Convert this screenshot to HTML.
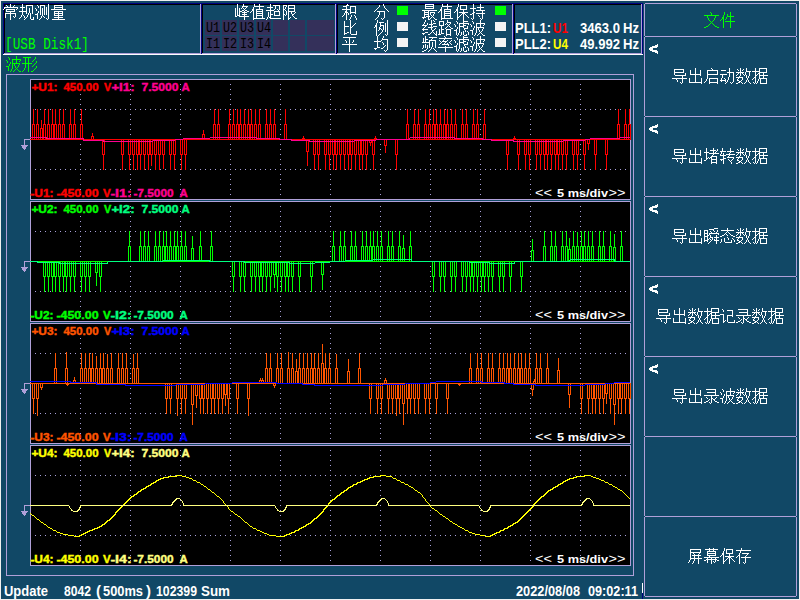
<!DOCTYPE html>
<html><head><meta charset="utf-8"><style>
html,body{margin:0;padding:0;width:800px;height:600px;overflow:hidden;background:#114866}
svg{display:block}
</style></head><body><div style="position:relative;width:800px;height:600px">
<svg width="800" height="600" style="position:absolute;left:0;top:0" shape-rendering="crispEdges">
<rect x="0" y="0" width="800" height="600" fill="#114866"/>
<rect x="0" y="0" width="800" height="1" fill="#f0f0f0"/>
<rect x="0" y="0" width="1" height="600" fill="#f0f0f0"/>
<rect x="0" y="599" width="800" height="1" fill="#f0f0f0"/>
<rect x="799" y="0" width="1" height="600" fill="#f0f0f0"/>
<rect x="3" y="3" width="199" height="1" fill="#000080"/>
<rect x="3" y="3" width="1" height="52" fill="#000080"/>
<rect x="4" y="4" width="197" height="1" fill="#000000"/>
<rect x="4" y="4" width="1" height="50" fill="#000000"/>
<rect x="4" y="53" width="197" height="1" fill="#b0a0d8"/>
<rect x="200" y="4" width="1" height="50" fill="#b0a0d8"/>
<rect x="3" y="54" width="199" height="1" fill="#ffffff"/>
<rect x="201" y="3" width="1" height="52" fill="#ffffff"/>
<rect x="201" y="3" width="136" height="1" fill="#000080"/>
<rect x="201" y="3" width="1" height="52" fill="#000080"/>
<rect x="202" y="4" width="134" height="1" fill="#000000"/>
<rect x="202" y="4" width="1" height="50" fill="#000000"/>
<rect x="202" y="53" width="134" height="1" fill="#b0a0d8"/>
<rect x="335" y="4" width="1" height="50" fill="#b0a0d8"/>
<rect x="201" y="54" width="136" height="1" fill="#ffffff"/>
<rect x="336" y="3" width="1" height="52" fill="#ffffff"/>
<rect x="336" y="3" width="178" height="1" fill="#000080"/>
<rect x="336" y="3" width="1" height="52" fill="#000080"/>
<rect x="337" y="4" width="176" height="1" fill="#000000"/>
<rect x="337" y="4" width="1" height="50" fill="#000000"/>
<rect x="337" y="53" width="176" height="1" fill="#b0a0d8"/>
<rect x="512" y="4" width="1" height="50" fill="#b0a0d8"/>
<rect x="336" y="54" width="178" height="1" fill="#ffffff"/>
<rect x="513" y="3" width="1" height="52" fill="#ffffff"/>
<rect x="513" y="3" width="130" height="1" fill="#000080"/>
<rect x="513" y="3" width="1" height="52" fill="#000080"/>
<rect x="514" y="4" width="128" height="1" fill="#000000"/>
<rect x="514" y="4" width="1" height="50" fill="#000000"/>
<rect x="514" y="53" width="128" height="1" fill="#b0a0d8"/>
<rect x="641" y="4" width="1" height="50" fill="#b0a0d8"/>
<rect x="513" y="54" width="130" height="1" fill="#ffffff"/>
<rect x="642" y="3" width="1" height="52" fill="#ffffff"/>
<rect x="642" y="3" width="1" height="51" fill="#000080"/>
<path fill="#ffffff" d="M10 4h1v1h-1zM22 4h1v1h-1zM48 4h1v1h-1zM6 5h1v1h-1zM10 5h1v1h-1zM14 5h1v1h-1zM22 5h1v1h-1zM26 5h7v1h-7zM37 5h1v1h-1zM40 5h5v1h-5zM48 5h1v1h-1zM54 5h9v1h-9zM7 6h1v1h-1zM10 6h1v1h-1zM13 6h1v1h-1zM22 6h1v1h-1zM26 6h1v1h-1zM32 6h1v1h-1zM38 6h1v1h-1zM40 6h1v1h-1zM44 6h1v1h-1zM48 6h1v1h-1zM54 6h1v1h-1zM62 6h1v1h-1zM4 7h14v1h-14zM20 7h5v1h-5zM26 7h1v1h-1zM32 7h1v1h-1zM38 7h1v1h-1zM40 7h1v1h-1zM44 7h1v1h-1zM46 7h1v1h-1zM48 7h1v1h-1zM54 7h9v1h-9zM4 8h1v1h-1zM17 8h1v1h-1zM22 8h1v1h-1zM26 8h1v1h-1zM29 8h1v1h-1zM32 8h1v1h-1zM35 8h1v1h-1zM40 8h1v1h-1zM42 8h1v1h-1zM44 8h1v1h-1zM46 8h1v1h-1zM48 8h1v1h-1zM54 8h1v1h-1zM62 8h1v1h-1zM3 9h1v1h-1zM6 9h9v1h-9zM16 9h1v1h-1zM22 9h1v1h-1zM26 9h1v1h-1zM29 9h1v1h-1zM32 9h1v1h-1zM36 9h1v1h-1zM40 9h1v1h-1zM42 9h1v1h-1zM44 9h1v1h-1zM46 9h1v1h-1zM48 9h1v1h-1zM51 9h15v1h-15zM6 10h1v1h-1zM14 10h1v1h-1zM22 10h1v1h-1zM26 10h1v1h-1zM29 10h1v1h-1zM32 10h1v1h-1zM36 10h1v1h-1zM40 10h1v1h-1zM42 10h1v1h-1zM44 10h1v1h-1zM46 10h1v1h-1zM48 10h1v1h-1zM6 11h9v1h-9zM19 11h8v1h-8zM29 11h1v1h-1zM32 11h1v1h-1zM38 11h1v1h-1zM40 11h1v1h-1zM42 11h1v1h-1zM44 11h1v1h-1zM46 11h1v1h-1zM48 11h1v1h-1zM54 11h9v1h-9zM10 12h1v1h-1zM22 12h1v1h-1zM26 12h1v1h-1zM29 12h1v1h-1zM32 12h1v1h-1zM38 12h1v1h-1zM40 12h1v1h-1zM42 12h1v1h-1zM44 12h1v1h-1zM46 12h1v1h-1zM48 12h1v1h-1zM54 12h1v1h-1zM58 12h1v1h-1zM62 12h1v1h-1zM5 13h11v1h-11zM22 13h1v1h-1zM26 13h1v1h-1zM28 13h1v1h-1zM30 13h1v1h-1zM32 13h1v1h-1zM37 13h1v1h-1zM40 13h1v1h-1zM42 13h1v1h-1zM44 13h1v1h-1zM46 13h1v1h-1zM48 13h1v1h-1zM54 13h9v1h-9zM5 14h1v1h-1zM10 14h1v1h-1zM15 14h1v1h-1zM22 14h1v1h-1zM28 14h1v1h-1zM30 14h1v1h-1zM35 14h3v1h-3zM40 14h1v1h-1zM42 14h1v1h-1zM44 14h1v1h-1zM46 14h1v1h-1zM48 14h1v1h-1zM54 14h1v1h-1zM58 14h1v1h-1zM62 14h1v1h-1zM5 15h1v1h-1zM10 15h1v1h-1zM15 15h1v1h-1zM21 15h1v1h-1zM23 15h1v1h-1zM27 15h1v1h-1zM30 15h1v1h-1zM37 15h1v1h-1zM42 15h1v1h-1zM48 15h1v1h-1zM54 15h9v1h-9zM5 16h1v1h-1zM10 16h1v1h-1zM13 16h1v1h-1zM15 16h1v1h-1zM21 16h1v1h-1zM24 16h1v1h-1zM27 16h1v1h-1zM30 16h1v1h-1zM37 16h1v1h-1zM41 16h1v1h-1zM43 16h1v1h-1zM48 16h1v1h-1zM58 16h1v1h-1zM5 17h1v1h-1zM10 17h1v1h-1zM14 17h1v1h-1zM20 17h1v1h-1zM24 17h1v1h-1zM26 17h1v1h-1zM30 17h1v1h-1zM33 17h1v1h-1zM37 17h1v1h-1zM41 17h1v1h-1zM44 17h1v1h-1zM48 17h1v1h-1zM54 17h9v1h-9zM10 18h1v1h-1zM19 18h1v1h-1zM25 18h1v1h-1zM30 18h1v1h-1zM33 18h1v1h-1zM37 18h1v1h-1zM40 18h1v1h-1zM46 18h1v1h-1zM48 18h1v1h-1zM58 18h1v1h-1zM10 19h1v1h-1zM24 19h1v1h-1zM31 19h3v1h-3zM39 19h1v1h-1zM47 19h1v1h-1zM52 19h13v1h-13z"/>
<text x="5" y="49" fill="#00ff00" font-size="17" font-weight="normal" font-family="Liberation Mono" textLength="84" lengthAdjust="spacingAndGlyphs">[USB Disk1]</text>
<path fill="#ffffff" d="M237 4h1v1h-1zM243 4h1v1h-1zM254 4h1v1h-1zM259 4h1v1h-1zM270 4h1v1h-1zM237 5h1v1h-1zM243 5h1v1h-1zM254 5h1v1h-1zM259 5h1v1h-1zM270 5h1v1h-1zM273 5h7v1h-7zM283 5h4v1h-4zM288 5h7v1h-7zM237 6h1v1h-1zM242 6h6v1h-6zM254 6h10v1h-10zM270 6h1v1h-1zM275 6h1v1h-1zM279 6h1v1h-1zM283 6h1v1h-1zM286 6h1v1h-1zM288 6h1v1h-1zM294 6h1v1h-1zM237 7h1v1h-1zM242 7h1v1h-1zM246 7h1v1h-1zM253 7h1v1h-1zM259 7h1v1h-1zM267 7h6v1h-6zM275 7h1v1h-1zM279 7h1v1h-1zM283 7h1v1h-1zM285 7h1v1h-1zM288 7h1v1h-1zM294 7h1v1h-1zM235 8h1v1h-1zM237 8h1v1h-1zM239 8h1v1h-1zM241 8h1v1h-1zM243 8h1v1h-1zM245 8h1v1h-1zM253 8h1v1h-1zM259 8h1v1h-1zM270 8h1v1h-1zM275 8h1v1h-1zM279 8h1v1h-1zM283 8h1v1h-1zM285 8h1v1h-1zM288 8h7v1h-7zM235 9h1v1h-1zM237 9h1v1h-1zM239 9h1v1h-1zM244 9h1v1h-1zM252 9h2v1h-2zM256 9h7v1h-7zM270 9h1v1h-1zM274 9h1v1h-1zM277 9h1v1h-1zM279 9h1v1h-1zM283 9h2v1h-2zM288 9h1v1h-1zM294 9h1v1h-1zM235 10h1v1h-1zM237 10h1v1h-1zM239 10h1v1h-1zM242 10h2v1h-2zM245 10h2v1h-2zM252 10h2v1h-2zM256 10h1v1h-1zM262 10h1v1h-1zM266 10h8v1h-8zM278 10h1v1h-1zM283 10h1v1h-1zM285 10h1v1h-1zM288 10h1v1h-1zM294 10h1v1h-1zM235 11h1v1h-1zM237 11h1v1h-1zM239 11h3v1h-3zM244 11h1v1h-1zM247 11h2v1h-2zM251 11h1v1h-1zM253 11h1v1h-1zM256 11h7v1h-7zM270 11h1v1h-1zM274 11h6v1h-6zM283 11h1v1h-1zM286 11h1v1h-1zM288 11h7v1h-7zM235 12h1v1h-1zM237 12h1v1h-1zM239 12h1v1h-1zM242 12h5v1h-5zM250 12h1v1h-1zM253 12h1v1h-1zM256 12h1v1h-1zM262 12h1v1h-1zM268 12h1v1h-1zM270 12h1v1h-1zM274 12h1v1h-1zM279 12h1v1h-1zM283 12h1v1h-1zM286 12h1v1h-1zM288 12h1v1h-1zM291 12h1v1h-1zM295 12h1v1h-1zM235 13h1v1h-1zM237 13h1v1h-1zM239 13h1v1h-1zM244 13h1v1h-1zM253 13h1v1h-1zM256 13h7v1h-7zM268 13h1v1h-1zM270 13h1v1h-1zM274 13h1v1h-1zM279 13h1v1h-1zM283 13h1v1h-1zM286 13h1v1h-1zM288 13h1v1h-1zM291 13h1v1h-1zM294 13h1v1h-1zM235 14h1v1h-1zM237 14h1v1h-1zM239 14h1v1h-1zM242 14h5v1h-5zM253 14h1v1h-1zM256 14h1v1h-1zM262 14h1v1h-1zM268 14h1v1h-1zM270 14h3v1h-3zM274 14h1v1h-1zM279 14h1v1h-1zM283 14h2v1h-2zM286 14h1v1h-1zM288 14h1v1h-1zM292 14h2v1h-2zM235 15h1v1h-1zM237 15h3v1h-3zM244 15h1v1h-1zM253 15h1v1h-1zM256 15h7v1h-7zM268 15h1v1h-1zM270 15h1v1h-1zM274 15h6v1h-6zM283 15h1v1h-1zM285 15h1v1h-1zM288 15h1v1h-1zM292 15h1v1h-1zM235 16h2v1h-2zM239 16h10v1h-10zM253 16h1v1h-1zM256 16h1v1h-1zM262 16h1v1h-1zM268 16h1v1h-1zM270 16h1v1h-1zM283 16h1v1h-1zM288 16h1v1h-1zM293 16h1v1h-1zM244 17h1v1h-1zM253 17h1v1h-1zM256 17h1v1h-1zM262 17h1v1h-1zM267 17h1v1h-1zM269 17h2v1h-2zM283 17h1v1h-1zM288 17h1v1h-1zM290 17h1v1h-1zM294 17h1v1h-1zM244 18h1v1h-1zM253 18h12v1h-12zM267 18h1v1h-1zM270 18h11v1h-11zM283 18h1v1h-1zM288 18h2v1h-2zM295 18h2v1h-2zM244 19h1v1h-1zM253 19h1v1h-1zM266 19h1v1h-1zM283 19h1v1h-1zM288 19h1v1h-1z"/>
<rect x="205" y="20" width="15" height="15" fill="#34305a"/>
<rect x="222" y="20" width="15" height="15" fill="#34305a"/>
<rect x="239" y="20" width="15" height="15" fill="#34305a"/>
<rect x="256" y="20" width="15" height="15" fill="#34305a"/>
<rect x="273" y="20" width="15" height="15" fill="#34305a"/>
<rect x="290" y="20" width="15" height="15" fill="#34305a"/>
<rect x="307" y="20" width="27" height="15" fill="#34305a"/>
<rect x="205" y="36" width="15" height="15" fill="#34305a"/>
<rect x="222" y="36" width="15" height="15" fill="#34305a"/>
<rect x="239" y="36" width="15" height="15" fill="#34305a"/>
<rect x="256" y="36" width="15" height="15" fill="#34305a"/>
<rect x="273" y="36" width="15" height="15" fill="#34305a"/>
<rect x="290" y="36" width="15" height="15" fill="#34305a"/>
<rect x="307" y="36" width="27" height="15" fill="#34305a"/>
<text x="206" y="32" fill="#000000" font-size="14" font-weight="normal" font-family="Liberation Mono" textLength="14" lengthAdjust="spacingAndGlyphs">U1</text>
<text x="206" y="48" fill="#000000" font-size="14" font-weight="normal" font-family="Liberation Mono" textLength="14" lengthAdjust="spacingAndGlyphs">I1</text>
<text x="223" y="32" fill="#000000" font-size="14" font-weight="normal" font-family="Liberation Mono" textLength="14" lengthAdjust="spacingAndGlyphs">U2</text>
<text x="223" y="48" fill="#000000" font-size="14" font-weight="normal" font-family="Liberation Mono" textLength="14" lengthAdjust="spacingAndGlyphs">I2</text>
<text x="240" y="32" fill="#000000" font-size="14" font-weight="normal" font-family="Liberation Mono" textLength="14" lengthAdjust="spacingAndGlyphs">U3</text>
<text x="240" y="48" fill="#000000" font-size="14" font-weight="normal" font-family="Liberation Mono" textLength="14" lengthAdjust="spacingAndGlyphs">I3</text>
<text x="257" y="32" fill="#000000" font-size="14" font-weight="normal" font-family="Liberation Mono" textLength="14" lengthAdjust="spacingAndGlyphs">U4</text>
<text x="257" y="48" fill="#000000" font-size="14" font-weight="normal" font-family="Liberation Mono" textLength="14" lengthAdjust="spacingAndGlyphs">I4</text>
<path fill="#ffffff" d="M347 4h1v1h-1zM346 5h3v1h-3zM343 6h4v1h-4zM350 6h6v1h-6zM346 7h1v1h-1zM350 7h1v1h-1zM355 7h1v1h-1zM346 8h1v1h-1zM350 8h1v1h-1zM355 8h1v1h-1zM342 9h9v1h-9zM355 9h1v1h-1zM346 10h1v1h-1zM350 10h1v1h-1zM355 10h1v1h-1zM345 11h2v1h-2zM350 11h1v1h-1zM355 11h1v1h-1zM345 12h3v1h-3zM350 12h6v1h-6zM344 13h1v1h-1zM346 13h1v1h-1zM348 13h1v1h-1zM350 13h1v1h-1zM355 13h1v1h-1zM344 14h1v1h-1zM346 14h1v1h-1zM348 14h1v1h-1zM343 15h1v1h-1zM346 15h1v1h-1zM351 15h1v1h-1zM354 15h1v1h-1zM342 16h1v1h-1zM346 16h1v1h-1zM351 16h1v1h-1zM355 16h1v1h-1zM346 17h1v1h-1zM350 17h1v1h-1zM355 17h1v1h-1zM346 18h1v1h-1zM350 18h1v1h-1zM356 18h1v1h-1zM346 19h1v1h-1zM349 19h1v1h-1zM356 19h1v1h-1z"/>
<path fill="#ffffff" d="M383 4h1v1h-1zM379 5h1v1h-1zM383 5h1v1h-1zM379 6h1v1h-1zM384 6h1v1h-1zM378 7h1v1h-1zM384 7h1v1h-1zM377 8h1v1h-1zM385 8h1v1h-1zM376 9h1v1h-1zM386 9h1v1h-1zM375 10h1v1h-1zM387 10h1v1h-1zM374 11h1v1h-1zM377 11h8v1h-8zM388 11h1v1h-1zM379 12h1v1h-1zM384 12h1v1h-1zM379 13h1v1h-1zM384 13h1v1h-1zM379 14h1v1h-1zM384 14h1v1h-1zM378 15h1v1h-1zM384 15h1v1h-1zM378 16h1v1h-1zM384 16h1v1h-1zM377 17h1v1h-1zM384 17h1v1h-1zM376 18h1v1h-1zM381 18h1v1h-1zM383 18h1v1h-1zM375 19h1v1h-1zM382 19h1v1h-1z"/>
<path fill="#ffffff" d="M350 20h1v1h-1zM344 21h1v1h-1zM350 21h1v1h-1zM344 22h1v1h-1zM350 22h1v1h-1zM344 23h1v1h-1zM350 23h1v1h-1zM355 23h1v1h-1zM344 24h1v1h-1zM350 24h1v1h-1zM354 24h1v1h-1zM344 25h1v1h-1zM350 25h1v1h-1zM353 25h1v1h-1zM344 26h5v1h-5zM350 26h1v1h-1zM352 26h1v1h-1zM344 27h1v1h-1zM350 27h2v1h-2zM344 28h1v1h-1zM350 28h1v1h-1zM344 29h1v1h-1zM350 29h1v1h-1zM344 30h1v1h-1zM350 30h1v1h-1zM344 31h1v1h-1zM350 31h1v1h-1zM356 31h1v1h-1zM344 32h1v1h-1zM347 32h2v1h-2zM350 32h1v1h-1zM356 32h1v1h-1zM344 33h3v1h-3zM350 33h1v1h-1zM356 33h1v1h-1zM344 34h1v1h-1zM351 34h6v1h-6z"/>
<path fill="#ffffff" d="M377 20h1v1h-1zM387 20h1v1h-1zM377 21h1v1h-1zM387 21h1v1h-1zM377 22h1v1h-1zM379 22h5v1h-5zM387 22h1v1h-1zM376 23h1v1h-1zM380 23h1v1h-1zM385 23h1v1h-1zM387 23h1v1h-1zM376 24h1v1h-1zM380 24h1v1h-1zM385 24h1v1h-1zM387 24h1v1h-1zM375 25h2v1h-2zM380 25h4v1h-4zM385 25h1v1h-1zM387 25h1v1h-1zM375 26h2v1h-2zM380 26h1v1h-1zM383 26h1v1h-1zM385 26h1v1h-1zM387 26h1v1h-1zM374 27h1v1h-1zM376 27h1v1h-1zM379 27h1v1h-1zM383 27h1v1h-1zM385 27h1v1h-1zM387 27h1v1h-1zM376 28h1v1h-1zM379 28h2v1h-2zM383 28h1v1h-1zM385 28h1v1h-1zM387 28h1v1h-1zM376 29h1v1h-1zM379 29h1v1h-1zM381 29h1v1h-1zM383 29h1v1h-1zM385 29h1v1h-1zM387 29h1v1h-1zM376 30h1v1h-1zM378 30h1v1h-1zM382 30h1v1h-1zM385 30h1v1h-1zM387 30h1v1h-1zM376 31h1v1h-1zM382 31h1v1h-1zM385 31h1v1h-1zM387 31h1v1h-1zM376 32h1v1h-1zM381 32h1v1h-1zM387 32h1v1h-1zM376 33h1v1h-1zM380 33h1v1h-1zM387 33h1v1h-1zM376 34h1v1h-1zM379 34h1v1h-1zM385 34h1v1h-1zM387 34h1v1h-1zM376 35h1v1h-1zM378 35h1v1h-1zM386 35h1v1h-1z"/>
<path fill="#ffffff" d="M343 37h13v1h-13zM349 38h1v1h-1zM349 39h1v1h-1zM345 40h1v1h-1zM349 40h1v1h-1zM353 40h1v1h-1zM346 41h1v1h-1zM349 41h1v1h-1zM353 41h1v1h-1zM346 42h1v1h-1zM349 42h1v1h-1zM352 42h1v1h-1zM349 43h1v1h-1zM342 44h15v1h-15zM349 45h1v1h-1zM349 46h1v1h-1zM349 47h1v1h-1zM349 48h1v1h-1zM349 49h1v1h-1zM349 50h1v1h-1zM349 51h1v1h-1z"/>
<path fill="#ffffff" d="M377 36h1v1h-1zM383 36h1v1h-1zM377 37h1v1h-1zM383 37h1v1h-1zM377 38h1v1h-1zM382 38h1v1h-1zM377 39h1v1h-1zM382 39h6v1h-6zM377 40h1v1h-1zM381 40h1v1h-1zM387 40h1v1h-1zM374 41h7v1h-7zM387 41h1v1h-1zM377 42h1v1h-1zM382 42h1v1h-1zM387 42h1v1h-1zM377 43h1v1h-1zM383 43h1v1h-1zM387 43h1v1h-1zM377 44h1v1h-1zM383 44h1v1h-1zM387 44h1v1h-1zM377 45h1v1h-1zM385 45h1v1h-1zM387 45h1v1h-1zM377 46h1v1h-1zM384 46h1v1h-1zM387 46h1v1h-1zM377 47h3v1h-3zM383 47h1v1h-1zM387 47h1v1h-1zM374 48h3v1h-3zM381 48h2v1h-2zM387 48h1v1h-1zM375 49h1v1h-1zM387 49h1v1h-1zM384 50h1v1h-1zM386 50h1v1h-1zM385 51h1v1h-1z"/>
<rect x="397" y="6" width="11" height="9" fill="#00ff00"/>
<rect x="397" y="22" width="11" height="9" fill="#f4f4f4"/>
<rect x="397" y="38" width="11" height="9" fill="#f4f4f4"/>
<path fill="#ffffff" d="M425 4h9v1h-9zM442 4h1v1h-1zM447 4h1v1h-1zM458 4h1v1h-1zM473 4h1v1h-1zM480 4h1v1h-1zM425 5h1v1h-1zM433 5h1v1h-1zM442 5h1v1h-1zM447 5h1v1h-1zM458 5h1v1h-1zM460 5h7v1h-7zM473 5h1v1h-1zM480 5h1v1h-1zM425 6h9v1h-9zM442 6h10v1h-10zM458 6h1v1h-1zM460 6h1v1h-1zM466 6h1v1h-1zM473 6h1v1h-1zM480 6h1v1h-1zM425 7h1v1h-1zM433 7h1v1h-1zM441 7h1v1h-1zM447 7h1v1h-1zM457 7h1v1h-1zM460 7h1v1h-1zM466 7h1v1h-1zM473 7h1v1h-1zM477 7h7v1h-7zM425 8h9v1h-9zM441 8h1v1h-1zM447 8h1v1h-1zM457 8h1v1h-1zM460 8h1v1h-1zM466 8h1v1h-1zM470 8h6v1h-6zM480 8h1v1h-1zM440 9h2v1h-2zM444 9h7v1h-7zM456 9h2v1h-2zM460 9h7v1h-7zM473 9h1v1h-1zM480 9h1v1h-1zM422 10h15v1h-15zM440 10h2v1h-2zM444 10h1v1h-1zM450 10h1v1h-1zM456 10h2v1h-2zM463 10h1v1h-1zM473 10h1v1h-1zM476 10h9v1h-9zM424 11h1v1h-1zM428 11h1v1h-1zM439 11h1v1h-1zM441 11h1v1h-1zM444 11h7v1h-7zM455 11h1v1h-1zM457 11h1v1h-1zM463 11h1v1h-1zM473 11h1v1h-1zM482 11h1v1h-1zM424 12h5v1h-5zM430 12h5v1h-5zM438 12h1v1h-1zM441 12h1v1h-1zM444 12h1v1h-1zM450 12h1v1h-1zM454 12h1v1h-1zM457 12h1v1h-1zM459 12h9v1h-9zM473 12h2v1h-2zM482 12h1v1h-1zM424 13h1v1h-1zM428 13h1v1h-1zM430 13h1v1h-1zM434 13h1v1h-1zM441 13h1v1h-1zM444 13h7v1h-7zM457 13h1v1h-1zM462 13h3v1h-3zM472 13h2v1h-2zM476 13h9v1h-9zM424 14h5v1h-5zM430 14h1v1h-1zM433 14h1v1h-1zM441 14h1v1h-1zM444 14h1v1h-1zM450 14h1v1h-1zM457 14h1v1h-1zM461 14h1v1h-1zM463 14h1v1h-1zM465 14h1v1h-1zM470 14h2v1h-2zM473 14h1v1h-1zM482 14h1v1h-1zM424 15h1v1h-1zM428 15h1v1h-1zM431 15h1v1h-1zM433 15h1v1h-1zM441 15h1v1h-1zM444 15h7v1h-7zM457 15h1v1h-1zM460 15h1v1h-1zM463 15h1v1h-1zM466 15h1v1h-1zM473 15h1v1h-1zM478 15h1v1h-1zM482 15h1v1h-1zM424 16h1v1h-1zM426 16h4v1h-4zM432 16h1v1h-1zM441 16h1v1h-1zM444 16h1v1h-1zM450 16h1v1h-1zM457 16h1v1h-1zM459 16h1v1h-1zM463 16h1v1h-1zM467 16h1v1h-1zM473 16h1v1h-1zM479 16h1v1h-1zM482 16h1v1h-1zM422 17h4v1h-4zM428 17h1v1h-1zM431 17h1v1h-1zM433 17h1v1h-1zM441 17h1v1h-1zM444 17h1v1h-1zM450 17h1v1h-1zM457 17h2v1h-2zM463 17h1v1h-1zM468 17h1v1h-1zM473 17h1v1h-1zM482 17h1v1h-1zM423 18h1v1h-1zM428 18h1v1h-1zM430 18h1v1h-1zM434 18h1v1h-1zM441 18h12v1h-12zM457 18h1v1h-1zM463 18h1v1h-1zM471 18h1v1h-1zM473 18h1v1h-1zM480 18h1v1h-1zM482 18h1v1h-1zM428 19h2v1h-2zM435 19h2v1h-2zM441 19h1v1h-1zM457 19h1v1h-1zM463 19h1v1h-1zM472 19h1v1h-1zM481 19h1v1h-1z"/>
<path fill="#ffffff" d="M425 20h1v1h-1zM431 20h1v1h-1zM433 20h1v1h-1zM447 20h1v1h-1zM463 20h1v1h-1zM480 20h1v1h-1zM425 21h1v1h-1zM431 21h1v1h-1zM434 21h1v1h-1zM439 21h5v1h-5zM447 21h1v1h-1zM456 21h1v1h-1zM463 21h5v1h-5zM472 21h1v1h-1zM480 21h1v1h-1zM424 22h1v1h-1zM431 22h1v1h-1zM439 22h1v1h-1zM443 22h1v1h-1zM447 22h4v1h-4zM457 22h1v1h-1zM463 22h1v1h-1zM473 22h1v1h-1zM480 22h1v1h-1zM424 23h1v1h-1zM427 23h1v1h-1zM431 23h1v1h-1zM433 23h3v1h-3zM439 23h1v1h-1zM443 23h1v1h-1zM446 23h1v1h-1zM450 23h1v1h-1zM457 23h1v1h-1zM459 23h10v1h-10zM473 23h1v1h-1zM476 23h9v1h-9zM423 24h1v1h-1zM427 24h1v1h-1zM429 24h4v1h-4zM439 24h1v1h-1zM443 24h1v1h-1zM445 24h1v1h-1zM447 24h1v1h-1zM449 24h1v1h-1zM454 24h1v1h-1zM459 24h1v1h-1zM463 24h1v1h-1zM468 24h1v1h-1zM470 24h1v1h-1zM476 24h1v1h-1zM480 24h1v1h-1zM484 24h1v1h-1zM422 25h5v1h-5zM431 25h1v1h-1zM439 25h5v1h-5zM448 25h1v1h-1zM455 25h1v1h-1zM459 25h1v1h-1zM463 25h3v1h-3zM471 25h1v1h-1zM476 25h1v1h-1zM480 25h1v1h-1zM483 25h1v1h-1zM425 26h1v1h-1zM431 26h1v1h-1zM433 26h4v1h-4zM441 26h1v1h-1zM447 26h1v1h-1zM449 26h1v1h-1zM455 26h1v1h-1zM459 26h5v1h-5zM467 26h1v1h-1zM471 26h1v1h-1zM474 26h1v1h-1zM476 26h1v1h-1zM480 26h1v1h-1zM424 27h1v1h-1zM428 27h5v1h-5zM441 27h1v1h-1zM446 27h1v1h-1zM450 27h1v1h-1zM457 27h1v1h-1zM459 27h1v1h-1zM463 27h1v1h-1zM467 27h1v1h-1zM474 27h1v1h-1zM476 27h8v1h-8zM423 28h1v1h-1zM431 28h1v1h-1zM435 28h1v1h-1zM441 28h1v1h-1zM445 28h1v1h-1zM451 28h2v1h-2zM457 28h1v1h-1zM459 28h1v1h-1zM464 28h4v1h-4zM473 28h1v1h-1zM476 28h1v1h-1zM478 28h1v1h-1zM483 28h1v1h-1zM422 29h6v1h-6zM431 29h1v1h-1zM434 29h1v1h-1zM439 29h1v1h-1zM441 29h3v1h-3zM446 29h5v1h-5zM456 29h1v1h-1zM459 29h1v1h-1zM464 29h1v1h-1zM473 29h1v1h-1zM476 29h1v1h-1zM478 29h1v1h-1zM482 29h1v1h-1zM423 30h1v1h-1zM432 30h2v1h-2zM439 30h1v1h-1zM441 30h1v1h-1zM446 30h1v1h-1zM450 30h1v1h-1zM454 30h3v1h-3zM459 30h1v1h-1zM465 30h1v1h-1zM470 30h3v1h-3zM476 30h1v1h-1zM479 30h1v1h-1zM482 30h1v1h-1zM432 31h1v1h-1zM436 31h1v1h-1zM439 31h1v1h-1zM441 31h1v1h-1zM446 31h1v1h-1zM450 31h1v1h-1zM456 31h1v1h-1zM459 31h1v1h-1zM463 31h1v1h-1zM465 31h1v1h-1zM467 31h1v1h-1zM472 31h1v1h-1zM476 31h1v1h-1zM479 31h1v1h-1zM481 31h1v1h-1zM425 32h3v1h-3zM431 32h1v1h-1zM433 32h1v1h-1zM436 32h1v1h-1zM439 32h1v1h-1zM441 32h1v1h-1zM446 32h1v1h-1zM450 32h1v1h-1zM456 32h1v1h-1zM459 32h1v1h-1zM461 32h1v1h-1zM463 32h1v1h-1zM468 32h1v1h-1zM472 32h1v1h-1zM476 32h1v1h-1zM480 32h1v1h-1zM422 33h3v1h-3zM430 33h1v1h-1zM434 33h1v1h-1zM436 33h1v1h-1zM439 33h1v1h-1zM441 33h3v1h-3zM446 33h1v1h-1zM450 33h1v1h-1zM456 33h1v1h-1zM458 33h1v1h-1zM461 33h1v1h-1zM463 33h1v1h-1zM468 33h1v1h-1zM472 33h1v1h-1zM475 33h1v1h-1zM479 33h1v1h-1zM481 33h1v1h-1zM423 34h1v1h-1zM428 34h2v1h-2zM435 34h2v1h-2zM438 34h3v1h-3zM446 34h5v1h-5zM456 34h1v1h-1zM458 34h1v1h-1zM461 34h1v1h-1zM463 34h1v1h-1zM466 34h1v1h-1zM468 34h1v1h-1zM472 34h1v1h-1zM475 34h1v1h-1zM478 34h1v1h-1zM482 34h1v1h-1zM436 35h1v1h-1zM446 35h1v1h-1zM450 35h1v1h-1zM457 35h1v1h-1zM460 35h1v1h-1zM464 35h3v1h-3zM474 35h1v1h-1zM477 35h1v1h-1zM483 35h2v1h-2z"/>
<path fill="#ffffff" d="M425 36h1v1h-1zM444 36h1v1h-1zM463 36h1v1h-1zM480 36h1v1h-1zM425 37h1v1h-1zM429 37h8v1h-8zM445 37h1v1h-1zM456 37h1v1h-1zM463 37h5v1h-5zM472 37h1v1h-1zM480 37h1v1h-1zM423 38h1v1h-1zM425 38h1v1h-1zM432 38h1v1h-1zM439 38h13v1h-13zM457 38h1v1h-1zM463 38h1v1h-1zM473 38h1v1h-1zM480 38h1v1h-1zM423 39h1v1h-1zM425 39h3v1h-3zM431 39h1v1h-1zM444 39h1v1h-1zM457 39h1v1h-1zM459 39h10v1h-10zM473 39h1v1h-1zM476 39h9v1h-9zM423 40h1v1h-1zM425 40h1v1h-1zM429 40h7v1h-7zM439 40h1v1h-1zM443 40h1v1h-1zM447 40h1v1h-1zM451 40h1v1h-1zM454 40h1v1h-1zM459 40h1v1h-1zM463 40h1v1h-1zM468 40h1v1h-1zM470 40h1v1h-1zM476 40h1v1h-1zM480 40h1v1h-1zM484 40h1v1h-1zM423 41h1v1h-1zM425 41h1v1h-1zM429 41h1v1h-1zM435 41h1v1h-1zM440 41h1v1h-1zM442 41h5v1h-5zM450 41h1v1h-1zM455 41h1v1h-1zM459 41h1v1h-1zM463 41h3v1h-3zM471 41h1v1h-1zM476 41h1v1h-1zM480 41h1v1h-1zM483 41h1v1h-1zM422 42h8v1h-8zM432 42h1v1h-1zM435 42h1v1h-1zM441 42h1v1h-1zM445 42h1v1h-1zM449 42h1v1h-1zM455 42h1v1h-1zM459 42h5v1h-5zM467 42h1v1h-1zM471 42h1v1h-1zM474 42h1v1h-1zM476 42h1v1h-1zM480 42h1v1h-1zM429 43h1v1h-1zM432 43h1v1h-1zM435 43h1v1h-1zM440 43h1v1h-1zM444 43h1v1h-1zM447 43h1v1h-1zM450 43h1v1h-1zM457 43h1v1h-1zM459 43h1v1h-1zM463 43h1v1h-1zM467 43h1v1h-1zM474 43h1v1h-1zM476 43h8v1h-8zM425 44h1v1h-1zM429 44h1v1h-1zM432 44h1v1h-1zM435 44h1v1h-1zM439 44h1v1h-1zM442 44h7v1h-7zM451 44h1v1h-1zM457 44h1v1h-1zM459 44h1v1h-1zM464 44h4v1h-4zM473 44h1v1h-1zM476 44h1v1h-1zM478 44h1v1h-1zM483 44h1v1h-1zM423 45h1v1h-1zM425 45h1v1h-1zM427 45h1v1h-1zM429 45h1v1h-1zM432 45h1v1h-1zM435 45h1v1h-1zM448 45h1v1h-1zM456 45h1v1h-1zM459 45h1v1h-1zM464 45h1v1h-1zM473 45h1v1h-1zM476 45h1v1h-1zM478 45h1v1h-1zM482 45h1v1h-1zM423 46h1v1h-1zM425 46h1v1h-1zM427 46h1v1h-1zM429 46h1v1h-1zM432 46h1v1h-1zM435 46h1v1h-1zM445 46h1v1h-1zM454 46h3v1h-3zM459 46h1v1h-1zM465 46h1v1h-1zM470 46h3v1h-3zM476 46h1v1h-1zM479 46h1v1h-1zM482 46h1v1h-1zM423 47h1v1h-1zM425 47h1v1h-1zM427 47h1v1h-1zM429 47h1v1h-1zM431 47h1v1h-1zM435 47h1v1h-1zM438 47h15v1h-15zM456 47h1v1h-1zM459 47h1v1h-1zM463 47h1v1h-1zM465 47h1v1h-1zM467 47h1v1h-1zM472 47h1v1h-1zM476 47h1v1h-1zM479 47h1v1h-1zM481 47h1v1h-1zM422 48h1v1h-1zM427 48h1v1h-1zM431 48h1v1h-1zM433 48h1v1h-1zM445 48h1v1h-1zM456 48h1v1h-1zM459 48h1v1h-1zM461 48h1v1h-1zM463 48h1v1h-1zM468 48h1v1h-1zM472 48h1v1h-1zM476 48h1v1h-1zM480 48h1v1h-1zM426 49h1v1h-1zM430 49h1v1h-1zM434 49h1v1h-1zM445 49h1v1h-1zM456 49h1v1h-1zM458 49h1v1h-1zM461 49h1v1h-1zM463 49h1v1h-1zM468 49h1v1h-1zM472 49h1v1h-1zM475 49h1v1h-1zM479 49h1v1h-1zM481 49h1v1h-1zM424 50h2v1h-2zM429 50h1v1h-1zM435 50h1v1h-1zM445 50h1v1h-1zM456 50h1v1h-1zM458 50h1v1h-1zM461 50h1v1h-1zM463 50h1v1h-1zM466 50h1v1h-1zM468 50h1v1h-1zM472 50h1v1h-1zM475 50h1v1h-1zM478 50h1v1h-1zM482 50h1v1h-1zM422 51h2v1h-2zM428 51h1v1h-1zM436 51h1v1h-1zM445 51h1v1h-1zM457 51h1v1h-1zM460 51h1v1h-1zM464 51h3v1h-3zM474 51h1v1h-1zM477 51h1v1h-1zM483 51h2v1h-2z"/>
<rect x="495" y="6" width="11" height="9" fill="#00ff00"/>
<rect x="495" y="22" width="11" height="9" fill="#f4f4f4"/>
<rect x="495" y="38" width="11" height="9" fill="#f4f4f4"/>
<text x="515" y="33" fill="#ffffff" font-size="14" font-weight="bold" font-family="Liberation Sans" textLength="36" lengthAdjust="spacingAndGlyphs">PLL1:</text>
<text x="553" y="33" fill="#ff0000" font-size="14" font-weight="bold" font-family="Liberation Sans" textLength="15" lengthAdjust="spacingAndGlyphs">U1</text>
<text x="580" y="33" fill="#ffffff" font-size="14" font-weight="bold" font-family="Liberation Sans" textLength="40" lengthAdjust="spacingAndGlyphs">3463.0</text>
<text x="623" y="33" fill="#ffffff" font-size="14" font-weight="bold" font-family="Liberation Sans" textLength="16" lengthAdjust="spacingAndGlyphs">Hz</text>
<text x="515" y="49" fill="#ffffff" font-size="14" font-weight="bold" font-family="Liberation Sans" textLength="36" lengthAdjust="spacingAndGlyphs">PLL2:</text>
<text x="553" y="49" fill="#ffff00" font-size="14" font-weight="bold" font-family="Liberation Sans" textLength="15" lengthAdjust="spacingAndGlyphs">U4</text>
<text x="580" y="49" fill="#ffffff" font-size="14" font-weight="bold" font-family="Liberation Sans" textLength="40" lengthAdjust="spacingAndGlyphs">49.992</text>
<text x="623" y="49" fill="#ffffff" font-size="14" font-weight="bold" font-family="Liberation Sans" textLength="16" lengthAdjust="spacingAndGlyphs">Hz</text>
<rect x="644.5" y="3.5" width="152" height="33" rx="2" ry="2" fill="none" stroke="#b0a0d8" stroke-width="1"/>
<path fill="#00ff00" d="M710 12h1v1h-1zM724 12h1v1h-1zM730 12h1v1h-1zM711 13h1v1h-1zM724 13h1v1h-1zM730 13h1v1h-1zM711 14h1v1h-1zM724 14h1v1h-1zM727 14h1v1h-1zM730 14h1v1h-1zM704 15h15v1h-15zM723 15h1v1h-1zM727 15h1v1h-1zM730 15h1v1h-1zM707 16h1v1h-1zM715 16h1v1h-1zM723 16h1v1h-1zM727 16h7v1h-7zM707 17h1v1h-1zM715 17h1v1h-1zM722 17h2v1h-2zM726 17h1v1h-1zM730 17h1v1h-1zM708 18h1v1h-1zM714 18h1v1h-1zM722 18h2v1h-2zM726 18h1v1h-1zM730 18h1v1h-1zM708 19h1v1h-1zM714 19h1v1h-1zM721 19h1v1h-1zM723 19h1v1h-1zM725 19h1v1h-1zM730 19h1v1h-1zM709 20h1v1h-1zM713 20h1v1h-1zM720 20h1v1h-1zM723 20h1v1h-1zM730 20h1v1h-1zM710 21h1v1h-1zM712 21h1v1h-1zM723 21h1v1h-1zM725 21h10v1h-10zM711 22h1v1h-1zM723 22h1v1h-1zM730 22h1v1h-1zM710 23h1v1h-1zM712 23h1v1h-1zM723 23h1v1h-1zM730 23h1v1h-1zM709 24h1v1h-1zM713 24h1v1h-1zM723 24h1v1h-1zM730 24h1v1h-1zM708 25h1v1h-1zM714 25h1v1h-1zM723 25h1v1h-1zM730 25h1v1h-1zM706 26h2v1h-2zM715 26h2v1h-2zM723 26h1v1h-1zM730 26h1v1h-1zM704 27h2v1h-2zM717 27h2v1h-2zM723 27h1v1h-1zM730 27h1v1h-1z"/>
<rect x="644.5" y="36.5" width="152" height="80" rx="2" ry="2" fill="none" stroke="#b0a0d8" stroke-width="1"/>
<path d="M657 44h1v1h-1zM655 45h3v1h-3zM652 46h6v1h-6zM650 47h7v1h-7zM649 48h4v1h-4zM649 49h4v1h-4zM650 50h7v1h-7zM652 51h6v1h-6zM655 52h3v1h-3zM657 53h1v1h-1z" fill="#ffffff"/>
<path fill="#ffffff" d="M695 68h1v1h-1zM711 68h1v1h-1zM729 68h1v1h-1zM740 68h1v1h-1zM746 68h1v1h-1zM755 68h1v1h-1zM759 68h8v1h-8zM674 69h10v1h-10zM695 69h1v1h-1zM712 69h1v1h-1zM729 69h1v1h-1zM737 69h1v1h-1zM740 69h1v1h-1zM743 69h1v1h-1zM746 69h1v1h-1zM755 69h1v1h-1zM759 69h1v1h-1zM766 69h1v1h-1zM674 70h1v1h-1zM683 70h1v1h-1zM690 70h1v1h-1zM695 70h1v1h-1zM700 70h1v1h-1zM707 70h11v1h-11zM721 70h5v1h-5zM729 70h1v1h-1zM738 70h1v1h-1zM740 70h1v1h-1zM742 70h1v1h-1zM746 70h1v1h-1zM755 70h1v1h-1zM759 70h1v1h-1zM766 70h1v1h-1zM674 71h1v1h-1zM683 71h1v1h-1zM690 71h1v1h-1zM695 71h1v1h-1zM700 71h1v1h-1zM707 71h1v1h-1zM717 71h1v1h-1zM729 71h1v1h-1zM740 71h1v1h-1zM746 71h5v1h-5zM752 71h8v1h-8zM766 71h1v1h-1zM674 72h10v1h-10zM690 72h1v1h-1zM695 72h1v1h-1zM700 72h1v1h-1zM707 72h1v1h-1zM717 72h1v1h-1zM727 72h7v1h-7zM736 72h8v1h-8zM745 72h1v1h-1zM749 72h1v1h-1zM755 72h1v1h-1zM759 72h8v1h-8zM674 73h1v1h-1zM685 73h1v1h-1zM690 73h1v1h-1zM695 73h1v1h-1zM700 73h1v1h-1zM707 73h1v1h-1zM717 73h1v1h-1zM729 73h1v1h-1zM733 73h1v1h-1zM738 73h1v1h-1zM740 73h1v1h-1zM742 73h1v1h-1zM745 73h1v1h-1zM749 73h1v1h-1zM755 73h1v1h-1zM758 73h2v1h-2zM763 73h1v1h-1zM674 74h1v1h-1zM685 74h1v1h-1zM690 74h11v1h-11zM707 74h11v1h-11zM720 74h7v1h-7zM729 74h1v1h-1zM733 74h1v1h-1zM737 74h1v1h-1zM740 74h1v1h-1zM743 74h1v1h-1zM745 74h1v1h-1zM749 74h1v1h-1zM755 74h1v1h-1zM757 74h1v1h-1zM759 74h1v1h-1zM763 74h1v1h-1zM675 75h11v1h-11zM695 75h1v1h-1zM700 75h1v1h-1zM707 75h1v1h-1zM722 75h1v1h-1zM729 75h1v1h-1zM733 75h1v1h-1zM736 75h1v1h-1zM740 75h1v1h-1zM744 75h1v1h-1zM746 75h1v1h-1zM749 75h1v1h-1zM755 75h2v1h-2zM759 75h9v1h-9zM682 76h1v1h-1zM695 76h1v1h-1zM707 76h1v1h-1zM722 76h1v1h-1zM729 76h1v1h-1zM733 76h1v1h-1zM739 76h1v1h-1zM746 76h1v1h-1zM748 76h1v1h-1zM755 76h1v1h-1zM759 76h1v1h-1zM763 76h1v1h-1zM682 77h1v1h-1zM695 77h1v1h-1zM707 77h1v1h-1zM722 77h1v1h-1zM728 77h1v1h-1zM733 77h1v1h-1zM736 77h7v1h-7zM746 77h1v1h-1zM748 77h1v1h-1zM754 77h2v1h-2zM759 77h1v1h-1zM763 77h1v1h-1zM672 78h15v1h-15zM689 78h1v1h-1zM695 78h1v1h-1zM701 78h1v1h-1zM707 78h1v1h-1zM709 78h9v1h-9zM721 78h1v1h-1zM724 78h1v1h-1zM728 78h1v1h-1zM733 78h1v1h-1zM738 78h1v1h-1zM742 78h1v1h-1zM747 78h1v1h-1zM753 78h1v1h-1zM755 78h1v1h-1zM759 78h8v1h-8zM676 79h1v1h-1zM682 79h1v1h-1zM689 79h1v1h-1zM695 79h1v1h-1zM701 79h1v1h-1zM706 79h1v1h-1zM709 79h1v1h-1zM717 79h1v1h-1zM721 79h1v1h-1zM725 79h1v1h-1zM728 79h1v1h-1zM733 79h1v1h-1zM737 79h1v1h-1zM742 79h1v1h-1zM747 79h1v1h-1zM752 79h1v1h-1zM755 79h1v1h-1zM758 79h1v1h-1zM760 79h1v1h-1zM766 79h1v1h-1zM677 80h1v1h-1zM682 80h1v1h-1zM689 80h1v1h-1zM695 80h1v1h-1zM701 80h1v1h-1zM706 80h1v1h-1zM709 80h1v1h-1zM717 80h1v1h-1zM720 80h6v1h-6zM727 80h1v1h-1zM733 80h1v1h-1zM737 80h2v1h-2zM741 80h1v1h-1zM746 80h1v1h-1zM748 80h1v1h-1zM755 80h1v1h-1zM758 80h1v1h-1zM760 80h1v1h-1zM766 80h1v1h-1zM677 81h1v1h-1zM682 81h1v1h-1zM689 81h1v1h-1zM695 81h1v1h-1zM701 81h1v1h-1zM705 81h1v1h-1zM709 81h1v1h-1zM717 81h1v1h-1zM721 81h1v1h-1zM725 81h1v1h-1zM727 81h1v1h-1zM733 81h1v1h-1zM739 81h2v1h-2zM746 81h1v1h-1zM748 81h1v1h-1zM755 81h1v1h-1zM757 81h1v1h-1zM760 81h1v1h-1zM766 81h1v1h-1zM680 82h1v1h-1zM682 82h1v1h-1zM689 82h13v1h-13zM704 82h1v1h-1zM709 82h9v1h-9zM726 82h1v1h-1zM730 82h1v1h-1zM732 82h1v1h-1zM738 82h2v1h-2zM741 82h1v1h-1zM745 82h1v1h-1zM749 82h1v1h-1zM753 82h1v1h-1zM755 82h1v1h-1zM757 82h1v1h-1zM760 82h1v1h-1zM766 82h1v1h-1zM681 83h1v1h-1zM701 83h1v1h-1zM709 83h1v1h-1zM717 83h1v1h-1zM725 83h1v1h-1zM731 83h1v1h-1zM736 83h2v1h-2zM742 83h1v1h-1zM744 83h1v1h-1zM750 83h1v1h-1zM754 83h1v1h-1zM756 83h1v1h-1zM760 83h7v1h-7z"/>
<rect x="644.5" y="116.5" width="152" height="80" rx="2" ry="2" fill="none" stroke="#b0a0d8" stroke-width="1"/>
<path d="M657 124h1v1h-1zM655 125h3v1h-3zM652 126h6v1h-6zM650 127h7v1h-7zM649 128h4v1h-4zM649 129h4v1h-4zM650 130h7v1h-7zM652 131h6v1h-6zM655 132h3v1h-3zM657 133h1v1h-1z" fill="#ffffff"/>
<path fill="#ffffff" d="M695 148h1v1h-1zM706 148h1v1h-1zM713 148h1v1h-1zM722 148h1v1h-1zM730 148h1v1h-1zM740 148h1v1h-1zM746 148h1v1h-1zM755 148h1v1h-1zM759 148h8v1h-8zM674 149h10v1h-10zM695 149h1v1h-1zM706 149h1v1h-1zM713 149h1v1h-1zM717 149h1v1h-1zM722 149h1v1h-1zM730 149h1v1h-1zM737 149h1v1h-1zM740 149h1v1h-1zM743 149h1v1h-1zM746 149h1v1h-1zM755 149h1v1h-1zM759 149h1v1h-1zM766 149h1v1h-1zM674 150h1v1h-1zM683 150h1v1h-1zM690 150h1v1h-1zM695 150h1v1h-1zM700 150h1v1h-1zM706 150h1v1h-1zM710 150h6v1h-6zM717 150h1v1h-1zM722 150h1v1h-1zM730 150h1v1h-1zM738 150h1v1h-1zM740 150h1v1h-1zM742 150h1v1h-1zM746 150h1v1h-1zM755 150h1v1h-1zM759 150h1v1h-1zM766 150h1v1h-1zM674 151h1v1h-1zM683 151h1v1h-1zM690 151h1v1h-1zM695 151h1v1h-1zM700 151h1v1h-1zM706 151h1v1h-1zM713 151h1v1h-1zM716 151h1v1h-1zM720 151h6v1h-6zM727 151h7v1h-7zM740 151h1v1h-1zM746 151h5v1h-5zM752 151h8v1h-8zM766 151h1v1h-1zM674 152h10v1h-10zM690 152h1v1h-1zM695 152h1v1h-1zM700 152h1v1h-1zM704 152h5v1h-5zM713 152h1v1h-1zM715 152h1v1h-1zM721 152h1v1h-1zM730 152h1v1h-1zM736 152h8v1h-8zM745 152h1v1h-1zM749 152h1v1h-1zM755 152h1v1h-1zM759 152h8v1h-8zM674 153h1v1h-1zM685 153h1v1h-1zM690 153h1v1h-1zM695 153h1v1h-1zM700 153h1v1h-1zM706 153h1v1h-1zM709 153h10v1h-10zM721 153h1v1h-1zM723 153h1v1h-1zM729 153h1v1h-1zM738 153h1v1h-1zM740 153h1v1h-1zM742 153h1v1h-1zM745 153h1v1h-1zM749 153h1v1h-1zM755 153h1v1h-1zM758 153h2v1h-2zM763 153h1v1h-1zM674 154h1v1h-1zM685 154h1v1h-1zM690 154h11v1h-11zM706 154h1v1h-1zM713 154h1v1h-1zM720 154h1v1h-1zM723 154h1v1h-1zM726 154h9v1h-9zM737 154h1v1h-1zM740 154h1v1h-1zM743 154h1v1h-1zM745 154h1v1h-1zM749 154h1v1h-1zM755 154h1v1h-1zM757 154h1v1h-1zM759 154h1v1h-1zM763 154h1v1h-1zM675 155h11v1h-11zM695 155h1v1h-1zM700 155h1v1h-1zM706 155h1v1h-1zM712 155h1v1h-1zM720 155h6v1h-6zM729 155h1v1h-1zM736 155h1v1h-1zM740 155h1v1h-1zM744 155h1v1h-1zM746 155h1v1h-1zM749 155h1v1h-1zM755 155h2v1h-2zM759 155h9v1h-9zM682 156h1v1h-1zM695 156h1v1h-1zM706 156h1v1h-1zM711 156h6v1h-6zM723 156h1v1h-1zM728 156h1v1h-1zM739 156h1v1h-1zM746 156h1v1h-1zM748 156h1v1h-1zM755 156h1v1h-1zM759 156h1v1h-1zM763 156h1v1h-1zM682 157h1v1h-1zM695 157h1v1h-1zM706 157h1v1h-1zM708 157h1v1h-1zM710 157h2v1h-2zM716 157h1v1h-1zM723 157h1v1h-1zM727 157h7v1h-7zM736 157h7v1h-7zM746 157h1v1h-1zM748 157h1v1h-1zM754 157h2v1h-2zM759 157h1v1h-1zM763 157h1v1h-1zM672 158h15v1h-15zM689 158h1v1h-1zM695 158h1v1h-1zM701 158h1v1h-1zM706 158h2v1h-2zM709 158h1v1h-1zM711 158h1v1h-1zM716 158h1v1h-1zM723 158h3v1h-3zM733 158h1v1h-1zM738 158h1v1h-1zM742 158h1v1h-1zM747 158h1v1h-1zM753 158h1v1h-1zM755 158h1v1h-1zM759 158h8v1h-8zM676 159h1v1h-1zM682 159h1v1h-1zM689 159h1v1h-1zM695 159h1v1h-1zM701 159h1v1h-1zM706 159h1v1h-1zM711 159h6v1h-6zM720 159h4v1h-4zM728 159h1v1h-1zM732 159h1v1h-1zM737 159h1v1h-1zM742 159h1v1h-1zM747 159h1v1h-1zM752 159h1v1h-1zM755 159h1v1h-1zM758 159h1v1h-1zM760 159h1v1h-1zM766 159h1v1h-1zM677 160h1v1h-1zM682 160h1v1h-1zM689 160h1v1h-1zM695 160h1v1h-1zM701 160h1v1h-1zM704 160h2v1h-2zM711 160h1v1h-1zM716 160h1v1h-1zM721 160h1v1h-1zM723 160h1v1h-1zM729 160h1v1h-1zM731 160h1v1h-1zM737 160h2v1h-2zM741 160h1v1h-1zM746 160h1v1h-1zM748 160h1v1h-1zM755 160h1v1h-1zM758 160h1v1h-1zM760 160h1v1h-1zM766 160h1v1h-1zM677 161h1v1h-1zM682 161h1v1h-1zM689 161h1v1h-1zM695 161h1v1h-1zM701 161h1v1h-1zM711 161h1v1h-1zM716 161h1v1h-1zM723 161h1v1h-1zM730 161h1v1h-1zM739 161h2v1h-2zM746 161h1v1h-1zM748 161h1v1h-1zM755 161h1v1h-1zM757 161h1v1h-1zM760 161h1v1h-1zM766 161h1v1h-1zM680 162h1v1h-1zM682 162h1v1h-1zM689 162h13v1h-13zM711 162h6v1h-6zM723 162h1v1h-1zM731 162h1v1h-1zM738 162h2v1h-2zM741 162h1v1h-1zM745 162h1v1h-1zM749 162h1v1h-1zM753 162h1v1h-1zM755 162h1v1h-1zM757 162h1v1h-1zM760 162h1v1h-1zM766 162h1v1h-1zM681 163h1v1h-1zM701 163h1v1h-1zM711 163h1v1h-1zM716 163h1v1h-1zM723 163h1v1h-1zM731 163h1v1h-1zM736 163h2v1h-2zM742 163h1v1h-1zM744 163h1v1h-1zM750 163h1v1h-1zM754 163h1v1h-1zM756 163h1v1h-1zM760 163h7v1h-7z"/>
<rect x="644.5" y="196.5" width="152" height="80" rx="2" ry="2" fill="none" stroke="#b0a0d8" stroke-width="1"/>
<path d="M657 204h1v1h-1zM655 205h3v1h-3zM652 206h6v1h-6zM650 207h7v1h-7zM649 208h4v1h-4zM649 209h4v1h-4zM650 210h7v1h-7zM652 211h6v1h-6zM655 212h3v1h-3zM657 213h1v1h-1z" fill="#ffffff"/>
<path fill="#ffffff" d="M695 228h1v1h-1zM714 228h4v1h-4zM727 228h1v1h-1zM740 228h1v1h-1zM746 228h1v1h-1zM755 228h1v1h-1zM759 228h8v1h-8zM674 229h10v1h-10zM695 229h1v1h-1zM709 229h5v1h-5zM727 229h1v1h-1zM737 229h1v1h-1zM740 229h1v1h-1zM743 229h1v1h-1zM746 229h1v1h-1zM755 229h1v1h-1zM759 229h1v1h-1zM766 229h1v1h-1zM674 230h1v1h-1zM683 230h1v1h-1zM690 230h1v1h-1zM695 230h1v1h-1zM700 230h1v1h-1zM704 230h4v1h-4zM713 230h1v1h-1zM717 230h1v1h-1zM721 230h13v1h-13zM738 230h1v1h-1zM740 230h1v1h-1zM742 230h1v1h-1zM746 230h1v1h-1zM755 230h1v1h-1zM759 230h1v1h-1zM766 230h1v1h-1zM674 231h1v1h-1zM683 231h1v1h-1zM690 231h1v1h-1zM695 231h1v1h-1zM700 231h1v1h-1zM704 231h1v1h-1zM707 231h1v1h-1zM710 231h1v1h-1zM714 231h1v1h-1zM717 231h1v1h-1zM727 231h1v1h-1zM740 231h1v1h-1zM746 231h5v1h-5zM752 231h8v1h-8zM766 231h1v1h-1zM674 232h10v1h-10zM690 232h1v1h-1zM695 232h1v1h-1zM700 232h1v1h-1zM704 232h1v1h-1zM707 232h1v1h-1zM711 232h1v1h-1zM716 232h1v1h-1zM726 232h1v1h-1zM728 232h1v1h-1zM736 232h8v1h-8zM745 232h1v1h-1zM749 232h1v1h-1zM755 232h1v1h-1zM759 232h8v1h-8zM674 233h1v1h-1zM685 233h1v1h-1zM690 233h1v1h-1zM695 233h1v1h-1zM700 233h1v1h-1zM704 233h4v1h-4zM709 233h10v1h-10zM725 233h1v1h-1zM729 233h1v1h-1zM738 233h1v1h-1zM740 233h1v1h-1zM742 233h1v1h-1zM745 233h1v1h-1zM749 233h1v1h-1zM755 233h1v1h-1zM758 233h2v1h-2zM763 233h1v1h-1zM674 234h1v1h-1zM685 234h1v1h-1zM690 234h11v1h-11zM704 234h1v1h-1zM707 234h1v1h-1zM709 234h1v1h-1zM718 234h1v1h-1zM724 234h1v1h-1zM726 234h1v1h-1zM730 234h1v1h-1zM737 234h1v1h-1zM740 234h1v1h-1zM743 234h1v1h-1zM745 234h1v1h-1zM749 234h1v1h-1zM755 234h1v1h-1zM757 234h1v1h-1zM759 234h1v1h-1zM763 234h1v1h-1zM675 235h11v1h-11zM695 235h1v1h-1zM700 235h1v1h-1zM704 235h1v1h-1zM707 235h2v1h-2zM710 235h1v1h-1zM716 235h1v1h-1zM722 235h2v1h-2zM727 235h1v1h-1zM731 235h2v1h-2zM736 235h1v1h-1zM740 235h1v1h-1zM744 235h1v1h-1zM746 235h1v1h-1zM749 235h1v1h-1zM755 235h2v1h-2zM759 235h9v1h-9zM682 236h1v1h-1zM695 236h1v1h-1zM704 236h4v1h-4zM710 236h1v1h-1zM716 236h1v1h-1zM720 236h2v1h-2zM733 236h2v1h-2zM739 236h1v1h-1zM746 236h1v1h-1zM748 236h1v1h-1zM755 236h1v1h-1zM759 236h1v1h-1zM763 236h1v1h-1zM682 237h1v1h-1zM695 237h1v1h-1zM704 237h1v1h-1zM707 237h1v1h-1zM710 237h3v1h-3zM714 237h5v1h-5zM727 237h1v1h-1zM736 237h7v1h-7zM746 237h1v1h-1zM748 237h1v1h-1zM754 237h2v1h-2zM759 237h1v1h-1zM763 237h1v1h-1zM672 238h15v1h-15zM689 238h1v1h-1zM695 238h1v1h-1zM701 238h1v1h-1zM704 238h1v1h-1zM707 238h1v1h-1zM709 238h1v1h-1zM712 238h1v1h-1zM716 238h1v1h-1zM724 238h1v1h-1zM728 238h1v1h-1zM732 238h1v1h-1zM738 238h1v1h-1zM742 238h1v1h-1zM747 238h1v1h-1zM753 238h1v1h-1zM755 238h1v1h-1zM759 238h8v1h-8zM676 239h1v1h-1zM682 239h1v1h-1zM689 239h1v1h-1zM695 239h1v1h-1zM701 239h1v1h-1zM704 239h1v1h-1zM707 239h2v1h-2zM710 239h1v1h-1zM712 239h1v1h-1zM714 239h1v1h-1zM716 239h1v1h-1zM721 239h1v1h-1zM724 239h1v1h-1zM728 239h1v1h-1zM733 239h1v1h-1zM737 239h1v1h-1zM742 239h1v1h-1zM747 239h1v1h-1zM752 239h1v1h-1zM755 239h1v1h-1zM758 239h1v1h-1zM760 239h1v1h-1zM766 239h1v1h-1zM677 240h1v1h-1zM682 240h1v1h-1zM689 240h1v1h-1zM695 240h1v1h-1zM701 240h1v1h-1zM704 240h4v1h-4zM711 240h1v1h-1zM714 240h5v1h-5zM721 240h1v1h-1zM724 240h1v1h-1zM731 240h1v1h-1zM734 240h1v1h-1zM737 240h2v1h-2zM741 240h1v1h-1zM746 240h1v1h-1zM748 240h1v1h-1zM755 240h1v1h-1zM758 240h1v1h-1zM760 240h1v1h-1zM766 240h1v1h-1zM677 241h1v1h-1zM682 241h1v1h-1zM689 241h1v1h-1zM695 241h1v1h-1zM701 241h1v1h-1zM704 241h1v1h-1zM707 241h1v1h-1zM710 241h1v1h-1zM716 241h1v1h-1zM721 241h1v1h-1zM724 241h1v1h-1zM731 241h1v1h-1zM734 241h1v1h-1zM739 241h2v1h-2zM746 241h1v1h-1zM748 241h1v1h-1zM755 241h1v1h-1zM757 241h1v1h-1zM760 241h1v1h-1zM766 241h1v1h-1zM680 242h1v1h-1zM682 242h1v1h-1zM689 242h13v1h-13zM709 242h1v1h-1zM716 242h1v1h-1zM720 242h1v1h-1zM725 242h7v1h-7zM738 242h2v1h-2zM741 242h1v1h-1zM745 242h1v1h-1zM749 242h1v1h-1zM753 242h1v1h-1zM755 242h1v1h-1zM757 242h1v1h-1zM760 242h1v1h-1zM766 242h1v1h-1zM681 243h1v1h-1zM701 243h1v1h-1zM708 243h1v1h-1zM716 243h1v1h-1zM736 243h2v1h-2zM742 243h1v1h-1zM744 243h1v1h-1zM750 243h1v1h-1zM754 243h1v1h-1zM756 243h1v1h-1zM760 243h7v1h-7z"/>
<rect x="644.5" y="276.5" width="152" height="80" rx="2" ry="2" fill="none" stroke="#b0a0d8" stroke-width="1"/>
<path d="M657 284h1v1h-1zM655 285h3v1h-3zM652 286h6v1h-6zM650 287h7v1h-7zM649 288h4v1h-4zM649 289h4v1h-4zM650 290h7v1h-7zM652 291h6v1h-6zM655 292h3v1h-3zM657 293h1v1h-1z" fill="#ffffff"/>
<path fill="#ffffff" d="M679 308h1v1h-1zM692 308h1v1h-1zM698 308h1v1h-1zM707 308h1v1h-1zM711 308h8v1h-8zM756 308h1v1h-1zM762 308h1v1h-1zM771 308h1v1h-1zM775 308h8v1h-8zM658 309h10v1h-10zM679 309h1v1h-1zM689 309h1v1h-1zM692 309h1v1h-1zM695 309h1v1h-1zM698 309h1v1h-1zM707 309h1v1h-1zM711 309h1v1h-1zM718 309h1v1h-1zM722 309h1v1h-1zM738 309h10v1h-10zM753 309h1v1h-1zM756 309h1v1h-1zM759 309h1v1h-1zM762 309h1v1h-1zM771 309h1v1h-1zM775 309h1v1h-1zM782 309h1v1h-1zM658 310h1v1h-1zM667 310h1v1h-1zM674 310h1v1h-1zM679 310h1v1h-1zM684 310h1v1h-1zM690 310h1v1h-1zM692 310h1v1h-1zM694 310h1v1h-1zM698 310h1v1h-1zM707 310h1v1h-1zM711 310h1v1h-1zM718 310h1v1h-1zM723 310h1v1h-1zM727 310h6v1h-6zM747 310h1v1h-1zM754 310h1v1h-1zM756 310h1v1h-1zM758 310h1v1h-1zM762 310h1v1h-1zM771 310h1v1h-1zM775 310h1v1h-1zM782 310h1v1h-1zM658 311h1v1h-1zM667 311h1v1h-1zM674 311h1v1h-1zM679 311h1v1h-1zM684 311h1v1h-1zM692 311h1v1h-1zM698 311h5v1h-5zM704 311h8v1h-8zM718 311h1v1h-1zM723 311h1v1h-1zM732 311h1v1h-1zM747 311h1v1h-1zM756 311h1v1h-1zM762 311h5v1h-5zM768 311h8v1h-8zM782 311h1v1h-1zM658 312h10v1h-10zM674 312h1v1h-1zM679 312h1v1h-1zM684 312h1v1h-1zM688 312h8v1h-8zM697 312h1v1h-1zM701 312h1v1h-1zM707 312h1v1h-1zM711 312h8v1h-8zM732 312h1v1h-1zM739 312h9v1h-9zM752 312h8v1h-8zM761 312h1v1h-1zM765 312h1v1h-1zM771 312h1v1h-1zM775 312h8v1h-8zM658 313h1v1h-1zM669 313h1v1h-1zM674 313h1v1h-1zM679 313h1v1h-1zM684 313h1v1h-1zM690 313h1v1h-1zM692 313h1v1h-1zM694 313h1v1h-1zM697 313h1v1h-1zM701 313h1v1h-1zM707 313h1v1h-1zM710 313h2v1h-2zM715 313h1v1h-1zM732 313h1v1h-1zM747 313h1v1h-1zM754 313h1v1h-1zM756 313h1v1h-1zM758 313h1v1h-1zM761 313h1v1h-1zM765 313h1v1h-1zM771 313h1v1h-1zM774 313h2v1h-2zM779 313h1v1h-1zM658 314h1v1h-1zM669 314h1v1h-1zM674 314h11v1h-11zM689 314h1v1h-1zM692 314h1v1h-1zM695 314h1v1h-1zM697 314h1v1h-1zM701 314h1v1h-1zM707 314h1v1h-1zM709 314h1v1h-1zM711 314h1v1h-1zM715 314h1v1h-1zM720 314h4v1h-4zM732 314h1v1h-1zM747 314h1v1h-1zM753 314h1v1h-1zM756 314h1v1h-1zM759 314h1v1h-1zM761 314h1v1h-1zM765 314h1v1h-1zM771 314h1v1h-1zM773 314h1v1h-1zM775 314h1v1h-1zM779 314h1v1h-1zM659 315h11v1h-11zM679 315h1v1h-1zM684 315h1v1h-1zM688 315h1v1h-1zM692 315h1v1h-1zM696 315h1v1h-1zM698 315h1v1h-1zM701 315h1v1h-1zM707 315h2v1h-2zM711 315h9v1h-9zM723 315h1v1h-1zM727 315h6v1h-6zM736 315h15v1h-15zM752 315h1v1h-1zM756 315h1v1h-1zM760 315h1v1h-1zM762 315h1v1h-1zM765 315h1v1h-1zM771 315h2v1h-2zM775 315h9v1h-9zM666 316h1v1h-1zM679 316h1v1h-1zM691 316h1v1h-1zM698 316h1v1h-1zM700 316h1v1h-1zM707 316h1v1h-1zM711 316h1v1h-1zM715 316h1v1h-1zM723 316h1v1h-1zM727 316h1v1h-1zM732 316h1v1h-1zM743 316h1v1h-1zM755 316h1v1h-1zM762 316h1v1h-1zM764 316h1v1h-1zM771 316h1v1h-1zM775 316h1v1h-1zM779 316h1v1h-1zM666 317h1v1h-1zM679 317h1v1h-1zM688 317h7v1h-7zM698 317h1v1h-1zM700 317h1v1h-1zM706 317h2v1h-2zM711 317h1v1h-1zM715 317h1v1h-1zM723 317h1v1h-1zM727 317h1v1h-1zM738 317h1v1h-1zM743 317h1v1h-1zM748 317h1v1h-1zM752 317h7v1h-7zM762 317h1v1h-1zM764 317h1v1h-1zM770 317h2v1h-2zM775 317h1v1h-1zM779 317h1v1h-1zM656 318h15v1h-15zM673 318h1v1h-1zM679 318h1v1h-1zM685 318h1v1h-1zM690 318h1v1h-1zM694 318h1v1h-1zM699 318h1v1h-1zM705 318h1v1h-1zM707 318h1v1h-1zM711 318h8v1h-8zM723 318h1v1h-1zM727 318h1v1h-1zM739 318h1v1h-1zM743 318h2v1h-2zM747 318h1v1h-1zM754 318h1v1h-1zM758 318h1v1h-1zM763 318h1v1h-1zM769 318h1v1h-1zM771 318h1v1h-1zM775 318h8v1h-8zM660 319h1v1h-1zM666 319h1v1h-1zM673 319h1v1h-1zM679 319h1v1h-1zM685 319h1v1h-1zM689 319h1v1h-1zM694 319h1v1h-1zM699 319h1v1h-1zM704 319h1v1h-1zM707 319h1v1h-1zM710 319h1v1h-1zM712 319h1v1h-1zM718 319h1v1h-1zM723 319h1v1h-1zM727 319h1v1h-1zM741 319h1v1h-1zM743 319h1v1h-1zM745 319h2v1h-2zM753 319h1v1h-1zM758 319h1v1h-1zM763 319h1v1h-1zM768 319h1v1h-1zM771 319h1v1h-1zM774 319h1v1h-1zM776 319h1v1h-1zM782 319h1v1h-1zM661 320h1v1h-1zM666 320h1v1h-1zM673 320h1v1h-1zM679 320h1v1h-1zM685 320h1v1h-1zM689 320h2v1h-2zM693 320h1v1h-1zM698 320h1v1h-1zM700 320h1v1h-1zM707 320h1v1h-1zM710 320h1v1h-1zM712 320h1v1h-1zM718 320h1v1h-1zM723 320h1v1h-1zM725 320h1v1h-1zM727 320h1v1h-1zM734 320h1v1h-1zM740 320h1v1h-1zM743 320h1v1h-1zM746 320h1v1h-1zM753 320h2v1h-2zM757 320h1v1h-1zM762 320h1v1h-1zM764 320h1v1h-1zM771 320h1v1h-1zM774 320h1v1h-1zM776 320h1v1h-1zM782 320h1v1h-1zM661 321h1v1h-1zM666 321h1v1h-1zM673 321h1v1h-1zM679 321h1v1h-1zM685 321h1v1h-1zM691 321h2v1h-2zM698 321h1v1h-1zM700 321h1v1h-1zM707 321h1v1h-1zM709 321h1v1h-1zM712 321h1v1h-1zM718 321h1v1h-1zM723 321h2v1h-2zM727 321h1v1h-1zM734 321h1v1h-1zM738 321h2v1h-2zM743 321h1v1h-1zM747 321h2v1h-2zM755 321h2v1h-2zM762 321h1v1h-1zM764 321h1v1h-1zM771 321h1v1h-1zM773 321h1v1h-1zM776 321h1v1h-1zM782 321h1v1h-1zM664 322h1v1h-1zM666 322h1v1h-1zM673 322h13v1h-13zM690 322h2v1h-2zM693 322h1v1h-1zM697 322h1v1h-1zM701 322h1v1h-1zM705 322h1v1h-1zM707 322h1v1h-1zM709 322h1v1h-1zM712 322h1v1h-1zM718 322h1v1h-1zM723 322h1v1h-1zM728 322h7v1h-7zM736 322h2v1h-2zM741 322h1v1h-1zM743 322h1v1h-1zM749 322h2v1h-2zM754 322h2v1h-2zM757 322h1v1h-1zM761 322h1v1h-1zM765 322h1v1h-1zM769 322h1v1h-1zM771 322h1v1h-1zM773 322h1v1h-1zM776 322h1v1h-1zM782 322h1v1h-1zM665 323h1v1h-1zM685 323h1v1h-1zM688 323h2v1h-2zM694 323h1v1h-1zM696 323h1v1h-1zM702 323h1v1h-1zM706 323h1v1h-1zM708 323h1v1h-1zM712 323h7v1h-7zM742 323h1v1h-1zM752 323h2v1h-2zM758 323h1v1h-1zM760 323h1v1h-1zM766 323h1v1h-1zM770 323h1v1h-1zM772 323h1v1h-1zM776 323h7v1h-7z"/>
<rect x="644.5" y="356.5" width="152" height="80" rx="2" ry="2" fill="none" stroke="#b0a0d8" stroke-width="1"/>
<path d="M657 364h1v1h-1zM655 365h3v1h-3zM652 366h6v1h-6zM650 367h7v1h-7zM649 368h4v1h-4zM649 369h4v1h-4zM650 370h7v1h-7zM652 371h6v1h-6zM655 372h3v1h-3zM657 373h1v1h-1z" fill="#ffffff"/>
<path fill="#ffffff" d="M695 388h1v1h-1zM730 388h1v1h-1zM740 388h1v1h-1zM746 388h1v1h-1zM755 388h1v1h-1zM759 388h8v1h-8zM674 389h10v1h-10zM695 389h1v1h-1zM706 389h10v1h-10zM722 389h1v1h-1zM730 389h1v1h-1zM737 389h1v1h-1zM740 389h1v1h-1zM743 389h1v1h-1zM746 389h1v1h-1zM755 389h1v1h-1zM759 389h1v1h-1zM766 389h1v1h-1zM674 390h1v1h-1zM683 390h1v1h-1zM690 390h1v1h-1zM695 390h1v1h-1zM700 390h1v1h-1zM715 390h1v1h-1zM723 390h1v1h-1zM730 390h1v1h-1zM738 390h1v1h-1zM740 390h1v1h-1zM742 390h1v1h-1zM746 390h1v1h-1zM755 390h1v1h-1zM759 390h1v1h-1zM766 390h1v1h-1zM674 391h1v1h-1zM683 391h1v1h-1zM690 391h1v1h-1zM695 391h1v1h-1zM700 391h1v1h-1zM715 391h1v1h-1zM723 391h1v1h-1zM726 391h9v1h-9zM740 391h1v1h-1zM746 391h5v1h-5zM752 391h8v1h-8zM766 391h1v1h-1zM674 392h10v1h-10zM690 392h1v1h-1zM695 392h1v1h-1zM700 392h1v1h-1zM707 392h9v1h-9zM720 392h1v1h-1zM726 392h1v1h-1zM730 392h1v1h-1zM734 392h1v1h-1zM736 392h8v1h-8zM745 392h1v1h-1zM749 392h1v1h-1zM755 392h1v1h-1zM759 392h8v1h-8zM674 393h1v1h-1zM685 393h1v1h-1zM690 393h1v1h-1zM695 393h1v1h-1zM700 393h1v1h-1zM715 393h1v1h-1zM721 393h1v1h-1zM726 393h1v1h-1zM730 393h1v1h-1zM733 393h1v1h-1zM738 393h1v1h-1zM740 393h1v1h-1zM742 393h1v1h-1zM745 393h1v1h-1zM749 393h1v1h-1zM755 393h1v1h-1zM758 393h2v1h-2zM763 393h1v1h-1zM674 394h1v1h-1zM685 394h1v1h-1zM690 394h11v1h-11zM715 394h1v1h-1zM721 394h1v1h-1zM724 394h1v1h-1zM726 394h1v1h-1zM730 394h1v1h-1zM737 394h1v1h-1zM740 394h1v1h-1zM743 394h1v1h-1zM745 394h1v1h-1zM749 394h1v1h-1zM755 394h1v1h-1zM757 394h1v1h-1zM759 394h1v1h-1zM763 394h1v1h-1zM675 395h11v1h-11zM695 395h1v1h-1zM700 395h1v1h-1zM704 395h15v1h-15zM724 395h1v1h-1zM726 395h8v1h-8zM736 395h1v1h-1zM740 395h1v1h-1zM744 395h1v1h-1zM746 395h1v1h-1zM749 395h1v1h-1zM755 395h2v1h-2zM759 395h9v1h-9zM682 396h1v1h-1zM695 396h1v1h-1zM711 396h1v1h-1zM723 396h1v1h-1zM726 396h1v1h-1zM728 396h1v1h-1zM733 396h1v1h-1zM739 396h1v1h-1zM746 396h1v1h-1zM748 396h1v1h-1zM755 396h1v1h-1zM759 396h1v1h-1zM763 396h1v1h-1zM682 397h1v1h-1zM695 397h1v1h-1zM706 397h1v1h-1zM711 397h1v1h-1zM716 397h1v1h-1zM723 397h1v1h-1zM726 397h1v1h-1zM728 397h1v1h-1zM732 397h1v1h-1zM736 397h7v1h-7zM746 397h1v1h-1zM748 397h1v1h-1zM754 397h2v1h-2zM759 397h1v1h-1zM763 397h1v1h-1zM672 398h15v1h-15zM689 398h1v1h-1zM695 398h1v1h-1zM701 398h1v1h-1zM707 398h1v1h-1zM711 398h2v1h-2zM715 398h1v1h-1zM720 398h3v1h-3zM726 398h1v1h-1zM729 398h1v1h-1zM732 398h1v1h-1zM738 398h1v1h-1zM742 398h1v1h-1zM747 398h1v1h-1zM753 398h1v1h-1zM755 398h1v1h-1zM759 398h8v1h-8zM676 399h1v1h-1zM682 399h1v1h-1zM689 399h1v1h-1zM695 399h1v1h-1zM701 399h1v1h-1zM709 399h1v1h-1zM711 399h1v1h-1zM713 399h2v1h-2zM722 399h1v1h-1zM726 399h1v1h-1zM729 399h1v1h-1zM731 399h1v1h-1zM737 399h1v1h-1zM742 399h1v1h-1zM747 399h1v1h-1zM752 399h1v1h-1zM755 399h1v1h-1zM758 399h1v1h-1zM760 399h1v1h-1zM766 399h1v1h-1zM677 400h1v1h-1zM682 400h1v1h-1zM689 400h1v1h-1zM695 400h1v1h-1zM701 400h1v1h-1zM708 400h1v1h-1zM711 400h1v1h-1zM714 400h1v1h-1zM722 400h1v1h-1zM726 400h1v1h-1zM730 400h1v1h-1zM737 400h2v1h-2zM741 400h1v1h-1zM746 400h1v1h-1zM748 400h1v1h-1zM755 400h1v1h-1zM758 400h1v1h-1zM760 400h1v1h-1zM766 400h1v1h-1zM677 401h1v1h-1zM682 401h1v1h-1zM689 401h1v1h-1zM695 401h1v1h-1zM701 401h1v1h-1zM706 401h2v1h-2zM711 401h1v1h-1zM715 401h2v1h-2zM722 401h1v1h-1zM725 401h1v1h-1zM729 401h1v1h-1zM731 401h1v1h-1zM739 401h2v1h-2zM746 401h1v1h-1zM748 401h1v1h-1zM755 401h1v1h-1zM757 401h1v1h-1zM760 401h1v1h-1zM766 401h1v1h-1zM680 402h1v1h-1zM682 402h1v1h-1zM689 402h13v1h-13zM704 402h2v1h-2zM709 402h1v1h-1zM711 402h1v1h-1zM717 402h2v1h-2zM722 402h1v1h-1zM725 402h1v1h-1zM728 402h1v1h-1zM732 402h1v1h-1zM738 402h2v1h-2zM741 402h1v1h-1zM745 402h1v1h-1zM749 402h1v1h-1zM753 402h1v1h-1zM755 402h1v1h-1zM757 402h1v1h-1zM760 402h1v1h-1zM766 402h1v1h-1zM681 403h1v1h-1zM701 403h1v1h-1zM710 403h1v1h-1zM724 403h1v1h-1zM727 403h1v1h-1zM733 403h2v1h-2zM736 403h2v1h-2zM742 403h1v1h-1zM744 403h1v1h-1zM750 403h1v1h-1zM754 403h1v1h-1zM756 403h1v1h-1zM760 403h7v1h-7z"/>
<rect x="644.5" y="436.5" width="152" height="80" rx="2" ry="2" fill="none" stroke="#b0a0d8" stroke-width="1"/>
<rect x="644.5" y="516.5" width="152" height="80" rx="2" ry="2" fill="none" stroke="#b0a0d8" stroke-width="1"/>
<path fill="#ffffff" d="M709 548h1v1h-1zM713 548h1v1h-1zM724 548h1v1h-1zM741 548h1v1h-1zM690 549h11v1h-11zM705 549h13v1h-13zM724 549h1v1h-1zM726 549h7v1h-7zM741 549h1v1h-1zM690 550h1v1h-1zM700 550h1v1h-1zM709 550h1v1h-1zM713 550h1v1h-1zM724 550h1v1h-1zM726 550h1v1h-1zM732 550h1v1h-1zM736 550h15v1h-15zM690 551h1v1h-1zM700 551h1v1h-1zM707 551h9v1h-9zM723 551h1v1h-1zM726 551h1v1h-1zM732 551h1v1h-1zM740 551h1v1h-1zM690 552h11v1h-11zM707 552h1v1h-1zM715 552h1v1h-1zM723 552h1v1h-1zM726 552h1v1h-1zM732 552h1v1h-1zM740 552h1v1h-1zM690 553h1v1h-1zM693 553h1v1h-1zM699 553h1v1h-1zM707 553h9v1h-9zM722 553h2v1h-2zM726 553h7v1h-7zM739 553h1v1h-1zM742 553h7v1h-7zM690 554h1v1h-1zM694 554h1v1h-1zM698 554h1v1h-1zM707 554h1v1h-1zM715 554h1v1h-1zM722 554h2v1h-2zM729 554h1v1h-1zM739 554h1v1h-1zM747 554h1v1h-1zM690 555h1v1h-1zM692 555h9v1h-9zM707 555h9v1h-9zM721 555h1v1h-1zM723 555h1v1h-1zM729 555h1v1h-1zM738 555h2v1h-2zM746 555h1v1h-1zM690 556h1v1h-1zM694 556h1v1h-1zM698 556h1v1h-1zM709 556h1v1h-1zM720 556h1v1h-1zM723 556h1v1h-1zM725 556h9v1h-9zM737 556h1v1h-1zM739 556h1v1h-1zM745 556h1v1h-1zM690 557h1v1h-1zM694 557h1v1h-1zM698 557h1v1h-1zM704 557h15v1h-15zM723 557h1v1h-1zM728 557h3v1h-3zM736 557h1v1h-1zM739 557h1v1h-1zM741 557h10v1h-10zM690 558h12v1h-12zM707 558h1v1h-1zM711 558h1v1h-1zM715 558h1v1h-1zM723 558h1v1h-1zM727 558h1v1h-1zM729 558h1v1h-1zM731 558h1v1h-1zM739 558h1v1h-1zM745 558h1v1h-1zM690 559h1v1h-1zM694 559h1v1h-1zM698 559h1v1h-1zM706 559h11v1h-11zM723 559h1v1h-1zM726 559h1v1h-1zM729 559h1v1h-1zM732 559h1v1h-1zM739 559h1v1h-1zM745 559h1v1h-1zM689 560h1v1h-1zM694 560h1v1h-1zM698 560h1v1h-1zM704 560h2v1h-2zM707 560h1v1h-1zM711 560h1v1h-1zM715 560h1v1h-1zM717 560h2v1h-2zM723 560h1v1h-1zM725 560h1v1h-1zM729 560h1v1h-1zM733 560h1v1h-1zM739 560h1v1h-1zM745 560h1v1h-1zM689 561h1v1h-1zM693 561h1v1h-1zM698 561h1v1h-1zM707 561h1v1h-1zM711 561h1v1h-1zM713 561h1v1h-1zM715 561h1v1h-1zM723 561h2v1h-2zM729 561h1v1h-1zM734 561h1v1h-1zM739 561h1v1h-1zM745 561h1v1h-1zM688 562h1v1h-1zM693 562h1v1h-1zM698 562h1v1h-1zM707 562h1v1h-1zM711 562h1v1h-1zM714 562h1v1h-1zM723 562h1v1h-1zM729 562h1v1h-1zM739 562h1v1h-1zM743 562h1v1h-1zM745 562h1v1h-1zM692 563h1v1h-1zM698 563h1v1h-1zM711 563h1v1h-1zM723 563h1v1h-1zM729 563h1v1h-1zM739 563h1v1h-1zM744 563h1v1h-1z"/>
<path fill="#00ff00" d="M16 56h1v1h-1zM8 57h1v1h-1zM16 57h1v1h-1zM23 57h8v1h-8zM35 57h1v1h-1zM9 58h1v1h-1zM16 58h1v1h-1zM25 58h1v1h-1zM28 58h1v1h-1zM35 58h1v1h-1zM9 59h1v1h-1zM12 59h9v1h-9zM25 59h1v1h-1zM28 59h1v1h-1zM34 59h1v1h-1zM6 60h1v1h-1zM12 60h1v1h-1zM16 60h1v1h-1zM20 60h1v1h-1zM25 60h1v1h-1zM28 60h1v1h-1zM33 60h1v1h-1zM7 61h1v1h-1zM12 61h1v1h-1zM16 61h1v1h-1zM19 61h1v1h-1zM25 61h1v1h-1zM28 61h1v1h-1zM32 61h1v1h-1zM36 61h1v1h-1zM7 62h1v1h-1zM10 62h1v1h-1zM12 62h1v1h-1zM16 62h1v1h-1zM25 62h1v1h-1zM28 62h1v1h-1zM36 62h1v1h-1zM10 63h1v1h-1zM12 63h8v1h-8zM22 63h10v1h-10zM35 63h1v1h-1zM9 64h1v1h-1zM12 64h1v1h-1zM14 64h1v1h-1zM19 64h1v1h-1zM25 64h1v1h-1zM28 64h1v1h-1zM34 64h1v1h-1zM9 65h1v1h-1zM12 65h1v1h-1zM14 65h1v1h-1zM18 65h1v1h-1zM25 65h1v1h-1zM28 65h1v1h-1zM33 65h1v1h-1zM6 66h3v1h-3zM12 66h1v1h-1zM15 66h1v1h-1zM18 66h1v1h-1zM25 66h1v1h-1zM28 66h1v1h-1zM32 66h1v1h-1zM36 66h1v1h-1zM8 67h1v1h-1zM12 67h1v1h-1zM15 67h1v1h-1zM17 67h1v1h-1zM25 67h1v1h-1zM28 67h1v1h-1zM36 67h1v1h-1zM8 68h1v1h-1zM12 68h1v1h-1zM16 68h1v1h-1zM24 68h1v1h-1zM28 68h1v1h-1zM35 68h1v1h-1zM8 69h1v1h-1zM11 69h1v1h-1zM15 69h1v1h-1zM17 69h1v1h-1zM24 69h1v1h-1zM28 69h1v1h-1zM34 69h1v1h-1zM8 70h1v1h-1zM11 70h1v1h-1zM14 70h1v1h-1zM18 70h1v1h-1zM23 70h1v1h-1zM28 70h1v1h-1zM33 70h1v1h-1zM10 71h1v1h-1zM13 71h1v1h-1zM19 71h2v1h-2zM22 71h1v1h-1zM28 71h1v1h-1zM31 71h2v1h-2z"/>
<rect x="6.5" y="74.5" width="627" height="501" fill="none" stroke="#b0a0d8"/>
</svg><svg width="800" height="600" style="position:absolute;left:0;top:0" shape-rendering="crispEdges">
<rect x="30.5" y="79.5" width="600" height="120" fill="#000000" stroke="#b0a0d8"/>
<path fill="#a8a0d8" d="M35 109h1v1h-1zM40 109h1v1h-1zM45 109h1v1h-1zM50 109h1v1h-1zM55 109h1v1h-1zM60 109h1v1h-1zM65 109h1v1h-1zM70 109h1v1h-1zM75 109h1v1h-1zM80 109h1v1h-1zM85 109h1v1h-1zM90 109h1v1h-1zM95 109h1v1h-1zM100 109h1v1h-1zM105 109h1v1h-1zM110 109h1v1h-1zM115 109h1v1h-1zM120 109h1v1h-1zM125 109h1v1h-1zM130 109h1v1h-1zM135 109h1v1h-1zM140 109h1v1h-1zM145 109h1v1h-1zM150 109h1v1h-1zM155 109h1v1h-1zM160 109h1v1h-1zM165 109h1v1h-1zM170 109h1v1h-1zM175 109h1v1h-1zM180 109h1v1h-1zM185 109h1v1h-1zM190 109h1v1h-1zM195 109h1v1h-1zM200 109h1v1h-1zM205 109h1v1h-1zM210 109h1v1h-1zM215 109h1v1h-1zM220 109h1v1h-1zM225 109h1v1h-1zM230 109h1v1h-1zM235 109h1v1h-1zM240 109h1v1h-1zM245 109h1v1h-1zM250 109h1v1h-1zM255 109h1v1h-1zM260 109h1v1h-1zM265 109h1v1h-1zM270 109h1v1h-1zM275 109h1v1h-1zM280 109h1v1h-1zM285 109h1v1h-1zM290 109h1v1h-1zM295 109h1v1h-1zM300 109h1v1h-1zM305 109h1v1h-1zM310 109h1v1h-1zM315 109h1v1h-1zM320 109h1v1h-1zM325 109h1v1h-1zM330 109h1v1h-1zM335 109h1v1h-1zM340 109h1v1h-1zM345 109h1v1h-1zM350 109h1v1h-1zM355 109h1v1h-1zM360 109h1v1h-1zM365 109h1v1h-1zM370 109h1v1h-1zM375 109h1v1h-1zM380 109h1v1h-1zM385 109h1v1h-1zM390 109h1v1h-1zM395 109h1v1h-1zM400 109h1v1h-1zM405 109h1v1h-1zM410 109h1v1h-1zM415 109h1v1h-1zM420 109h1v1h-1zM425 109h1v1h-1zM430 109h1v1h-1zM435 109h1v1h-1zM440 109h1v1h-1zM445 109h1v1h-1zM450 109h1v1h-1zM455 109h1v1h-1zM460 109h1v1h-1zM465 109h1v1h-1zM470 109h1v1h-1zM475 109h1v1h-1zM480 109h1v1h-1zM485 109h1v1h-1zM490 109h1v1h-1zM495 109h1v1h-1zM500 109h1v1h-1zM505 109h1v1h-1zM510 109h1v1h-1zM515 109h1v1h-1zM520 109h1v1h-1zM525 109h1v1h-1zM530 109h1v1h-1zM535 109h1v1h-1zM540 109h1v1h-1zM545 109h1v1h-1zM550 109h1v1h-1zM555 109h1v1h-1zM560 109h1v1h-1zM565 109h1v1h-1zM570 109h1v1h-1zM575 109h1v1h-1zM580 109h1v1h-1zM585 109h1v1h-1zM590 109h1v1h-1zM595 109h1v1h-1zM600 109h1v1h-1zM605 109h1v1h-1zM610 109h1v1h-1zM615 109h1v1h-1zM620 109h1v1h-1zM625 109h1v1h-1zM35 169h1v1h-1zM40 169h1v1h-1zM45 169h1v1h-1zM50 169h1v1h-1zM55 169h1v1h-1zM60 169h1v1h-1zM65 169h1v1h-1zM70 169h1v1h-1zM75 169h1v1h-1zM80 169h1v1h-1zM85 169h1v1h-1zM90 169h1v1h-1zM95 169h1v1h-1zM100 169h1v1h-1zM105 169h1v1h-1zM110 169h1v1h-1zM115 169h1v1h-1zM120 169h1v1h-1zM125 169h1v1h-1zM130 169h1v1h-1zM135 169h1v1h-1zM140 169h1v1h-1zM145 169h1v1h-1zM150 169h1v1h-1zM155 169h1v1h-1zM160 169h1v1h-1zM165 169h1v1h-1zM170 169h1v1h-1zM175 169h1v1h-1zM180 169h1v1h-1zM185 169h1v1h-1zM190 169h1v1h-1zM195 169h1v1h-1zM200 169h1v1h-1zM205 169h1v1h-1zM210 169h1v1h-1zM215 169h1v1h-1zM220 169h1v1h-1zM225 169h1v1h-1zM230 169h1v1h-1zM235 169h1v1h-1zM240 169h1v1h-1zM245 169h1v1h-1zM250 169h1v1h-1zM255 169h1v1h-1zM260 169h1v1h-1zM265 169h1v1h-1zM270 169h1v1h-1zM275 169h1v1h-1zM280 169h1v1h-1zM285 169h1v1h-1zM290 169h1v1h-1zM295 169h1v1h-1zM300 169h1v1h-1zM305 169h1v1h-1zM310 169h1v1h-1zM315 169h1v1h-1zM320 169h1v1h-1zM325 169h1v1h-1zM330 169h1v1h-1zM335 169h1v1h-1zM340 169h1v1h-1zM345 169h1v1h-1zM350 169h1v1h-1zM355 169h1v1h-1zM360 169h1v1h-1zM365 169h1v1h-1zM370 169h1v1h-1zM375 169h1v1h-1zM380 169h1v1h-1zM385 169h1v1h-1zM390 169h1v1h-1zM395 169h1v1h-1zM400 169h1v1h-1zM405 169h1v1h-1zM410 169h1v1h-1zM415 169h1v1h-1zM420 169h1v1h-1zM425 169h1v1h-1zM430 169h1v1h-1zM435 169h1v1h-1zM440 169h1v1h-1zM445 169h1v1h-1zM450 169h1v1h-1zM455 169h1v1h-1zM460 169h1v1h-1zM465 169h1v1h-1zM470 169h1v1h-1zM475 169h1v1h-1zM480 169h1v1h-1zM485 169h1v1h-1zM490 169h1v1h-1zM495 169h1v1h-1zM500 169h1v1h-1zM505 169h1v1h-1zM510 169h1v1h-1zM515 169h1v1h-1zM520 169h1v1h-1zM525 169h1v1h-1zM530 169h1v1h-1zM535 169h1v1h-1zM540 169h1v1h-1zM545 169h1v1h-1zM550 169h1v1h-1zM555 169h1v1h-1zM560 169h1v1h-1zM565 169h1v1h-1zM570 169h1v1h-1zM575 169h1v1h-1zM580 169h1v1h-1zM585 169h1v1h-1zM590 169h1v1h-1zM595 169h1v1h-1zM600 169h1v1h-1zM605 169h1v1h-1zM610 169h1v1h-1zM615 169h1v1h-1zM620 169h1v1h-1zM625 169h1v1h-1zM80 84h1v1h-1zM80 89h1v1h-1zM80 94h1v1h-1zM80 99h1v1h-1zM80 104h1v1h-1zM80 109h1v1h-1zM80 114h1v1h-1zM80 119h1v1h-1zM80 124h1v1h-1zM80 129h1v1h-1zM80 134h1v1h-1zM80 139h1v1h-1zM80 144h1v1h-1zM80 149h1v1h-1zM80 154h1v1h-1zM80 159h1v1h-1zM80 164h1v1h-1zM80 169h1v1h-1zM80 174h1v1h-1zM80 179h1v1h-1zM80 184h1v1h-1zM80 189h1v1h-1zM80 194h1v1h-1zM130 84h1v1h-1zM130 89h1v1h-1zM130 94h1v1h-1zM130 99h1v1h-1zM130 104h1v1h-1zM130 109h1v1h-1zM130 114h1v1h-1zM130 119h1v1h-1zM130 124h1v1h-1zM130 129h1v1h-1zM130 134h1v1h-1zM130 139h1v1h-1zM130 144h1v1h-1zM130 149h1v1h-1zM130 154h1v1h-1zM130 159h1v1h-1zM130 164h1v1h-1zM130 169h1v1h-1zM130 174h1v1h-1zM130 179h1v1h-1zM130 184h1v1h-1zM130 189h1v1h-1zM130 194h1v1h-1zM180 84h1v1h-1zM180 89h1v1h-1zM180 94h1v1h-1zM180 99h1v1h-1zM180 104h1v1h-1zM180 109h1v1h-1zM180 114h1v1h-1zM180 119h1v1h-1zM180 124h1v1h-1zM180 129h1v1h-1zM180 134h1v1h-1zM180 139h1v1h-1zM180 144h1v1h-1zM180 149h1v1h-1zM180 154h1v1h-1zM180 159h1v1h-1zM180 164h1v1h-1zM180 169h1v1h-1zM180 174h1v1h-1zM180 179h1v1h-1zM180 184h1v1h-1zM180 189h1v1h-1zM180 194h1v1h-1zM230 84h1v1h-1zM230 89h1v1h-1zM230 94h1v1h-1zM230 99h1v1h-1zM230 104h1v1h-1zM230 109h1v1h-1zM230 114h1v1h-1zM230 119h1v1h-1zM230 124h1v1h-1zM230 129h1v1h-1zM230 134h1v1h-1zM230 139h1v1h-1zM230 144h1v1h-1zM230 149h1v1h-1zM230 154h1v1h-1zM230 159h1v1h-1zM230 164h1v1h-1zM230 169h1v1h-1zM230 174h1v1h-1zM230 179h1v1h-1zM230 184h1v1h-1zM230 189h1v1h-1zM230 194h1v1h-1zM280 84h1v1h-1zM280 89h1v1h-1zM280 94h1v1h-1zM280 99h1v1h-1zM280 104h1v1h-1zM280 109h1v1h-1zM280 114h1v1h-1zM280 119h1v1h-1zM280 124h1v1h-1zM280 129h1v1h-1zM280 134h1v1h-1zM280 139h1v1h-1zM280 144h1v1h-1zM280 149h1v1h-1zM280 154h1v1h-1zM280 159h1v1h-1zM280 164h1v1h-1zM280 169h1v1h-1zM280 174h1v1h-1zM280 179h1v1h-1zM280 184h1v1h-1zM280 189h1v1h-1zM280 194h1v1h-1zM330 84h1v1h-1zM330 89h1v1h-1zM330 94h1v1h-1zM330 99h1v1h-1zM330 104h1v1h-1zM330 109h1v1h-1zM330 114h1v1h-1zM330 119h1v1h-1zM330 124h1v1h-1zM330 129h1v1h-1zM330 134h1v1h-1zM330 139h1v1h-1zM330 144h1v1h-1zM330 149h1v1h-1zM330 154h1v1h-1zM330 159h1v1h-1zM330 164h1v1h-1zM330 169h1v1h-1zM330 174h1v1h-1zM330 179h1v1h-1zM330 184h1v1h-1zM330 189h1v1h-1zM330 194h1v1h-1zM380 84h1v1h-1zM380 89h1v1h-1zM380 94h1v1h-1zM380 99h1v1h-1zM380 104h1v1h-1zM380 109h1v1h-1zM380 114h1v1h-1zM380 119h1v1h-1zM380 124h1v1h-1zM380 129h1v1h-1zM380 134h1v1h-1zM380 139h1v1h-1zM380 144h1v1h-1zM380 149h1v1h-1zM380 154h1v1h-1zM380 159h1v1h-1zM380 164h1v1h-1zM380 169h1v1h-1zM380 174h1v1h-1zM380 179h1v1h-1zM380 184h1v1h-1zM380 189h1v1h-1zM380 194h1v1h-1zM430 84h1v1h-1zM430 89h1v1h-1zM430 94h1v1h-1zM430 99h1v1h-1zM430 104h1v1h-1zM430 109h1v1h-1zM430 114h1v1h-1zM430 119h1v1h-1zM430 124h1v1h-1zM430 129h1v1h-1zM430 134h1v1h-1zM430 139h1v1h-1zM430 144h1v1h-1zM430 149h1v1h-1zM430 154h1v1h-1zM430 159h1v1h-1zM430 164h1v1h-1zM430 169h1v1h-1zM430 174h1v1h-1zM430 179h1v1h-1zM430 184h1v1h-1zM430 189h1v1h-1zM430 194h1v1h-1zM480 84h1v1h-1zM480 89h1v1h-1zM480 94h1v1h-1zM480 99h1v1h-1zM480 104h1v1h-1zM480 109h1v1h-1zM480 114h1v1h-1zM480 119h1v1h-1zM480 124h1v1h-1zM480 129h1v1h-1zM480 134h1v1h-1zM480 139h1v1h-1zM480 144h1v1h-1zM480 149h1v1h-1zM480 154h1v1h-1zM480 159h1v1h-1zM480 164h1v1h-1zM480 169h1v1h-1zM480 174h1v1h-1zM480 179h1v1h-1zM480 184h1v1h-1zM480 189h1v1h-1zM480 194h1v1h-1zM530 84h1v1h-1zM530 89h1v1h-1zM530 94h1v1h-1zM530 99h1v1h-1zM530 104h1v1h-1zM530 109h1v1h-1zM530 114h1v1h-1zM530 119h1v1h-1zM530 124h1v1h-1zM530 129h1v1h-1zM530 134h1v1h-1zM530 139h1v1h-1zM530 144h1v1h-1zM530 149h1v1h-1zM530 154h1v1h-1zM530 159h1v1h-1zM530 164h1v1h-1zM530 169h1v1h-1zM530 174h1v1h-1zM530 179h1v1h-1zM530 184h1v1h-1zM530 189h1v1h-1zM530 194h1v1h-1zM580 84h1v1h-1zM580 89h1v1h-1zM580 94h1v1h-1zM580 99h1v1h-1zM580 104h1v1h-1zM580 109h1v1h-1zM580 114h1v1h-1zM580 119h1v1h-1zM580 124h1v1h-1zM580 129h1v1h-1zM580 134h1v1h-1zM580 139h1v1h-1zM580 144h1v1h-1zM580 149h1v1h-1zM580 154h1v1h-1zM580 159h1v1h-1zM580 164h1v1h-1zM580 169h1v1h-1zM580 174h1v1h-1zM580 179h1v1h-1zM580 184h1v1h-1zM580 189h1v1h-1zM580 194h1v1h-1z"/>
<path d="M24 139.5H30M24.5 139V145" stroke="#b0a0d8" fill="none"/>
<path d="M20.5 145H28.5L24.5 150z" fill="#b0a0d8"/>
<rect x="30.5" y="201.5" width="600" height="120" fill="#000000" stroke="#b0a0d8"/>
<path fill="#a8a0d8" d="M35 231h1v1h-1zM40 231h1v1h-1zM45 231h1v1h-1zM50 231h1v1h-1zM55 231h1v1h-1zM60 231h1v1h-1zM65 231h1v1h-1zM70 231h1v1h-1zM75 231h1v1h-1zM80 231h1v1h-1zM85 231h1v1h-1zM90 231h1v1h-1zM95 231h1v1h-1zM100 231h1v1h-1zM105 231h1v1h-1zM110 231h1v1h-1zM115 231h1v1h-1zM120 231h1v1h-1zM125 231h1v1h-1zM130 231h1v1h-1zM135 231h1v1h-1zM140 231h1v1h-1zM145 231h1v1h-1zM150 231h1v1h-1zM155 231h1v1h-1zM160 231h1v1h-1zM165 231h1v1h-1zM170 231h1v1h-1zM175 231h1v1h-1zM180 231h1v1h-1zM185 231h1v1h-1zM190 231h1v1h-1zM195 231h1v1h-1zM200 231h1v1h-1zM205 231h1v1h-1zM210 231h1v1h-1zM215 231h1v1h-1zM220 231h1v1h-1zM225 231h1v1h-1zM230 231h1v1h-1zM235 231h1v1h-1zM240 231h1v1h-1zM245 231h1v1h-1zM250 231h1v1h-1zM255 231h1v1h-1zM260 231h1v1h-1zM265 231h1v1h-1zM270 231h1v1h-1zM275 231h1v1h-1zM280 231h1v1h-1zM285 231h1v1h-1zM290 231h1v1h-1zM295 231h1v1h-1zM300 231h1v1h-1zM305 231h1v1h-1zM310 231h1v1h-1zM315 231h1v1h-1zM320 231h1v1h-1zM325 231h1v1h-1zM330 231h1v1h-1zM335 231h1v1h-1zM340 231h1v1h-1zM345 231h1v1h-1zM350 231h1v1h-1zM355 231h1v1h-1zM360 231h1v1h-1zM365 231h1v1h-1zM370 231h1v1h-1zM375 231h1v1h-1zM380 231h1v1h-1zM385 231h1v1h-1zM390 231h1v1h-1zM395 231h1v1h-1zM400 231h1v1h-1zM405 231h1v1h-1zM410 231h1v1h-1zM415 231h1v1h-1zM420 231h1v1h-1zM425 231h1v1h-1zM430 231h1v1h-1zM435 231h1v1h-1zM440 231h1v1h-1zM445 231h1v1h-1zM450 231h1v1h-1zM455 231h1v1h-1zM460 231h1v1h-1zM465 231h1v1h-1zM470 231h1v1h-1zM475 231h1v1h-1zM480 231h1v1h-1zM485 231h1v1h-1zM490 231h1v1h-1zM495 231h1v1h-1zM500 231h1v1h-1zM505 231h1v1h-1zM510 231h1v1h-1zM515 231h1v1h-1zM520 231h1v1h-1zM525 231h1v1h-1zM530 231h1v1h-1zM535 231h1v1h-1zM540 231h1v1h-1zM545 231h1v1h-1zM550 231h1v1h-1zM555 231h1v1h-1zM560 231h1v1h-1zM565 231h1v1h-1zM570 231h1v1h-1zM575 231h1v1h-1zM580 231h1v1h-1zM585 231h1v1h-1zM590 231h1v1h-1zM595 231h1v1h-1zM600 231h1v1h-1zM605 231h1v1h-1zM610 231h1v1h-1zM615 231h1v1h-1zM620 231h1v1h-1zM625 231h1v1h-1zM35 291h1v1h-1zM40 291h1v1h-1zM45 291h1v1h-1zM50 291h1v1h-1zM55 291h1v1h-1zM60 291h1v1h-1zM65 291h1v1h-1zM70 291h1v1h-1zM75 291h1v1h-1zM80 291h1v1h-1zM85 291h1v1h-1zM90 291h1v1h-1zM95 291h1v1h-1zM100 291h1v1h-1zM105 291h1v1h-1zM110 291h1v1h-1zM115 291h1v1h-1zM120 291h1v1h-1zM125 291h1v1h-1zM130 291h1v1h-1zM135 291h1v1h-1zM140 291h1v1h-1zM145 291h1v1h-1zM150 291h1v1h-1zM155 291h1v1h-1zM160 291h1v1h-1zM165 291h1v1h-1zM170 291h1v1h-1zM175 291h1v1h-1zM180 291h1v1h-1zM185 291h1v1h-1zM190 291h1v1h-1zM195 291h1v1h-1zM200 291h1v1h-1zM205 291h1v1h-1zM210 291h1v1h-1zM215 291h1v1h-1zM220 291h1v1h-1zM225 291h1v1h-1zM230 291h1v1h-1zM235 291h1v1h-1zM240 291h1v1h-1zM245 291h1v1h-1zM250 291h1v1h-1zM255 291h1v1h-1zM260 291h1v1h-1zM265 291h1v1h-1zM270 291h1v1h-1zM275 291h1v1h-1zM280 291h1v1h-1zM285 291h1v1h-1zM290 291h1v1h-1zM295 291h1v1h-1zM300 291h1v1h-1zM305 291h1v1h-1zM310 291h1v1h-1zM315 291h1v1h-1zM320 291h1v1h-1zM325 291h1v1h-1zM330 291h1v1h-1zM335 291h1v1h-1zM340 291h1v1h-1zM345 291h1v1h-1zM350 291h1v1h-1zM355 291h1v1h-1zM360 291h1v1h-1zM365 291h1v1h-1zM370 291h1v1h-1zM375 291h1v1h-1zM380 291h1v1h-1zM385 291h1v1h-1zM390 291h1v1h-1zM395 291h1v1h-1zM400 291h1v1h-1zM405 291h1v1h-1zM410 291h1v1h-1zM415 291h1v1h-1zM420 291h1v1h-1zM425 291h1v1h-1zM430 291h1v1h-1zM435 291h1v1h-1zM440 291h1v1h-1zM445 291h1v1h-1zM450 291h1v1h-1zM455 291h1v1h-1zM460 291h1v1h-1zM465 291h1v1h-1zM470 291h1v1h-1zM475 291h1v1h-1zM480 291h1v1h-1zM485 291h1v1h-1zM490 291h1v1h-1zM495 291h1v1h-1zM500 291h1v1h-1zM505 291h1v1h-1zM510 291h1v1h-1zM515 291h1v1h-1zM520 291h1v1h-1zM525 291h1v1h-1zM530 291h1v1h-1zM535 291h1v1h-1zM540 291h1v1h-1zM545 291h1v1h-1zM550 291h1v1h-1zM555 291h1v1h-1zM560 291h1v1h-1zM565 291h1v1h-1zM570 291h1v1h-1zM575 291h1v1h-1zM580 291h1v1h-1zM585 291h1v1h-1zM590 291h1v1h-1zM595 291h1v1h-1zM600 291h1v1h-1zM605 291h1v1h-1zM610 291h1v1h-1zM615 291h1v1h-1zM620 291h1v1h-1zM625 291h1v1h-1zM80 206h1v1h-1zM80 211h1v1h-1zM80 216h1v1h-1zM80 221h1v1h-1zM80 226h1v1h-1zM80 231h1v1h-1zM80 236h1v1h-1zM80 241h1v1h-1zM80 246h1v1h-1zM80 251h1v1h-1zM80 256h1v1h-1zM80 261h1v1h-1zM80 266h1v1h-1zM80 271h1v1h-1zM80 276h1v1h-1zM80 281h1v1h-1zM80 286h1v1h-1zM80 291h1v1h-1zM80 296h1v1h-1zM80 301h1v1h-1zM80 306h1v1h-1zM80 311h1v1h-1zM80 316h1v1h-1zM130 206h1v1h-1zM130 211h1v1h-1zM130 216h1v1h-1zM130 221h1v1h-1zM130 226h1v1h-1zM130 231h1v1h-1zM130 236h1v1h-1zM130 241h1v1h-1zM130 246h1v1h-1zM130 251h1v1h-1zM130 256h1v1h-1zM130 261h1v1h-1zM130 266h1v1h-1zM130 271h1v1h-1zM130 276h1v1h-1zM130 281h1v1h-1zM130 286h1v1h-1zM130 291h1v1h-1zM130 296h1v1h-1zM130 301h1v1h-1zM130 306h1v1h-1zM130 311h1v1h-1zM130 316h1v1h-1zM180 206h1v1h-1zM180 211h1v1h-1zM180 216h1v1h-1zM180 221h1v1h-1zM180 226h1v1h-1zM180 231h1v1h-1zM180 236h1v1h-1zM180 241h1v1h-1zM180 246h1v1h-1zM180 251h1v1h-1zM180 256h1v1h-1zM180 261h1v1h-1zM180 266h1v1h-1zM180 271h1v1h-1zM180 276h1v1h-1zM180 281h1v1h-1zM180 286h1v1h-1zM180 291h1v1h-1zM180 296h1v1h-1zM180 301h1v1h-1zM180 306h1v1h-1zM180 311h1v1h-1zM180 316h1v1h-1zM230 206h1v1h-1zM230 211h1v1h-1zM230 216h1v1h-1zM230 221h1v1h-1zM230 226h1v1h-1zM230 231h1v1h-1zM230 236h1v1h-1zM230 241h1v1h-1zM230 246h1v1h-1zM230 251h1v1h-1zM230 256h1v1h-1zM230 261h1v1h-1zM230 266h1v1h-1zM230 271h1v1h-1zM230 276h1v1h-1zM230 281h1v1h-1zM230 286h1v1h-1zM230 291h1v1h-1zM230 296h1v1h-1zM230 301h1v1h-1zM230 306h1v1h-1zM230 311h1v1h-1zM230 316h1v1h-1zM280 206h1v1h-1zM280 211h1v1h-1zM280 216h1v1h-1zM280 221h1v1h-1zM280 226h1v1h-1zM280 231h1v1h-1zM280 236h1v1h-1zM280 241h1v1h-1zM280 246h1v1h-1zM280 251h1v1h-1zM280 256h1v1h-1zM280 261h1v1h-1zM280 266h1v1h-1zM280 271h1v1h-1zM280 276h1v1h-1zM280 281h1v1h-1zM280 286h1v1h-1zM280 291h1v1h-1zM280 296h1v1h-1zM280 301h1v1h-1zM280 306h1v1h-1zM280 311h1v1h-1zM280 316h1v1h-1zM330 206h1v1h-1zM330 211h1v1h-1zM330 216h1v1h-1zM330 221h1v1h-1zM330 226h1v1h-1zM330 231h1v1h-1zM330 236h1v1h-1zM330 241h1v1h-1zM330 246h1v1h-1zM330 251h1v1h-1zM330 256h1v1h-1zM330 261h1v1h-1zM330 266h1v1h-1zM330 271h1v1h-1zM330 276h1v1h-1zM330 281h1v1h-1zM330 286h1v1h-1zM330 291h1v1h-1zM330 296h1v1h-1zM330 301h1v1h-1zM330 306h1v1h-1zM330 311h1v1h-1zM330 316h1v1h-1zM380 206h1v1h-1zM380 211h1v1h-1zM380 216h1v1h-1zM380 221h1v1h-1zM380 226h1v1h-1zM380 231h1v1h-1zM380 236h1v1h-1zM380 241h1v1h-1zM380 246h1v1h-1zM380 251h1v1h-1zM380 256h1v1h-1zM380 261h1v1h-1zM380 266h1v1h-1zM380 271h1v1h-1zM380 276h1v1h-1zM380 281h1v1h-1zM380 286h1v1h-1zM380 291h1v1h-1zM380 296h1v1h-1zM380 301h1v1h-1zM380 306h1v1h-1zM380 311h1v1h-1zM380 316h1v1h-1zM430 206h1v1h-1zM430 211h1v1h-1zM430 216h1v1h-1zM430 221h1v1h-1zM430 226h1v1h-1zM430 231h1v1h-1zM430 236h1v1h-1zM430 241h1v1h-1zM430 246h1v1h-1zM430 251h1v1h-1zM430 256h1v1h-1zM430 261h1v1h-1zM430 266h1v1h-1zM430 271h1v1h-1zM430 276h1v1h-1zM430 281h1v1h-1zM430 286h1v1h-1zM430 291h1v1h-1zM430 296h1v1h-1zM430 301h1v1h-1zM430 306h1v1h-1zM430 311h1v1h-1zM430 316h1v1h-1zM480 206h1v1h-1zM480 211h1v1h-1zM480 216h1v1h-1zM480 221h1v1h-1zM480 226h1v1h-1zM480 231h1v1h-1zM480 236h1v1h-1zM480 241h1v1h-1zM480 246h1v1h-1zM480 251h1v1h-1zM480 256h1v1h-1zM480 261h1v1h-1zM480 266h1v1h-1zM480 271h1v1h-1zM480 276h1v1h-1zM480 281h1v1h-1zM480 286h1v1h-1zM480 291h1v1h-1zM480 296h1v1h-1zM480 301h1v1h-1zM480 306h1v1h-1zM480 311h1v1h-1zM480 316h1v1h-1zM530 206h1v1h-1zM530 211h1v1h-1zM530 216h1v1h-1zM530 221h1v1h-1zM530 226h1v1h-1zM530 231h1v1h-1zM530 236h1v1h-1zM530 241h1v1h-1zM530 246h1v1h-1zM530 251h1v1h-1zM530 256h1v1h-1zM530 261h1v1h-1zM530 266h1v1h-1zM530 271h1v1h-1zM530 276h1v1h-1zM530 281h1v1h-1zM530 286h1v1h-1zM530 291h1v1h-1zM530 296h1v1h-1zM530 301h1v1h-1zM530 306h1v1h-1zM530 311h1v1h-1zM530 316h1v1h-1zM580 206h1v1h-1zM580 211h1v1h-1zM580 216h1v1h-1zM580 221h1v1h-1zM580 226h1v1h-1zM580 231h1v1h-1zM580 236h1v1h-1zM580 241h1v1h-1zM580 246h1v1h-1zM580 251h1v1h-1zM580 256h1v1h-1zM580 261h1v1h-1zM580 266h1v1h-1zM580 271h1v1h-1zM580 276h1v1h-1zM580 281h1v1h-1zM580 286h1v1h-1zM580 291h1v1h-1zM580 296h1v1h-1zM580 301h1v1h-1zM580 306h1v1h-1zM580 311h1v1h-1zM580 316h1v1h-1z"/>
<path d="M24 261.5H30M24.5 261V267" stroke="#b0a0d8" fill="none"/>
<path d="M20.5 267H28.5L24.5 272z" fill="#b0a0d8"/>
<rect x="30.5" y="323.5" width="600" height="120" fill="#000000" stroke="#b0a0d8"/>
<path fill="#a8a0d8" d="M35 353h1v1h-1zM40 353h1v1h-1zM45 353h1v1h-1zM50 353h1v1h-1zM55 353h1v1h-1zM60 353h1v1h-1zM65 353h1v1h-1zM70 353h1v1h-1zM75 353h1v1h-1zM80 353h1v1h-1zM85 353h1v1h-1zM90 353h1v1h-1zM95 353h1v1h-1zM100 353h1v1h-1zM105 353h1v1h-1zM110 353h1v1h-1zM115 353h1v1h-1zM120 353h1v1h-1zM125 353h1v1h-1zM130 353h1v1h-1zM135 353h1v1h-1zM140 353h1v1h-1zM145 353h1v1h-1zM150 353h1v1h-1zM155 353h1v1h-1zM160 353h1v1h-1zM165 353h1v1h-1zM170 353h1v1h-1zM175 353h1v1h-1zM180 353h1v1h-1zM185 353h1v1h-1zM190 353h1v1h-1zM195 353h1v1h-1zM200 353h1v1h-1zM205 353h1v1h-1zM210 353h1v1h-1zM215 353h1v1h-1zM220 353h1v1h-1zM225 353h1v1h-1zM230 353h1v1h-1zM235 353h1v1h-1zM240 353h1v1h-1zM245 353h1v1h-1zM250 353h1v1h-1zM255 353h1v1h-1zM260 353h1v1h-1zM265 353h1v1h-1zM270 353h1v1h-1zM275 353h1v1h-1zM280 353h1v1h-1zM285 353h1v1h-1zM290 353h1v1h-1zM295 353h1v1h-1zM300 353h1v1h-1zM305 353h1v1h-1zM310 353h1v1h-1zM315 353h1v1h-1zM320 353h1v1h-1zM325 353h1v1h-1zM330 353h1v1h-1zM335 353h1v1h-1zM340 353h1v1h-1zM345 353h1v1h-1zM350 353h1v1h-1zM355 353h1v1h-1zM360 353h1v1h-1zM365 353h1v1h-1zM370 353h1v1h-1zM375 353h1v1h-1zM380 353h1v1h-1zM385 353h1v1h-1zM390 353h1v1h-1zM395 353h1v1h-1zM400 353h1v1h-1zM405 353h1v1h-1zM410 353h1v1h-1zM415 353h1v1h-1zM420 353h1v1h-1zM425 353h1v1h-1zM430 353h1v1h-1zM435 353h1v1h-1zM440 353h1v1h-1zM445 353h1v1h-1zM450 353h1v1h-1zM455 353h1v1h-1zM460 353h1v1h-1zM465 353h1v1h-1zM470 353h1v1h-1zM475 353h1v1h-1zM480 353h1v1h-1zM485 353h1v1h-1zM490 353h1v1h-1zM495 353h1v1h-1zM500 353h1v1h-1zM505 353h1v1h-1zM510 353h1v1h-1zM515 353h1v1h-1zM520 353h1v1h-1zM525 353h1v1h-1zM530 353h1v1h-1zM535 353h1v1h-1zM540 353h1v1h-1zM545 353h1v1h-1zM550 353h1v1h-1zM555 353h1v1h-1zM560 353h1v1h-1zM565 353h1v1h-1zM570 353h1v1h-1zM575 353h1v1h-1zM580 353h1v1h-1zM585 353h1v1h-1zM590 353h1v1h-1zM595 353h1v1h-1zM600 353h1v1h-1zM605 353h1v1h-1zM610 353h1v1h-1zM615 353h1v1h-1zM620 353h1v1h-1zM625 353h1v1h-1zM35 413h1v1h-1zM40 413h1v1h-1zM45 413h1v1h-1zM50 413h1v1h-1zM55 413h1v1h-1zM60 413h1v1h-1zM65 413h1v1h-1zM70 413h1v1h-1zM75 413h1v1h-1zM80 413h1v1h-1zM85 413h1v1h-1zM90 413h1v1h-1zM95 413h1v1h-1zM100 413h1v1h-1zM105 413h1v1h-1zM110 413h1v1h-1zM115 413h1v1h-1zM120 413h1v1h-1zM125 413h1v1h-1zM130 413h1v1h-1zM135 413h1v1h-1zM140 413h1v1h-1zM145 413h1v1h-1zM150 413h1v1h-1zM155 413h1v1h-1zM160 413h1v1h-1zM165 413h1v1h-1zM170 413h1v1h-1zM175 413h1v1h-1zM180 413h1v1h-1zM185 413h1v1h-1zM190 413h1v1h-1zM195 413h1v1h-1zM200 413h1v1h-1zM205 413h1v1h-1zM210 413h1v1h-1zM215 413h1v1h-1zM220 413h1v1h-1zM225 413h1v1h-1zM230 413h1v1h-1zM235 413h1v1h-1zM240 413h1v1h-1zM245 413h1v1h-1zM250 413h1v1h-1zM255 413h1v1h-1zM260 413h1v1h-1zM265 413h1v1h-1zM270 413h1v1h-1zM275 413h1v1h-1zM280 413h1v1h-1zM285 413h1v1h-1zM290 413h1v1h-1zM295 413h1v1h-1zM300 413h1v1h-1zM305 413h1v1h-1zM310 413h1v1h-1zM315 413h1v1h-1zM320 413h1v1h-1zM325 413h1v1h-1zM330 413h1v1h-1zM335 413h1v1h-1zM340 413h1v1h-1zM345 413h1v1h-1zM350 413h1v1h-1zM355 413h1v1h-1zM360 413h1v1h-1zM365 413h1v1h-1zM370 413h1v1h-1zM375 413h1v1h-1zM380 413h1v1h-1zM385 413h1v1h-1zM390 413h1v1h-1zM395 413h1v1h-1zM400 413h1v1h-1zM405 413h1v1h-1zM410 413h1v1h-1zM415 413h1v1h-1zM420 413h1v1h-1zM425 413h1v1h-1zM430 413h1v1h-1zM435 413h1v1h-1zM440 413h1v1h-1zM445 413h1v1h-1zM450 413h1v1h-1zM455 413h1v1h-1zM460 413h1v1h-1zM465 413h1v1h-1zM470 413h1v1h-1zM475 413h1v1h-1zM480 413h1v1h-1zM485 413h1v1h-1zM490 413h1v1h-1zM495 413h1v1h-1zM500 413h1v1h-1zM505 413h1v1h-1zM510 413h1v1h-1zM515 413h1v1h-1zM520 413h1v1h-1zM525 413h1v1h-1zM530 413h1v1h-1zM535 413h1v1h-1zM540 413h1v1h-1zM545 413h1v1h-1zM550 413h1v1h-1zM555 413h1v1h-1zM560 413h1v1h-1zM565 413h1v1h-1zM570 413h1v1h-1zM575 413h1v1h-1zM580 413h1v1h-1zM585 413h1v1h-1zM590 413h1v1h-1zM595 413h1v1h-1zM600 413h1v1h-1zM605 413h1v1h-1zM610 413h1v1h-1zM615 413h1v1h-1zM620 413h1v1h-1zM625 413h1v1h-1zM80 328h1v1h-1zM80 333h1v1h-1zM80 338h1v1h-1zM80 343h1v1h-1zM80 348h1v1h-1zM80 353h1v1h-1zM80 358h1v1h-1zM80 363h1v1h-1zM80 368h1v1h-1zM80 373h1v1h-1zM80 378h1v1h-1zM80 383h1v1h-1zM80 388h1v1h-1zM80 393h1v1h-1zM80 398h1v1h-1zM80 403h1v1h-1zM80 408h1v1h-1zM80 413h1v1h-1zM80 418h1v1h-1zM80 423h1v1h-1zM80 428h1v1h-1zM80 433h1v1h-1zM80 438h1v1h-1zM130 328h1v1h-1zM130 333h1v1h-1zM130 338h1v1h-1zM130 343h1v1h-1zM130 348h1v1h-1zM130 353h1v1h-1zM130 358h1v1h-1zM130 363h1v1h-1zM130 368h1v1h-1zM130 373h1v1h-1zM130 378h1v1h-1zM130 383h1v1h-1zM130 388h1v1h-1zM130 393h1v1h-1zM130 398h1v1h-1zM130 403h1v1h-1zM130 408h1v1h-1zM130 413h1v1h-1zM130 418h1v1h-1zM130 423h1v1h-1zM130 428h1v1h-1zM130 433h1v1h-1zM130 438h1v1h-1zM180 328h1v1h-1zM180 333h1v1h-1zM180 338h1v1h-1zM180 343h1v1h-1zM180 348h1v1h-1zM180 353h1v1h-1zM180 358h1v1h-1zM180 363h1v1h-1zM180 368h1v1h-1zM180 373h1v1h-1zM180 378h1v1h-1zM180 383h1v1h-1zM180 388h1v1h-1zM180 393h1v1h-1zM180 398h1v1h-1zM180 403h1v1h-1zM180 408h1v1h-1zM180 413h1v1h-1zM180 418h1v1h-1zM180 423h1v1h-1zM180 428h1v1h-1zM180 433h1v1h-1zM180 438h1v1h-1zM230 328h1v1h-1zM230 333h1v1h-1zM230 338h1v1h-1zM230 343h1v1h-1zM230 348h1v1h-1zM230 353h1v1h-1zM230 358h1v1h-1zM230 363h1v1h-1zM230 368h1v1h-1zM230 373h1v1h-1zM230 378h1v1h-1zM230 383h1v1h-1zM230 388h1v1h-1zM230 393h1v1h-1zM230 398h1v1h-1zM230 403h1v1h-1zM230 408h1v1h-1zM230 413h1v1h-1zM230 418h1v1h-1zM230 423h1v1h-1zM230 428h1v1h-1zM230 433h1v1h-1zM230 438h1v1h-1zM280 328h1v1h-1zM280 333h1v1h-1zM280 338h1v1h-1zM280 343h1v1h-1zM280 348h1v1h-1zM280 353h1v1h-1zM280 358h1v1h-1zM280 363h1v1h-1zM280 368h1v1h-1zM280 373h1v1h-1zM280 378h1v1h-1zM280 383h1v1h-1zM280 388h1v1h-1zM280 393h1v1h-1zM280 398h1v1h-1zM280 403h1v1h-1zM280 408h1v1h-1zM280 413h1v1h-1zM280 418h1v1h-1zM280 423h1v1h-1zM280 428h1v1h-1zM280 433h1v1h-1zM280 438h1v1h-1zM330 328h1v1h-1zM330 333h1v1h-1zM330 338h1v1h-1zM330 343h1v1h-1zM330 348h1v1h-1zM330 353h1v1h-1zM330 358h1v1h-1zM330 363h1v1h-1zM330 368h1v1h-1zM330 373h1v1h-1zM330 378h1v1h-1zM330 383h1v1h-1zM330 388h1v1h-1zM330 393h1v1h-1zM330 398h1v1h-1zM330 403h1v1h-1zM330 408h1v1h-1zM330 413h1v1h-1zM330 418h1v1h-1zM330 423h1v1h-1zM330 428h1v1h-1zM330 433h1v1h-1zM330 438h1v1h-1zM380 328h1v1h-1zM380 333h1v1h-1zM380 338h1v1h-1zM380 343h1v1h-1zM380 348h1v1h-1zM380 353h1v1h-1zM380 358h1v1h-1zM380 363h1v1h-1zM380 368h1v1h-1zM380 373h1v1h-1zM380 378h1v1h-1zM380 383h1v1h-1zM380 388h1v1h-1zM380 393h1v1h-1zM380 398h1v1h-1zM380 403h1v1h-1zM380 408h1v1h-1zM380 413h1v1h-1zM380 418h1v1h-1zM380 423h1v1h-1zM380 428h1v1h-1zM380 433h1v1h-1zM380 438h1v1h-1zM430 328h1v1h-1zM430 333h1v1h-1zM430 338h1v1h-1zM430 343h1v1h-1zM430 348h1v1h-1zM430 353h1v1h-1zM430 358h1v1h-1zM430 363h1v1h-1zM430 368h1v1h-1zM430 373h1v1h-1zM430 378h1v1h-1zM430 383h1v1h-1zM430 388h1v1h-1zM430 393h1v1h-1zM430 398h1v1h-1zM430 403h1v1h-1zM430 408h1v1h-1zM430 413h1v1h-1zM430 418h1v1h-1zM430 423h1v1h-1zM430 428h1v1h-1zM430 433h1v1h-1zM430 438h1v1h-1zM480 328h1v1h-1zM480 333h1v1h-1zM480 338h1v1h-1zM480 343h1v1h-1zM480 348h1v1h-1zM480 353h1v1h-1zM480 358h1v1h-1zM480 363h1v1h-1zM480 368h1v1h-1zM480 373h1v1h-1zM480 378h1v1h-1zM480 383h1v1h-1zM480 388h1v1h-1zM480 393h1v1h-1zM480 398h1v1h-1zM480 403h1v1h-1zM480 408h1v1h-1zM480 413h1v1h-1zM480 418h1v1h-1zM480 423h1v1h-1zM480 428h1v1h-1zM480 433h1v1h-1zM480 438h1v1h-1zM530 328h1v1h-1zM530 333h1v1h-1zM530 338h1v1h-1zM530 343h1v1h-1zM530 348h1v1h-1zM530 353h1v1h-1zM530 358h1v1h-1zM530 363h1v1h-1zM530 368h1v1h-1zM530 373h1v1h-1zM530 378h1v1h-1zM530 383h1v1h-1zM530 388h1v1h-1zM530 393h1v1h-1zM530 398h1v1h-1zM530 403h1v1h-1zM530 408h1v1h-1zM530 413h1v1h-1zM530 418h1v1h-1zM530 423h1v1h-1zM530 428h1v1h-1zM530 433h1v1h-1zM530 438h1v1h-1zM580 328h1v1h-1zM580 333h1v1h-1zM580 338h1v1h-1zM580 343h1v1h-1zM580 348h1v1h-1zM580 353h1v1h-1zM580 358h1v1h-1zM580 363h1v1h-1zM580 368h1v1h-1zM580 373h1v1h-1zM580 378h1v1h-1zM580 383h1v1h-1zM580 388h1v1h-1zM580 393h1v1h-1zM580 398h1v1h-1zM580 403h1v1h-1zM580 408h1v1h-1zM580 413h1v1h-1zM580 418h1v1h-1zM580 423h1v1h-1zM580 428h1v1h-1zM580 433h1v1h-1zM580 438h1v1h-1z"/>
<path d="M24 383.5H30M24.5 383V389" stroke="#b0a0d8" fill="none"/>
<path d="M20.5 389H28.5L24.5 394z" fill="#b0a0d8"/>
<rect x="30.5" y="445.5" width="600" height="120" fill="#000000" stroke="#b0a0d8"/>
<path fill="#a8a0d8" d="M35 475h1v1h-1zM40 475h1v1h-1zM45 475h1v1h-1zM50 475h1v1h-1zM55 475h1v1h-1zM60 475h1v1h-1zM65 475h1v1h-1zM70 475h1v1h-1zM75 475h1v1h-1zM80 475h1v1h-1zM85 475h1v1h-1zM90 475h1v1h-1zM95 475h1v1h-1zM100 475h1v1h-1zM105 475h1v1h-1zM110 475h1v1h-1zM115 475h1v1h-1zM120 475h1v1h-1zM125 475h1v1h-1zM130 475h1v1h-1zM135 475h1v1h-1zM140 475h1v1h-1zM145 475h1v1h-1zM150 475h1v1h-1zM155 475h1v1h-1zM160 475h1v1h-1zM165 475h1v1h-1zM170 475h1v1h-1zM175 475h1v1h-1zM180 475h1v1h-1zM185 475h1v1h-1zM190 475h1v1h-1zM195 475h1v1h-1zM200 475h1v1h-1zM205 475h1v1h-1zM210 475h1v1h-1zM215 475h1v1h-1zM220 475h1v1h-1zM225 475h1v1h-1zM230 475h1v1h-1zM235 475h1v1h-1zM240 475h1v1h-1zM245 475h1v1h-1zM250 475h1v1h-1zM255 475h1v1h-1zM260 475h1v1h-1zM265 475h1v1h-1zM270 475h1v1h-1zM275 475h1v1h-1zM280 475h1v1h-1zM285 475h1v1h-1zM290 475h1v1h-1zM295 475h1v1h-1zM300 475h1v1h-1zM305 475h1v1h-1zM310 475h1v1h-1zM315 475h1v1h-1zM320 475h1v1h-1zM325 475h1v1h-1zM330 475h1v1h-1zM335 475h1v1h-1zM340 475h1v1h-1zM345 475h1v1h-1zM350 475h1v1h-1zM355 475h1v1h-1zM360 475h1v1h-1zM365 475h1v1h-1zM370 475h1v1h-1zM375 475h1v1h-1zM380 475h1v1h-1zM385 475h1v1h-1zM390 475h1v1h-1zM395 475h1v1h-1zM400 475h1v1h-1zM405 475h1v1h-1zM410 475h1v1h-1zM415 475h1v1h-1zM420 475h1v1h-1zM425 475h1v1h-1zM430 475h1v1h-1zM435 475h1v1h-1zM440 475h1v1h-1zM445 475h1v1h-1zM450 475h1v1h-1zM455 475h1v1h-1zM460 475h1v1h-1zM465 475h1v1h-1zM470 475h1v1h-1zM475 475h1v1h-1zM480 475h1v1h-1zM485 475h1v1h-1zM490 475h1v1h-1zM495 475h1v1h-1zM500 475h1v1h-1zM505 475h1v1h-1zM510 475h1v1h-1zM515 475h1v1h-1zM520 475h1v1h-1zM525 475h1v1h-1zM530 475h1v1h-1zM535 475h1v1h-1zM540 475h1v1h-1zM545 475h1v1h-1zM550 475h1v1h-1zM555 475h1v1h-1zM560 475h1v1h-1zM565 475h1v1h-1zM570 475h1v1h-1zM575 475h1v1h-1zM580 475h1v1h-1zM585 475h1v1h-1zM590 475h1v1h-1zM595 475h1v1h-1zM600 475h1v1h-1zM605 475h1v1h-1zM610 475h1v1h-1zM615 475h1v1h-1zM620 475h1v1h-1zM625 475h1v1h-1zM35 535h1v1h-1zM40 535h1v1h-1zM45 535h1v1h-1zM50 535h1v1h-1zM55 535h1v1h-1zM60 535h1v1h-1zM65 535h1v1h-1zM70 535h1v1h-1zM75 535h1v1h-1zM80 535h1v1h-1zM85 535h1v1h-1zM90 535h1v1h-1zM95 535h1v1h-1zM100 535h1v1h-1zM105 535h1v1h-1zM110 535h1v1h-1zM115 535h1v1h-1zM120 535h1v1h-1zM125 535h1v1h-1zM130 535h1v1h-1zM135 535h1v1h-1zM140 535h1v1h-1zM145 535h1v1h-1zM150 535h1v1h-1zM155 535h1v1h-1zM160 535h1v1h-1zM165 535h1v1h-1zM170 535h1v1h-1zM175 535h1v1h-1zM180 535h1v1h-1zM185 535h1v1h-1zM190 535h1v1h-1zM195 535h1v1h-1zM200 535h1v1h-1zM205 535h1v1h-1zM210 535h1v1h-1zM215 535h1v1h-1zM220 535h1v1h-1zM225 535h1v1h-1zM230 535h1v1h-1zM235 535h1v1h-1zM240 535h1v1h-1zM245 535h1v1h-1zM250 535h1v1h-1zM255 535h1v1h-1zM260 535h1v1h-1zM265 535h1v1h-1zM270 535h1v1h-1zM275 535h1v1h-1zM280 535h1v1h-1zM285 535h1v1h-1zM290 535h1v1h-1zM295 535h1v1h-1zM300 535h1v1h-1zM305 535h1v1h-1zM310 535h1v1h-1zM315 535h1v1h-1zM320 535h1v1h-1zM325 535h1v1h-1zM330 535h1v1h-1zM335 535h1v1h-1zM340 535h1v1h-1zM345 535h1v1h-1zM350 535h1v1h-1zM355 535h1v1h-1zM360 535h1v1h-1zM365 535h1v1h-1zM370 535h1v1h-1zM375 535h1v1h-1zM380 535h1v1h-1zM385 535h1v1h-1zM390 535h1v1h-1zM395 535h1v1h-1zM400 535h1v1h-1zM405 535h1v1h-1zM410 535h1v1h-1zM415 535h1v1h-1zM420 535h1v1h-1zM425 535h1v1h-1zM430 535h1v1h-1zM435 535h1v1h-1zM440 535h1v1h-1zM445 535h1v1h-1zM450 535h1v1h-1zM455 535h1v1h-1zM460 535h1v1h-1zM465 535h1v1h-1zM470 535h1v1h-1zM475 535h1v1h-1zM480 535h1v1h-1zM485 535h1v1h-1zM490 535h1v1h-1zM495 535h1v1h-1zM500 535h1v1h-1zM505 535h1v1h-1zM510 535h1v1h-1zM515 535h1v1h-1zM520 535h1v1h-1zM525 535h1v1h-1zM530 535h1v1h-1zM535 535h1v1h-1zM540 535h1v1h-1zM545 535h1v1h-1zM550 535h1v1h-1zM555 535h1v1h-1zM560 535h1v1h-1zM565 535h1v1h-1zM570 535h1v1h-1zM575 535h1v1h-1zM580 535h1v1h-1zM585 535h1v1h-1zM590 535h1v1h-1zM595 535h1v1h-1zM600 535h1v1h-1zM605 535h1v1h-1zM610 535h1v1h-1zM615 535h1v1h-1zM620 535h1v1h-1zM625 535h1v1h-1zM80 450h1v1h-1zM80 455h1v1h-1zM80 460h1v1h-1zM80 465h1v1h-1zM80 470h1v1h-1zM80 475h1v1h-1zM80 480h1v1h-1zM80 485h1v1h-1zM80 490h1v1h-1zM80 495h1v1h-1zM80 500h1v1h-1zM80 505h1v1h-1zM80 510h1v1h-1zM80 515h1v1h-1zM80 520h1v1h-1zM80 525h1v1h-1zM80 530h1v1h-1zM80 535h1v1h-1zM80 540h1v1h-1zM80 545h1v1h-1zM80 550h1v1h-1zM80 555h1v1h-1zM80 560h1v1h-1zM130 450h1v1h-1zM130 455h1v1h-1zM130 460h1v1h-1zM130 465h1v1h-1zM130 470h1v1h-1zM130 475h1v1h-1zM130 480h1v1h-1zM130 485h1v1h-1zM130 490h1v1h-1zM130 495h1v1h-1zM130 500h1v1h-1zM130 505h1v1h-1zM130 510h1v1h-1zM130 515h1v1h-1zM130 520h1v1h-1zM130 525h1v1h-1zM130 530h1v1h-1zM130 535h1v1h-1zM130 540h1v1h-1zM130 545h1v1h-1zM130 550h1v1h-1zM130 555h1v1h-1zM130 560h1v1h-1zM180 450h1v1h-1zM180 455h1v1h-1zM180 460h1v1h-1zM180 465h1v1h-1zM180 470h1v1h-1zM180 475h1v1h-1zM180 480h1v1h-1zM180 485h1v1h-1zM180 490h1v1h-1zM180 495h1v1h-1zM180 500h1v1h-1zM180 505h1v1h-1zM180 510h1v1h-1zM180 515h1v1h-1zM180 520h1v1h-1zM180 525h1v1h-1zM180 530h1v1h-1zM180 535h1v1h-1zM180 540h1v1h-1zM180 545h1v1h-1zM180 550h1v1h-1zM180 555h1v1h-1zM180 560h1v1h-1zM230 450h1v1h-1zM230 455h1v1h-1zM230 460h1v1h-1zM230 465h1v1h-1zM230 470h1v1h-1zM230 475h1v1h-1zM230 480h1v1h-1zM230 485h1v1h-1zM230 490h1v1h-1zM230 495h1v1h-1zM230 500h1v1h-1zM230 505h1v1h-1zM230 510h1v1h-1zM230 515h1v1h-1zM230 520h1v1h-1zM230 525h1v1h-1zM230 530h1v1h-1zM230 535h1v1h-1zM230 540h1v1h-1zM230 545h1v1h-1zM230 550h1v1h-1zM230 555h1v1h-1zM230 560h1v1h-1zM280 450h1v1h-1zM280 455h1v1h-1zM280 460h1v1h-1zM280 465h1v1h-1zM280 470h1v1h-1zM280 475h1v1h-1zM280 480h1v1h-1zM280 485h1v1h-1zM280 490h1v1h-1zM280 495h1v1h-1zM280 500h1v1h-1zM280 505h1v1h-1zM280 510h1v1h-1zM280 515h1v1h-1zM280 520h1v1h-1zM280 525h1v1h-1zM280 530h1v1h-1zM280 535h1v1h-1zM280 540h1v1h-1zM280 545h1v1h-1zM280 550h1v1h-1zM280 555h1v1h-1zM280 560h1v1h-1zM330 450h1v1h-1zM330 455h1v1h-1zM330 460h1v1h-1zM330 465h1v1h-1zM330 470h1v1h-1zM330 475h1v1h-1zM330 480h1v1h-1zM330 485h1v1h-1zM330 490h1v1h-1zM330 495h1v1h-1zM330 500h1v1h-1zM330 505h1v1h-1zM330 510h1v1h-1zM330 515h1v1h-1zM330 520h1v1h-1zM330 525h1v1h-1zM330 530h1v1h-1zM330 535h1v1h-1zM330 540h1v1h-1zM330 545h1v1h-1zM330 550h1v1h-1zM330 555h1v1h-1zM330 560h1v1h-1zM380 450h1v1h-1zM380 455h1v1h-1zM380 460h1v1h-1zM380 465h1v1h-1zM380 470h1v1h-1zM380 475h1v1h-1zM380 480h1v1h-1zM380 485h1v1h-1zM380 490h1v1h-1zM380 495h1v1h-1zM380 500h1v1h-1zM380 505h1v1h-1zM380 510h1v1h-1zM380 515h1v1h-1zM380 520h1v1h-1zM380 525h1v1h-1zM380 530h1v1h-1zM380 535h1v1h-1zM380 540h1v1h-1zM380 545h1v1h-1zM380 550h1v1h-1zM380 555h1v1h-1zM380 560h1v1h-1zM430 450h1v1h-1zM430 455h1v1h-1zM430 460h1v1h-1zM430 465h1v1h-1zM430 470h1v1h-1zM430 475h1v1h-1zM430 480h1v1h-1zM430 485h1v1h-1zM430 490h1v1h-1zM430 495h1v1h-1zM430 500h1v1h-1zM430 505h1v1h-1zM430 510h1v1h-1zM430 515h1v1h-1zM430 520h1v1h-1zM430 525h1v1h-1zM430 530h1v1h-1zM430 535h1v1h-1zM430 540h1v1h-1zM430 545h1v1h-1zM430 550h1v1h-1zM430 555h1v1h-1zM430 560h1v1h-1zM480 450h1v1h-1zM480 455h1v1h-1zM480 460h1v1h-1zM480 465h1v1h-1zM480 470h1v1h-1zM480 475h1v1h-1zM480 480h1v1h-1zM480 485h1v1h-1zM480 490h1v1h-1zM480 495h1v1h-1zM480 500h1v1h-1zM480 505h1v1h-1zM480 510h1v1h-1zM480 515h1v1h-1zM480 520h1v1h-1zM480 525h1v1h-1zM480 530h1v1h-1zM480 535h1v1h-1zM480 540h1v1h-1zM480 545h1v1h-1zM480 550h1v1h-1zM480 555h1v1h-1zM480 560h1v1h-1zM530 450h1v1h-1zM530 455h1v1h-1zM530 460h1v1h-1zM530 465h1v1h-1zM530 470h1v1h-1zM530 475h1v1h-1zM530 480h1v1h-1zM530 485h1v1h-1zM530 490h1v1h-1zM530 495h1v1h-1zM530 500h1v1h-1zM530 505h1v1h-1zM530 510h1v1h-1zM530 515h1v1h-1zM530 520h1v1h-1zM530 525h1v1h-1zM530 530h1v1h-1zM530 535h1v1h-1zM530 540h1v1h-1zM530 545h1v1h-1zM530 550h1v1h-1zM530 555h1v1h-1zM530 560h1v1h-1zM580 450h1v1h-1zM580 455h1v1h-1zM580 460h1v1h-1zM580 465h1v1h-1zM580 470h1v1h-1zM580 475h1v1h-1zM580 480h1v1h-1zM580 485h1v1h-1zM580 490h1v1h-1zM580 495h1v1h-1zM580 500h1v1h-1zM580 505h1v1h-1zM580 510h1v1h-1zM580 515h1v1h-1zM580 520h1v1h-1zM580 525h1v1h-1zM580 530h1v1h-1zM580 535h1v1h-1zM580 540h1v1h-1zM580 545h1v1h-1zM580 550h1v1h-1zM580 555h1v1h-1zM580 560h1v1h-1z"/>
<path d="M24 505.5H30M24.5 505V511" stroke="#b0a0d8" fill="none"/>
<path d="M20.5 511H28.5L24.5 516z" fill="#b0a0d8"/>
<path fill="none" stroke="#ff0000" stroke-width="1" d="M30 139.5H630"/>
<path fill="none" stroke="#ff0000" stroke-width="1" stroke-linecap="square" d="M32.5 139.5V124.5H33.5V109V124.5H34.5V139.5M36.5 139.5V124.5H37.5V109V124.5H38.5V139.5M40.5 139.5V128.5H41.5V120V128.5H42.5V139.5M43.5 139.5V124.5H44.5V109V124.5H45.5V139.5M47.5 139.5V124.5H48.5V109V124.5H49.5V139.5M51.5 139.5V124.5H52.5V109V124.5H53.5V139.5M54.5 139.5V124.5H55.5V109V124.5H56.5V139.5M58.5 139.5V124.5H59.5V109V124.5H60.5V139.5M62.5 139.5V124.5H63.5V109V124.5H64.5V139.5M69.5 139.5V124.5H70.5V109V124.5H71.5V139.5M73.5 139.5V124.5H74.5V109V124.5H75.5V139.5M80.5 139.5V124.5H81.5V109V124.5H82.5V139.5M213.5 139.5V124.5H214.5V109V124.5H215.5V139.5M217.5 139.5V124.5H218.5V109V124.5H219.5V139.5M228.5 139.5V124.5H229.5V109V124.5H230.5V139.5M232.5 139.5V124.5H233.5V109V124.5H234.5V139.5M236.5 139.5V124.5H237.5V109V124.5H238.5V139.5M239.5 139.5V124.5H240.5V109V124.5H241.5V139.5M243.5 139.5V124.5H244.5V109V124.5H245.5V139.5M247.5 139.5V124.5H248.5V109V124.5H249.5V139.5M250.5 139.5V124.5H251.5V109V124.5H252.5V139.5M254.5 139.5V124.5H255.5V109V124.5H256.5V139.5M258.5 139.5V124.5H259.5V109V124.5H260.5V139.5M265.5 139.5V124.5H266.5V109V124.5H267.5V139.5M269.5 139.5V124.5H270.5V109V124.5H271.5V139.5M273.5 139.5V124.5H274.5V109V124.5H275.5V139.5M284.5 139.5V124.5H285.5V109V124.5H286.5V139.5M406.5 139.5V124.5H407.5V109V124.5H408.5V139.5M413.5 139.5V124.5H414.5V109V124.5H415.5V139.5M417.5 139.5V124.5H418.5V109V124.5H419.5V139.5M424.5 139.5V124.5H425.5V109V124.5H426.5V139.5M428.5 139.5V124.5H429.5V109V124.5H430.5V139.5M432.5 139.5V124.5H433.5V109V124.5H434.5V139.5M435.5 139.5V124.5H436.5V109V124.5H437.5V139.5M439.5 139.5V124.5H440.5V109V124.5H441.5V139.5M443.5 139.5V124.5H444.5V109V124.5H445.5V139.5M446.5 139.5V124.5H447.5V109V124.5H448.5V139.5M450.5 139.5V124.5H451.5V109V124.5H452.5V139.5M454.5 139.5V124.5H455.5V109V124.5H456.5V139.5M461.5 139.5V124.5H462.5V109V124.5H463.5V139.5M465.5 139.5V124.5H466.5V109V124.5H467.5V139.5M472.5 139.5V124.5H473.5V109V124.5H474.5V139.5M476.5 139.5V124.5H477.5V109V124.5H478.5V139.5M483.5 139.5V124.5H484.5V109V124.5H485.5V139.5M617.5 139.5V124.5H618.5V109V124.5H619.5V139.5M624.5 139.5V124.5H625.5V109V124.5H626.5V139.5M628.5 139.5V124.5H629.5V109V124.5H630.5V139.5M91.5 139.5V136.5H92.5V133V136.5H93.5V139.5M202.5 139.5V134.5H203.5V130V134.5H204.5V139.5M302.5 139.5V138.5H303.5V136V138.5H304.5V139.5M374.5 139.5V138.5H375.5V136V138.5H376.5V139.5M513.5 139.5V138.5H514.5V136V138.5H515.5V139.5M102.5 139.5V154.5H103.5V170V154.5H104.5V139.5M121.5 139.5V154.5H122.5V170V154.5H123.5V139.5M128.5 139.5V154.5H129.5V170V154.5H130.5V139.5M132.5 139.5V154.5H133.5V170V154.5H134.5V139.5M136.5 139.5V154.5H137.5V170V154.5H138.5V139.5M139.5 139.5V154.5H140.5V170V154.5H141.5V139.5M143.5 139.5V154.5H144.5V170V154.5H145.5V139.5M147.5 139.5V154.5H148.5V170V154.5H149.5V139.5M150.5 139.5V154.5H151.5V166V154.5H152.5V139.5M154.5 139.5V154.5H155.5V170V154.5H156.5V139.5M158.5 139.5V154.5H159.5V170V154.5H160.5V139.5M162.5 139.5V154.5H163.5V169V154.5H164.5V139.5M169.5 139.5V154.5H170.5V170V154.5H171.5V139.5M173.5 139.5V154.5H174.5V170V154.5H175.5V139.5M180.5 139.5V154.5H181.5V170V154.5H182.5V139.5M184.5 139.5V154.5H185.5V170V154.5H186.5V139.5M306.5 139.5V151.5H307.5V166V151.5H308.5V139.5M313.5 139.5V154.5H314.5V170V154.5H315.5V139.5M317.5 139.5V154.5H318.5V170V154.5H319.5V139.5M324.5 139.5V154.5H325.5V170V154.5H326.5V139.5M328.5 139.5V154.5H329.5V170V154.5H330.5V139.5M332.5 139.5V154.5H333.5V170V154.5H334.5V139.5M335.5 139.5V154.5H336.5V170V154.5H337.5V139.5M339.5 139.5V154.5H340.5V170V154.5H341.5V139.5M343.5 139.5V154.5H344.5V170V154.5H345.5V139.5M347.5 139.5V154.5H348.5V170V154.5H349.5V139.5M350.5 139.5V154.5H351.5V170V154.5H352.5V139.5M354.5 139.5V154.5H355.5V170V154.5H356.5V139.5M358.5 139.5V154.5H359.5V170V154.5H360.5V139.5M361.5 139.5V154.5H362.5V170V154.5H363.5V139.5M365.5 139.5V154.5H366.5V170V154.5H367.5V139.5M369.5 139.5V142.5H370.5V146V142.5H371.5V139.5M372.5 139.5V154.5H373.5V170V154.5H374.5V139.5M384.5 139.5V145.5H385.5V153V145.5H386.5V139.5M395.5 139.5V154.5H396.5V170V154.5H397.5V139.5M506.5 139.5V154.5H507.5V170V154.5H508.5V139.5M517.5 139.5V154.5H518.5V170V154.5H519.5V139.5M524.5 139.5V154.5H525.5V170V154.5H526.5V139.5M528.5 139.5V154.5H529.5V170V154.5H530.5V139.5M535.5 139.5V154.5H536.5V170V154.5H537.5V139.5M539.5 139.5V154.5H540.5V170V154.5H541.5V139.5M543.5 139.5V154.5H544.5V170V154.5H545.5V139.5M546.5 139.5V154.5H547.5V170V154.5H548.5V139.5M550.5 139.5V154.5H551.5V170V154.5H552.5V139.5M554.5 139.5V154.5H555.5V170V154.5H556.5V139.5M557.5 139.5V154.5H558.5V170V154.5H559.5V139.5M561.5 139.5V154.5H562.5V170V154.5H563.5V139.5M565.5 139.5V154.5H566.5V170V154.5H567.5V139.5M572.5 139.5V154.5H573.5V170V154.5H574.5V139.5M576.5 139.5V154.5H577.5V170V154.5H578.5V139.5M583.5 139.5V154.5H584.5V170V154.5H585.5V139.5M587.5 139.5V143.5H588.5V150V143.5H589.5V139.5M594.5 139.5V154.5H595.5V170V154.5H596.5V139.5M605.5 139.5V154.5H606.5V170V154.5H607.5V139.5"/>
<path fill="none" stroke="#ff0090" stroke-width="1" d="M30 137.5H47M46.5 137.5V138.5M47 138.5H84M83.5 138.5V140.5M84 140.5H104M103.5 140.5V141.5M104 141.5H153M152.5 141.5V140.5M153 140.5H175M174.5 140.5V139.5M175 139.5H183M182.5 139.5V138.5M183 138.5H210M209.5 138.5V137.5M210 137.5H257M256.5 137.5V138.5M257 138.5H280M279.5 138.5V139.5M280 139.5H292M291.5 139.5V140.5M292 140.5H310M309.5 140.5V141.5M310 141.5H354M353.5 141.5V140.5M354 140.5H376M375.5 140.5V139.5M376 139.5H410M409.5 139.5V137.5M410 137.5H455M454.5 137.5V138.5M455 138.5H483M482.5 138.5V139.5M483 139.5H492M491.5 139.5V140.5M492 140.5H514M513.5 140.5V141.5M514 141.5H563M562.5 141.5V140.5M563 140.5H585M584.5 140.5V139.5M585 139.5H590M589.5 139.5V138.5M590 138.5H620M619.5 138.5V137.5M620 137.5H630"/>
<path fill="none" stroke="#00ff00" stroke-width="1" d="M30 261.5H630"/>
<path fill="none" stroke="#00ff00" stroke-width="1" stroke-linecap="square" d="M128.5 261.5V246.5H129.5V231V246.5H130.5V261.5M139.5 261.5V246.5H140.5V231V246.5H141.5V261.5M143.5 261.5V246.5H144.5V231V246.5H145.5V261.5M147.5 261.5V246.5H148.5V231V246.5H149.5V261.5M154.5 261.5V246.5H155.5V231V246.5H156.5V261.5M158.5 261.5V246.5H159.5V231V246.5H160.5V261.5M162.5 261.5V246.5H163.5V231V246.5H164.5V261.5M165.5 261.5V246.5H166.5V231V246.5H167.5V261.5M169.5 261.5V246.5H170.5V231V246.5H171.5V261.5M173.5 261.5V246.5H174.5V231V246.5H175.5V261.5M176.5 261.5V246.5H177.5V231V246.5H178.5V261.5M180.5 261.5V246.5H181.5V231V246.5H182.5V261.5M184.5 261.5V246.5H185.5V231V246.5H186.5V261.5M191.5 261.5V248.5H192.5V236V248.5H193.5V261.5M199.5 261.5V246.5H200.5V231V246.5H201.5V261.5M210.5 261.5V246.5H211.5V231V246.5H212.5V261.5M332.5 261.5V246.5H333.5V231V246.5H334.5V261.5M339.5 261.5V246.5H340.5V231V246.5H341.5V261.5M343.5 261.5V246.5H344.5V231V246.5H345.5V261.5M350.5 261.5V246.5H351.5V231V246.5H352.5V261.5M354.5 261.5V246.5H355.5V231V246.5H356.5V261.5M361.5 261.5V246.5H362.5V231V246.5H363.5V261.5M365.5 261.5V246.5H366.5V231V246.5H367.5V261.5M369.5 261.5V246.5H370.5V231V246.5H371.5V261.5M372.5 261.5V246.5H373.5V231V246.5H374.5V261.5M376.5 261.5V246.5H377.5V231V246.5H378.5V261.5M380.5 261.5V246.5H381.5V231V246.5H382.5V261.5M387.5 261.5V246.5H388.5V231V246.5H389.5V261.5M391.5 261.5V246.5H392.5V231V246.5H393.5V261.5M398.5 261.5V246.5H399.5V231V246.5H400.5V261.5M402.5 261.5V248.5H403.5V235V248.5H404.5V261.5M409.5 261.5V246.5H410.5V231V246.5H411.5V261.5M531.5 261.5V250.5H532.5V239V250.5H533.5V261.5M543.5 261.5V246.5H544.5V231V246.5H545.5V261.5M550.5 261.5V246.5H551.5V231V246.5H552.5V261.5M554.5 261.5V246.5H555.5V231V246.5H556.5V261.5M561.5 261.5V246.5H562.5V231V246.5H563.5V261.5M565.5 261.5V246.5H566.5V231V246.5H567.5V261.5M568.5 261.5V249.5H569.5V238V249.5H570.5V261.5M572.5 261.5V246.5H573.5V231V246.5H574.5V261.5M576.5 261.5V246.5H577.5V232V246.5H578.5V261.5M580.5 261.5V246.5H581.5V231V246.5H582.5V261.5M583.5 261.5V246.5H584.5V231V246.5H585.5V261.5M587.5 261.5V246.5H588.5V231V246.5H589.5V261.5M591.5 261.5V246.5H592.5V231V246.5H593.5V261.5M598.5 261.5V246.5H599.5V231V246.5H600.5V261.5M602.5 261.5V246.5H603.5V231V246.5H604.5V261.5M609.5 261.5V246.5H610.5V231V246.5H611.5V261.5M613.5 261.5V247.5H614.5V234V247.5H615.5V261.5M620.5 261.5V246.5H621.5V231V246.5H622.5V261.5M43.5 261.5V276.5H44.5V292V276.5H45.5V261.5M47.5 261.5V276.5H48.5V292V276.5H49.5V261.5M51.5 261.5V276.5H52.5V292V276.5H53.5V261.5M54.5 261.5V276.5H55.5V292V276.5H56.5V261.5M58.5 261.5V276.5H59.5V292V276.5H60.5V261.5M62.5 261.5V276.5H63.5V292V276.5H64.5V261.5M65.5 261.5V276.5H66.5V292V276.5H67.5V261.5M69.5 261.5V276.5H70.5V292V276.5H71.5V261.5M73.5 261.5V276.5H74.5V292V276.5H75.5V261.5M80.5 261.5V276.5H81.5V292V276.5H82.5V261.5M84.5 261.5V276.5H85.5V292V276.5H86.5V261.5M88.5 261.5V276.5H89.5V292V276.5H90.5V261.5M95.5 261.5V272.5H96.5V286V272.5H97.5V261.5M99.5 261.5V276.5H100.5V292V276.5H101.5V261.5M232.5 261.5V276.5H233.5V292V276.5H234.5V261.5M239.5 261.5V276.5H240.5V292V276.5H241.5V261.5M243.5 261.5V276.5H244.5V292V276.5H245.5V261.5M250.5 261.5V276.5H251.5V292V276.5H252.5V261.5M254.5 261.5V276.5H255.5V292V276.5H256.5V261.5M258.5 261.5V276.5H259.5V292V276.5H260.5V261.5M261.5 261.5V276.5H262.5V292V276.5H263.5V261.5M265.5 261.5V276.5H266.5V292V276.5H267.5V261.5M269.5 261.5V276.5H270.5V292V276.5H271.5V261.5M273.5 261.5V274.5H274.5V288V274.5H275.5V261.5M276.5 261.5V276.5H277.5V292V276.5H278.5V261.5M280.5 261.5V276.5H281.5V292V276.5H282.5V261.5M284.5 261.5V276.5H285.5V292V276.5H286.5V261.5M287.5 261.5V276.5H288.5V292V276.5H289.5V261.5M291.5 261.5V276.5H292.5V292V276.5H293.5V261.5M298.5 261.5V276.5H299.5V292V276.5H300.5V261.5M310.5 261.5V276.5H311.5V292V276.5H312.5V261.5M321.5 261.5V274.5H322.5V290V274.5H323.5V261.5M432.5 261.5V276.5H433.5V292V276.5H434.5V261.5M439.5 261.5V276.5H440.5V292V276.5H441.5V261.5M443.5 261.5V276.5H444.5V292V276.5H445.5V261.5M450.5 261.5V276.5H451.5V292V276.5H452.5V261.5M454.5 261.5V276.5H455.5V292V276.5H456.5V261.5M461.5 261.5V276.5H462.5V292V276.5H463.5V261.5M465.5 261.5V276.5H466.5V292V276.5H467.5V261.5M469.5 261.5V276.5H470.5V292V276.5H471.5V261.5M472.5 261.5V276.5H473.5V292V276.5H474.5V261.5M476.5 261.5V276.5H477.5V292V276.5H478.5V261.5M480.5 261.5V276.5H481.5V292V276.5H482.5V261.5M483.5 261.5V276.5H484.5V292V276.5H485.5V261.5M487.5 261.5V276.5H488.5V292V276.5H489.5V261.5M491.5 261.5V276.5H492.5V292V276.5H493.5V261.5M498.5 261.5V276.5H499.5V292V276.5H500.5V261.5M502.5 261.5V276.5H503.5V292V276.5H504.5V261.5M509.5 261.5V276.5H510.5V292V276.5H511.5V261.5M520.5 261.5V276.5H521.5V292V276.5H522.5V261.5"/>
<path fill="none" stroke="#00ff80" stroke-width="1" d="M30 261.5H38M37.5 261.5V262.5M38 262.5H60M59.5 262.5V263.5M60 263.5H108M107.5 263.5V261.5M108 261.5H163M162.5 261.5V260.5M163 260.5H210M209.5 260.5V261.5M210 261.5H245M244.5 261.5V262.5M245 262.5H290M289.5 262.5V263.5M290 263.5H315M314.5 263.5V262.5M315 262.5H330M329.5 262.5V261.5M330 261.5H345M344.5 261.5V260.5M345 260.5H373M372.5 260.5V259.5M373 259.5H412M411.5 259.5V261.5M412 261.5H470M469.5 261.5V262.5M470 262.5H490M489.5 262.5V263.5M490 263.5H515M514.5 263.5V261.5M515 261.5H570M569.5 261.5V259.5M570 259.5H615M614.5 259.5V261.5M615 261.5H630"/>
<path fill="none" stroke="#ff5500" stroke-width="1" d="M30 383.5H630"/>
<path fill="none" stroke="#ff5500" stroke-width="1" stroke-linecap="square" d="M54.5 383.5V368.5H55.5V353V368.5H56.5V383.5M65.5 383.5V368.5H66.5V352V368.5H67.5V383.5M80.5 383.5V368.5H81.5V353V368.5H82.5V383.5M84.5 383.5V368.5H85.5V353V368.5H86.5V383.5M88.5 383.5V368.5H89.5V353V368.5H90.5V383.5M91.5 383.5V368.5H92.5V353V368.5H93.5V383.5M95.5 383.5V368.5H96.5V356V368.5H97.5V383.5M99.5 383.5V368.5H100.5V353V368.5H101.5V383.5M102.5 383.5V368.5H103.5V353V368.5H104.5V383.5M106.5 383.5V368.5H107.5V354V368.5H108.5V383.5M110.5 383.5V368.5H111.5V353V368.5H112.5V383.5M117.5 383.5V368.5H118.5V353V368.5H119.5V383.5M121.5 383.5V368.5H122.5V353V368.5H123.5V383.5M125.5 383.5V368.5H126.5V353V368.5H127.5V383.5M132.5 383.5V368.5H133.5V354V368.5H134.5V383.5M136.5 383.5V368.5H137.5V353V368.5H138.5V383.5M265.5 383.5V368.5H266.5V353V368.5H267.5V383.5M269.5 383.5V368.5H270.5V353V368.5H271.5V383.5M276.5 383.5V368.5H277.5V353V368.5H278.5V383.5M280.5 383.5V368.5H281.5V353V368.5H282.5V383.5M287.5 383.5V368.5H288.5V352V368.5H289.5V383.5M291.5 383.5V368.5H292.5V353V368.5H293.5V383.5M295.5 383.5V371.5H296.5V359V371.5H297.5V383.5M298.5 383.5V368.5H299.5V353V368.5H300.5V383.5M302.5 383.5V368.5H303.5V353V368.5H304.5V383.5M306.5 383.5V368.5H307.5V353V368.5H308.5V383.5M310.5 383.5V368.5H311.5V353V368.5H312.5V383.5M313.5 383.5V368.5H314.5V353V368.5H315.5V383.5M317.5 383.5V368.5H318.5V353V368.5H319.5V383.5M321.5 383.5V363.5H322.5V344V363.5H323.5V383.5M324.5 383.5V368.5H325.5V353V368.5H326.5V383.5M328.5 383.5V368.5H329.5V353V368.5H330.5V383.5M335.5 383.5V368.5H336.5V354V368.5H337.5V383.5M347.5 383.5V371.5H348.5V359V371.5H349.5V383.5M358.5 383.5V368.5H359.5V353V368.5H360.5V383.5M469.5 383.5V368.5H470.5V353V368.5H471.5V383.5M476.5 383.5V368.5H477.5V353V368.5H478.5V383.5M480.5 383.5V368.5H481.5V353V368.5H482.5V383.5M487.5 383.5V368.5H488.5V353V368.5H489.5V383.5M491.5 383.5V368.5H492.5V353V368.5H493.5V383.5M498.5 383.5V368.5H499.5V353V368.5H500.5V383.5M502.5 383.5V368.5H503.5V353V368.5H504.5V383.5M506.5 383.5V368.5H507.5V353V368.5H508.5V383.5M509.5 383.5V368.5H510.5V353V368.5H511.5V383.5M513.5 383.5V368.5H514.5V353V368.5H515.5V383.5M517.5 383.5V368.5H518.5V353V368.5H519.5V383.5M520.5 383.5V368.5H521.5V353V368.5H522.5V383.5M524.5 383.5V368.5H525.5V353V368.5H526.5V383.5M528.5 383.5V368.5H529.5V353V368.5H530.5V383.5M535.5 383.5V368.5H536.5V353V368.5H537.5V383.5M539.5 383.5V368.5H540.5V353V368.5H541.5V383.5M546.5 383.5V368.5H547.5V353V368.5H548.5V383.5M557.5 383.5V370.5H558.5V358V370.5H559.5V383.5M73.5 383.5V380.5H74.5V377V380.5H75.5V383.5M259.5 383.5V380.5H260.5V378V380.5H261.5V383.5M261.5 383.5V380.5H262.5V378V380.5H263.5V383.5M384.5 383.5V380.5H385.5V378V380.5H386.5V383.5M533.5 383.5V381.5H534.5V379V381.5H535.5V383.5M32.5 383.5V398.5H33.5V414V398.5H34.5V383.5M36.5 383.5V398.5H37.5V416V398.5H38.5V383.5M40.5 383.5V387.5H41.5V390V387.5H42.5V383.5M165.5 383.5V398.5H166.5V414V398.5H167.5V383.5M169.5 383.5V398.5H170.5V414V398.5H171.5V383.5M176.5 383.5V398.5H177.5V416V398.5H178.5V383.5M180.5 383.5V398.5H181.5V414V398.5H182.5V383.5M184.5 383.5V398.5H185.5V414V398.5H186.5V383.5M191.5 383.5V404.5H192.5V425V404.5H193.5V383.5M195.5 383.5V395.5H196.5V408V395.5H197.5V383.5M199.5 383.5V398.5H200.5V414V398.5H201.5V383.5M202.5 383.5V398.5H203.5V414V398.5H204.5V383.5M206.5 383.5V398.5H207.5V414V398.5H208.5V383.5M210.5 383.5V398.5H211.5V414V398.5H212.5V383.5M213.5 383.5V398.5H214.5V414V398.5H215.5V383.5M217.5 383.5V398.5H218.5V414V398.5H219.5V383.5M221.5 383.5V398.5H222.5V414V398.5H223.5V383.5M224.5 383.5V394.5H225.5V406V394.5H226.5V383.5M227.5 383.5V398.5H228.5V414V398.5H229.5V383.5M236.5 383.5V398.5H237.5V414V398.5H238.5V383.5M247.5 383.5V398.5H248.5V416V398.5H249.5V383.5M369.5 383.5V398.5H370.5V414V398.5H371.5V383.5M376.5 383.5V398.5H377.5V414V398.5H378.5V383.5M380.5 383.5V398.5H381.5V414V398.5H382.5V383.5M387.5 383.5V398.5H388.5V414V398.5H389.5V383.5M391.5 383.5V398.5H392.5V414V398.5H393.5V383.5M395.5 383.5V398.5H396.5V416V398.5H397.5V383.5M398.5 383.5V398.5H399.5V414V398.5H400.5V383.5M402.5 383.5V403.5H403.5V425V403.5H404.5V383.5M406.5 383.5V398.5H407.5V414V398.5H408.5V383.5M409.5 383.5V398.5H410.5V414V398.5H411.5V383.5M413.5 383.5V398.5H414.5V414V398.5H415.5V383.5M417.5 383.5V398.5H418.5V414V398.5H419.5V383.5M424.5 383.5V398.5H425.5V414V398.5H426.5V383.5M428.5 383.5V398.5H429.5V414V398.5H430.5V383.5M435.5 383.5V398.5H436.5V414V398.5H437.5V383.5M446.5 383.5V398.5H447.5V414V398.5H448.5V383.5M568.5 383.5V394.5H569.5V408V394.5H570.5V383.5M580.5 383.5V398.5H581.5V414V398.5H582.5V383.5M587.5 383.5V398.5H588.5V414V398.5H589.5V383.5M591.5 383.5V398.5H592.5V414V398.5H593.5V383.5M594.5 383.5V398.5H595.5V414V398.5H596.5V383.5M598.5 383.5V398.5H599.5V414V398.5H600.5V383.5M602.5 383.5V398.5H603.5V414V398.5H604.5V383.5M605.5 383.5V393.5H606.5V404V393.5H607.5V383.5M609.5 383.5V398.5H610.5V414V398.5H611.5V383.5M613.5 383.5V404.5H614.5V425V404.5H615.5V383.5M617.5 383.5V398.5H618.5V414V398.5H619.5V383.5M620.5 383.5V398.5H621.5V414V398.5H622.5V383.5M624.5 383.5V398.5H625.5V414V398.5H626.5V383.5M628.5 383.5V398.5H629.5V414V398.5H630.5V383.5M66.5 383.5V384.5H67.5V386V384.5H68.5V383.5M273.5 383.5V385.5H274.5V388V385.5H275.5V383.5M458.5 383.5V384.5H459.5V386V384.5H460.5V383.5M531.5 383.5V389.5H532.5V396V389.5H533.5V383.5"/>
<path fill="none" stroke="#0000ff" stroke-width="1" d="M30 381.5H71M70.5 381.5V382.5M71 382.5H97M96.5 382.5V384.5M97 384.5H126M125.5 384.5V385.5M126 385.5H176M175.5 385.5V384.5M176 384.5H205M204.5 384.5V383.5M205 383.5H232M231.5 383.5V382.5M232 382.5H277M276.5 382.5V383.5M277 383.5H303M302.5 383.5V384.5M303 384.5H315M314.5 384.5V385.5M315 385.5H383M382.5 385.5V384.5M383 384.5H405M404.5 384.5V383.5M405 383.5H430M429.5 383.5V382.5M430 382.5H436M435.5 382.5V381.5M436 381.5H482M481.5 381.5V382.5M482 382.5H505M504.5 382.5V383.5M505 383.5H514M513.5 383.5V384.5M514 384.5H536M535.5 384.5V385.5M536 385.5H585M584.5 385.5V384.5M585 384.5H605M604.5 384.5V383.5M605 383.5H614M613.5 383.5V382.5M614 382.5H630"/>
<path fill="none" stroke="#ffff00" d="M30 513.5h1M31.5 513.5V514.5M31 514.5h1M32.5 514.5V515.5M32 515.5h1M33 515.5h1M34.5 515.5V516.5M34 516.5h1M35.5 516.5V517.5M35 517.5h1M36.5 517.5V518.5M36 518.5h1M37.5 518.5V519.5M37 519.5h1M38 519.5h1M39.5 519.5V520.5M39 520.5h1M40.5 520.5V521.5M40 521.5h1M41.5 521.5V522.5M41 522.5h1M42 522.5h1M43.5 522.5V523.5M43 523.5h1M44.5 523.5V524.5M44 524.5h1M45 524.5h1M46.5 524.5V525.5M46 525.5h1M47.5 525.5V526.5M47 526.5h1M48.5 526.5V527.5M48 527.5h1M49 527.5h1M50.5 527.5V528.5M50 528.5h1M51 528.5h1M52.5 528.5V529.5M52 529.5h1M53.5 529.5V530.5M53 530.5h1M54 530.5h1M55 530.5h1M56.5 530.5V531.5M56 531.5h1M57.5 531.5V532.5M57 532.5h1M58 532.5h1M59 532.5h1M60.5 532.5V533.5M60 533.5h1M61 533.5h1M62 533.5h1M63.5 533.5V534.5M63 534.5h1M64 534.5h1M65 534.5h1M66 534.5h1M67 534.5h1M68.5 534.5V535.5M68 535.5h1M69 535.5h1M70 535.5h1M71 535.5h1M72 535.5h1M73 535.5h1M74.5 535.5V536.5M74 536.5h1M75 536.5h1M76 536.5h1M77 536.5h1M78 536.5h1M79.5 536.5V535.5M79 535.5h1M80 535.5h1M81.5 535.5V534.5M81 534.5h1M82 534.5h1M83.5 534.5V533.5M83 533.5h1M84 533.5h1M85.5 533.5V532.5M85 532.5h1M86 532.5h1M87.5 532.5V531.5M87 531.5h1M88 531.5h1M89.5 531.5V530.5M89 530.5h1M90 530.5h1M91 530.5h1M92.5 530.5V529.5M92 529.5h1M93 529.5h1M94.5 529.5V528.5M94 528.5h1M95 528.5h1M96 528.5h1M97.5 528.5V527.5M97 527.5h1M98 527.5h1M99.5 527.5V526.5M99 526.5h1M100 526.5h1M101.5 526.5V525.5M101 525.5h1M102.5 525.5V524.5M102 524.5h1M103 524.5h1M104.5 524.5V523.5M104 523.5h1M105.5 523.5V522.5M105 522.5h1M106.5 522.5V521.5M106 521.5h1M107.5 521.5V520.5M107 520.5h1M108 520.5h1M109.5 520.5V519.5M109 519.5h1M110.5 519.5V518.5M110 518.5h1M111.5 518.5V517.5M111 517.5h1M112.5 517.5V516.5M112 516.5h1M113.5 516.5V515.5M113 515.5h1M114.5 515.5V514.5M114 514.5h1M115.5 514.5V512.5M115 512.5h1M116.5 512.5V511.5M116 511.5h1M117.5 511.5V510.5M117 510.5h1M118.5 510.5V509.5M118 509.5h1M119.5 509.5V508.5M119 508.5h1M120.5 508.5V507.5M120 507.5h1M121.5 507.5V506.5M121 506.5h1M122.5 506.5V505.5M122 505.5h1M123.5 505.5V504.5M123 504.5h1M124.5 504.5V503.5M124 503.5h1M125.5 503.5V502.5M125 502.5h1M126.5 502.5V501.5M126 501.5h1M127.5 501.5V500.5M127 500.5h1M128.5 500.5V499.5M128 499.5h1M129.5 499.5V498.5M129 498.5h1M130.5 498.5V497.5M130 497.5h1M131.5 497.5V496.5M131 496.5h1M132 496.5h1M133.5 496.5V495.5M133 495.5h1M134.5 495.5V494.5M134 494.5h1M135 494.5h1M136.5 494.5V493.5M136 493.5h1M137.5 493.5V492.5M137 492.5h1M138.5 492.5V491.5M138 491.5h1M139 491.5h1M140.5 491.5V490.5M140 490.5h1M141.5 490.5V489.5M141 489.5h1M142 489.5h1M143.5 489.5V488.5M143 488.5h1M144 488.5h1M145.5 488.5V487.5M145 487.5h1M146.5 487.5V486.5M146 486.5h1M147 486.5h1M148.5 486.5V485.5M148 485.5h1M149 485.5h1M150.5 485.5V484.5M150 484.5h1M151.5 484.5V483.5M151 483.5h1M152 483.5h1M153.5 483.5V482.5M153 482.5h1M154 482.5h1M155.5 482.5V481.5M155 481.5h1M156.5 481.5V480.5M156 480.5h1M157 480.5h1M158.5 480.5V479.5M158 479.5h1M159 479.5h1M160.5 479.5V478.5M160 478.5h1M161 478.5h1M162 478.5h1M163.5 478.5V477.5M163 477.5h1M164 477.5h1M165 477.5h1M166 477.5h1M167 477.5h1M168.5 477.5V476.5M168 476.5h1M169 476.5h1M170 476.5h1M171 476.5h1M172 476.5h1M173 476.5h1M174 476.5h1M175 476.5h1M176.5 476.5V475.5M176 475.5h1M177 475.5h1M178 475.5h1M179 475.5h1M180 475.5h1M181 475.5h1M182.5 475.5V476.5M182 476.5h1M183 476.5h1M184 476.5h1M185 476.5h1M186.5 476.5V477.5M186 477.5h1M187 477.5h1M188 477.5h1M189.5 477.5V478.5M189 478.5h1M190 478.5h1M191 478.5h1M192.5 478.5V479.5M192 479.5h1M193.5 479.5V480.5M193 480.5h1M194 480.5h1M195 480.5h1M196.5 480.5V481.5M196 481.5h1M197.5 481.5V482.5M197 482.5h1M198 482.5h1M199 482.5h1M200.5 482.5V483.5M200 483.5h1M201.5 483.5V484.5M201 484.5h1M202 484.5h1M203.5 484.5V485.5M203 485.5h1M204.5 485.5V486.5M204 486.5h1M205 486.5h1M206.5 486.5V487.5M206 487.5h1M207.5 487.5V488.5M207 488.5h1M208.5 488.5V489.5M208 489.5h1M209 489.5h1M210.5 489.5V490.5M210 490.5h1M211.5 490.5V491.5M211 491.5h1M212.5 491.5V492.5M212 492.5h1M213 492.5h1M214.5 492.5V493.5M214 493.5h1M215.5 493.5V494.5M215 494.5h1M216.5 494.5V495.5M216 495.5h1M217.5 495.5V496.5M217 496.5h1M218 496.5h1M219.5 496.5V497.5M219 497.5h1M220.5 497.5V498.5M220 498.5h1M221.5 498.5V499.5M221 499.5h1M222.5 499.5V500.5M222 500.5h1M223.5 500.5V502.5M223 502.5h1M224.5 502.5V503.5M224 503.5h1M225.5 503.5V504.5M225 504.5h1M226.5 504.5V505.5M226 505.5h1M227.5 505.5V506.5M227 506.5h1M228.5 506.5V508.5M228 508.5h1M229.5 508.5V509.5M229 509.5h1M230.5 509.5V510.5M230 510.5h1M231.5 510.5V511.5M231 511.5h1M232 511.5h1M233.5 511.5V512.5M233 512.5h1M234.5 512.5V513.5M234 513.5h1M235.5 513.5V514.5M235 514.5h1M236 514.5h1M237.5 514.5V515.5M237 515.5h1M238.5 515.5V516.5M238 516.5h1M239 516.5h1M240.5 516.5V517.5M240 517.5h1M241.5 517.5V518.5M241 518.5h1M242.5 518.5V519.5M242 519.5h1M243.5 519.5V520.5M243 520.5h1M244.5 520.5V521.5M244 521.5h1M245.5 521.5V522.5M245 522.5h1M246 522.5h1M247.5 522.5V523.5M247 523.5h1M248.5 523.5V524.5M248 524.5h1M249.5 524.5V525.5M249 525.5h1M250.5 525.5V526.5M250 526.5h1M251 526.5h1M252.5 526.5V527.5M252 527.5h1M253.5 527.5V528.5M253 528.5h1M254 528.5h1M255 528.5h1M256.5 528.5V529.5M256 529.5h1M257.5 529.5V530.5M257 530.5h1M258 530.5h1M259 530.5h1M260.5 530.5V531.5M260 531.5h1M261 531.5h1M262.5 531.5V532.5M262 532.5h1M263 532.5h1M264.5 532.5V533.5M264 533.5h1M265 533.5h1M266 533.5h1M267.5 533.5V534.5M267 534.5h1M268 534.5h1M269.5 534.5V535.5M269 535.5h1M270 535.5h1M271 535.5h1M272 535.5h1M273 535.5h1M274 535.5h1M275 535.5h1M276.5 535.5V536.5M276 536.5h1M277 536.5h1M278 536.5h1M279 536.5h1M280 536.5h1M281 536.5h1M282 536.5h1M283 536.5h1M284.5 536.5V535.5M284 535.5h1M285 535.5h1M286.5 535.5V534.5M286 534.5h1M287 534.5h1M288 534.5h1M289.5 534.5V533.5M289 533.5h1M290 533.5h1M291.5 533.5V532.5M291 532.5h1M292 532.5h1M293 532.5h1M294.5 532.5V531.5M294 531.5h1M295.5 531.5V530.5M295 530.5h1M296 530.5h1M297 530.5h1M298.5 530.5V529.5M298 529.5h1M299.5 529.5V528.5M299 528.5h1M300 528.5h1M301.5 528.5V527.5M301 527.5h1M302 527.5h1M303.5 527.5V526.5M303 526.5h1M304 526.5h1M305.5 526.5V525.5M305 525.5h1M306.5 525.5V524.5M306 524.5h1M307 524.5h1M308.5 524.5V523.5M308 523.5h1M309 523.5h1M310.5 523.5V522.5M310 522.5h1M311.5 522.5V521.5M311 521.5h1M312.5 521.5V520.5M312 520.5h1M313.5 520.5V519.5M313 519.5h1M314.5 519.5V518.5M314 518.5h1M315 518.5h1M316.5 518.5V517.5M316 517.5h1M317.5 517.5V516.5M317 516.5h1M318.5 516.5V515.5M318 515.5h1M319.5 515.5V514.5M319 514.5h1M320.5 514.5V513.5M320 513.5h1M321.5 513.5V512.5M321 512.5h1M322.5 512.5V511.5M322 511.5h1M323.5 511.5V509.5M323 509.5h1M324.5 509.5V508.5M324 508.5h1M325.5 508.5V507.5M325 507.5h1M326.5 507.5V506.5M326 506.5h1M327.5 506.5V505.5M327 505.5h1M328.5 505.5V503.5M328 503.5h1M329.5 503.5V502.5M329 502.5h1M330.5 502.5V501.5M330 501.5h1M331.5 501.5V500.5M331 500.5h1M332.5 500.5V499.5M332 499.5h1M333 499.5h1M334.5 499.5V498.5M334 498.5h1M335.5 498.5V497.5M335 497.5h1M336.5 497.5V496.5M336 496.5h1M337.5 496.5V495.5M337 495.5h1M338 495.5h1M339.5 495.5V494.5M339 494.5h1M340.5 494.5V493.5M340 493.5h1M341.5 493.5V492.5M341 492.5h1M342 492.5h1M343.5 492.5V491.5M343 491.5h1M344.5 491.5V490.5M344 490.5h1M345 490.5h1M346.5 490.5V489.5M346 489.5h1M347.5 489.5V488.5M347 488.5h1M348.5 488.5V487.5M348 487.5h1M349 487.5h1M350.5 487.5V486.5M350 486.5h1M351 486.5h1M352.5 486.5V485.5M352 485.5h1M353.5 485.5V484.5M353 484.5h1M354 484.5h1M355 484.5h1M356.5 484.5V483.5M356 483.5h1M357.5 483.5V482.5M357 482.5h1M358 482.5h1M359 482.5h1M360.5 482.5V481.5M360 481.5h1M361 481.5h1M362.5 481.5V480.5M362 480.5h1M363 480.5h1M364.5 480.5V479.5M364 479.5h1M365 479.5h1M366 479.5h1M367.5 479.5V478.5M367 478.5h1M368 478.5h1M369.5 478.5V477.5M369 477.5h1M370 477.5h1M371 477.5h1M372 477.5h1M373.5 477.5V476.5M373 476.5h1M374 476.5h1M375 476.5h1M376 476.5h1M377 476.5h1M378 476.5h1M379 476.5h1M380.5 476.5V475.5M380 475.5h1M381 475.5h1M382 475.5h1M383 475.5h1M384 475.5h1M385 475.5h1M386.5 475.5V476.5M386 476.5h1M387 476.5h1M388 476.5h1M389 476.5h1M390 476.5h1M391 476.5h1M392.5 476.5V477.5M392 477.5h1M393.5 477.5V478.5M393 478.5h1M394 478.5h1M395 478.5h1M396.5 478.5V479.5M396 479.5h1M397.5 479.5V480.5M397 480.5h1M398 480.5h1M399 480.5h1M400.5 480.5V481.5M400 481.5h1M401.5 481.5V482.5M401 482.5h1M402 482.5h1M403 482.5h1M404.5 482.5V483.5M404 483.5h1M405.5 483.5V484.5M405 484.5h1M406 484.5h1M407 484.5h1M408.5 484.5V485.5M408 485.5h1M409.5 485.5V486.5M409 486.5h1M410 486.5h1M411.5 486.5V487.5M411 487.5h1M412 487.5h1M413.5 487.5V488.5M413 488.5h1M414.5 488.5V489.5M414 489.5h1M415.5 489.5V490.5M415 490.5h1M416 490.5h1M417.5 490.5V491.5M417 491.5h1M418.5 491.5V492.5M418 492.5h1M419 492.5h1M420.5 492.5V493.5M420 493.5h1M421.5 493.5V494.5M421 494.5h1M422.5 494.5V496.5M422 496.5h1M423.5 496.5V497.5M423 497.5h1M424.5 497.5V498.5M424 498.5h1M425.5 498.5V500.5M425 500.5h1M426.5 500.5V501.5M426 501.5h1M427.5 501.5V502.5M427 502.5h1M428.5 502.5V503.5M428 503.5h1M429.5 503.5V505.5M429 505.5h1M430.5 505.5V506.5M430 506.5h1M431.5 506.5V507.5M431 507.5h1M432.5 507.5V508.5M432 508.5h1M433 508.5h1M434.5 508.5V509.5M434 509.5h1M435.5 509.5V510.5M435 510.5h1M436 510.5h1M437.5 510.5V511.5M437 511.5h1M438.5 511.5V512.5M438 512.5h1M439.5 512.5V513.5M439 513.5h1M440.5 513.5V514.5M440 514.5h1M441 514.5h1M442.5 514.5V515.5M442 515.5h1M443.5 515.5V516.5M443 516.5h1M444 516.5h1M445.5 516.5V517.5M445 517.5h1M446.5 517.5V518.5M446 518.5h1M447 518.5h1M448.5 518.5V519.5M448 519.5h1M449.5 519.5V520.5M449 520.5h1M450.5 520.5V521.5M450 521.5h1M451 521.5h1M452.5 521.5V522.5M452 522.5h1M453.5 522.5V523.5M453 523.5h1M454 523.5h1M455.5 523.5V524.5M455 524.5h1M456 524.5h1M457.5 524.5V525.5M457 525.5h1M458.5 525.5V526.5M458 526.5h1M459 526.5h1M460.5 526.5V527.5M460 527.5h1M461 527.5h1M462.5 527.5V528.5M462 528.5h1M463 528.5h1M464.5 528.5V529.5M464 529.5h1M465.5 529.5V530.5M465 530.5h1M466 530.5h1M467 530.5h1M468.5 530.5V531.5M468 531.5h1M469.5 531.5V532.5M469 532.5h1M470 532.5h1M471 532.5h1M472.5 532.5V533.5M472 533.5h1M473 533.5h1M474 533.5h1M475.5 533.5V534.5M475 534.5h1M476 534.5h1M477 534.5h1M478 534.5h1M479 534.5h1M480.5 534.5V535.5M480 535.5h1M481 535.5h1M482 535.5h1M483 535.5h1M484 535.5h1M485.5 535.5V536.5M485 536.5h1M486 536.5h1M487 536.5h1M488 536.5h1M489 536.5h1M490.5 536.5V535.5M490 535.5h1M491 535.5h1M492.5 535.5V534.5M492 534.5h1M493 534.5h1M494.5 534.5V533.5M494 533.5h1M495 533.5h1M496.5 533.5V532.5M496 532.5h1M497 532.5h1M498 532.5h1M499.5 532.5V531.5M499 531.5h1M500.5 531.5V530.5M500 530.5h1M501 530.5h1M502 530.5h1M503.5 530.5V529.5M503 529.5h1M504.5 529.5V528.5M504 528.5h1M505 528.5h1M506 528.5h1M507.5 528.5V527.5M507 527.5h1M508.5 527.5V526.5M508 526.5h1M509 526.5h1M510.5 526.5V525.5M510 525.5h1M511 525.5h1M512.5 525.5V524.5M512 524.5h1M513.5 524.5V523.5M513 523.5h1M514 523.5h1M515.5 523.5V522.5M515 522.5h1M516 522.5h1M517.5 522.5V521.5M517 521.5h1M518.5 521.5V520.5M518 520.5h1M519.5 520.5V519.5M519 519.5h1M520.5 519.5V518.5M520 518.5h1M521.5 518.5V517.5M521 517.5h1M522.5 517.5V516.5M522 516.5h1M523.5 516.5V515.5M523 515.5h1M524.5 515.5V514.5M524 514.5h1M525.5 514.5V513.5M525 513.5h1M526.5 513.5V512.5M526 512.5h1M527.5 512.5V511.5M527 511.5h1M528.5 511.5V510.5M528 510.5h1M529.5 510.5V509.5M529 509.5h1M530.5 509.5V508.5M530 508.5h1M531.5 508.5V507.5M531 507.5h1M532.5 507.5V506.5M532 506.5h1M533.5 506.5V504.5M533 504.5h1M534.5 504.5V503.5M534 503.5h1M535.5 503.5V502.5M535 502.5h1M536.5 502.5V501.5M536 501.5h1M537.5 501.5V500.5M537 500.5h1M538.5 500.5V499.5M538 499.5h1M539.5 499.5V498.5M539 498.5h1M540.5 498.5V497.5M540 497.5h1M541.5 497.5V496.5M541 496.5h1M542 496.5h1M543.5 496.5V495.5M543 495.5h1M544.5 495.5V494.5M544 494.5h1M545.5 494.5V493.5M545 493.5h1M546.5 493.5V492.5M546 492.5h1M547.5 492.5V491.5M547 491.5h1M548.5 491.5V490.5M548 490.5h1M549 490.5h1M550.5 490.5V489.5M550 489.5h1M551 489.5h1M552.5 489.5V488.5M552 488.5h1M553.5 488.5V487.5M553 487.5h1M554 487.5h1M555.5 487.5V486.5M555 486.5h1M556 486.5h1M557.5 486.5V485.5M557 485.5h1M558.5 485.5V484.5M558 484.5h1M559 484.5h1M560.5 484.5V483.5M560 483.5h1M561 483.5h1M562.5 483.5V482.5M562 482.5h1M563.5 482.5V481.5M563 481.5h1M564 481.5h1M565.5 481.5V480.5M565 480.5h1M566 480.5h1M567.5 480.5V479.5M567 479.5h1M568 479.5h1M569.5 479.5V478.5M569 478.5h1M570 478.5h1M571 478.5h1M572 478.5h1M573.5 478.5V477.5M573 477.5h1M574 477.5h1M575 477.5h1M576.5 477.5V476.5M576 476.5h1M577 476.5h1M578 476.5h1M579 476.5h1M580 476.5h1M581 476.5h1M582 476.5h1M583 476.5h1M584.5 476.5V475.5M584 475.5h1M585 475.5h1M586 475.5h1M587 475.5h1M588 475.5h1M589 475.5h1M590 475.5h1M591.5 475.5V476.5M591 476.5h1M592 476.5h1M593.5 476.5V477.5M593 477.5h1M594 477.5h1M595 477.5h1M596.5 477.5V478.5M596 478.5h1M597 478.5h1M598 478.5h1M599.5 478.5V479.5M599 479.5h1M600 479.5h1M601.5 479.5V480.5M601 480.5h1M602 480.5h1M603 480.5h1M604.5 480.5V481.5M604 481.5h1M605.5 481.5V482.5M605 482.5h1M606 482.5h1M607 482.5h1M608.5 482.5V483.5M608 483.5h1M609.5 483.5V484.5M609 484.5h1M610 484.5h1M611 484.5h1M612.5 484.5V485.5M612 485.5h1M613.5 485.5V486.5M613 486.5h1M614 486.5h1M615.5 486.5V487.5M615 487.5h1M616 487.5h1M617.5 487.5V488.5M617 488.5h1M618.5 488.5V489.5M618 489.5h1M619 489.5h1M620.5 489.5V490.5M620 490.5h1M621 490.5h1M622.5 490.5V491.5M622 491.5h1M623.5 491.5V492.5M623 492.5h1M624.5 492.5V493.5M624 493.5h1M625.5 493.5V494.5M625 494.5h1M626.5 494.5V495.5M626 495.5h1M627.5 495.5V496.5M627 496.5h1M628.5 496.5V497.5M628 497.5h1M629.5 497.5V498.5M629 498.5h1"/>
<path fill="none" stroke="#ffff80" d="M30 505.5h1M31 505.5h1M32 505.5h1M33 505.5h1M34 505.5h1M35 505.5h1M36 505.5h1M37 505.5h1M38 505.5h1M39 505.5h1M40 505.5h1M41 505.5h1M42 505.5h1M43 505.5h1M44 505.5h1M45 505.5h1M46 505.5h1M47 505.5h1M48 505.5h1M49 505.5h1M50 505.5h1M51 505.5h1M52 505.5h1M53 505.5h1M54 505.5h1M55 505.5h1M56 505.5h1M57 505.5h1M58 505.5h1M59 505.5h1M60 505.5h1M61 505.5h1M62 505.5h1M63 505.5h1M64 505.5h1M65 505.5h1M66 505.5h1M67 505.5h1M68 505.5h1M69.5 505.5V507.5M69 507.5h1M70.5 507.5V508.5M70 508.5h1M71.5 508.5V510.5M71 510.5h1M72 510.5h1M73.5 510.5V511.5M73 511.5h1M74 511.5h1M75 511.5h1M76 511.5h1M77.5 511.5V510.5M77 510.5h1M78.5 510.5V509.5M78 509.5h1M79.5 509.5V507.5M79 507.5h1M80.5 507.5V505.5M80 505.5h1M81 505.5h1M82 505.5h1M83 505.5h1M84 505.5h1M85 505.5h1M86 505.5h1M87 505.5h1M88 505.5h1M89 505.5h1M90 505.5h1M91 505.5h1M92 505.5h1M93 505.5h1M94 505.5h1M95 505.5h1M96 505.5h1M97 505.5h1M98 505.5h1M99 505.5h1M100 505.5h1M101 505.5h1M102 505.5h1M103 505.5h1M104 505.5h1M105 505.5h1M106 505.5h1M107 505.5h1M108 505.5h1M109 505.5h1M110 505.5h1M111 505.5h1M112 505.5h1M113 505.5h1M114 505.5h1M115 505.5h1M116 505.5h1M117 505.5h1M118 505.5h1M119 505.5h1M120 505.5h1M121 505.5h1M122 505.5h1M123 505.5h1M124 505.5h1M125 505.5h1M126 505.5h1M127 505.5h1M128 505.5h1M129 505.5h1M130 505.5h1M131 505.5h1M132 505.5h1M133 505.5h1M134 505.5h1M135 505.5h1M136 505.5h1M137 505.5h1M138 505.5h1M139 505.5h1M140 505.5h1M141 505.5h1M142 505.5h1M143 505.5h1M144 505.5h1M145 505.5h1M146 505.5h1M147 505.5h1M148 505.5h1M149 505.5h1M150 505.5h1M151 505.5h1M152 505.5h1M153 505.5h1M154 505.5h1M155 505.5h1M156 505.5h1M157 505.5h1M158 505.5h1M159 505.5h1M160 505.5h1M161 505.5h1M162 505.5h1M163 505.5h1M164 505.5h1M165 505.5h1M166 505.5h1M167 505.5h1M168 505.5h1M169 505.5h1M170 505.5h1M171.5 505.5V504.5M171 504.5h1M172.5 504.5V502.5M172 502.5h1M173.5 502.5V501.5M173 501.5h1M174.5 501.5V500.5M174 500.5h1M175.5 500.5V499.5M175 499.5h1M176.5 499.5V498.5M176 498.5h1M177 498.5h1M178 498.5h1M179 498.5h1M180.5 498.5V499.5M180 499.5h1M181.5 499.5V500.5M181 500.5h1M182.5 500.5V502.5M182 502.5h1M183.5 502.5V505.5M183 505.5h1M184 505.5h1M185 505.5h1M186 505.5h1M187 505.5h1M188 505.5h1M189 505.5h1M190 505.5h1M191 505.5h1M192 505.5h1M193 505.5h1M194 505.5h1M195 505.5h1M196 505.5h1M197 505.5h1M198 505.5h1M199 505.5h1M200 505.5h1M201 505.5h1M202 505.5h1M203 505.5h1M204 505.5h1M205 505.5h1M206 505.5h1M207 505.5h1M208 505.5h1M209 505.5h1M210 505.5h1M211 505.5h1M212 505.5h1M213 505.5h1M214 505.5h1M215 505.5h1M216 505.5h1M217 505.5h1M218 505.5h1M219 505.5h1M220 505.5h1M221 505.5h1M222 505.5h1M223 505.5h1M224 505.5h1M225 505.5h1M226 505.5h1M227 505.5h1M228 505.5h1M229 505.5h1M230 505.5h1M231 505.5h1M232 505.5h1M233 505.5h1M234 505.5h1M235 505.5h1M236 505.5h1M237 505.5h1M238 505.5h1M239 505.5h1M240 505.5h1M241 505.5h1M242 505.5h1M243 505.5h1M244 505.5h1M245 505.5h1M246 505.5h1M247 505.5h1M248 505.5h1M249 505.5h1M250 505.5h1M251 505.5h1M252 505.5h1M253 505.5h1M254 505.5h1M255 505.5h1M256 505.5h1M257 505.5h1M258 505.5h1M259 505.5h1M260 505.5h1M261 505.5h1M262 505.5h1M263 505.5h1M264 505.5h1M265 505.5h1M266 505.5h1M267 505.5h1M268 505.5h1M269 505.5h1M270 505.5h1M271 505.5h1M272 505.5h1M273 505.5h1M274 505.5h1M275.5 505.5V507.5M275 507.5h1M276.5 507.5V508.5M276 508.5h1M277.5 508.5V510.5M277 510.5h1M278 510.5h1M279.5 510.5V511.5M279 511.5h1M280 511.5h1M281 511.5h1M282 511.5h1M283.5 511.5V510.5M283 510.5h1M284.5 510.5V509.5M284 509.5h1M285.5 509.5V507.5M285 507.5h1M286.5 507.5V505.5M286 505.5h1M287 505.5h1M288 505.5h1M289 505.5h1M290 505.5h1M291 505.5h1M292 505.5h1M293 505.5h1M294 505.5h1M295 505.5h1M296 505.5h1M297 505.5h1M298 505.5h1M299 505.5h1M300 505.5h1M301 505.5h1M302 505.5h1M303 505.5h1M304 505.5h1M305 505.5h1M306 505.5h1M307 505.5h1M308 505.5h1M309 505.5h1M310 505.5h1M311 505.5h1M312 505.5h1M313 505.5h1M314 505.5h1M315 505.5h1M316 505.5h1M317 505.5h1M318 505.5h1M319 505.5h1M320 505.5h1M321 505.5h1M322 505.5h1M323 505.5h1M324 505.5h1M325 505.5h1M326 505.5h1M327 505.5h1M328 505.5h1M329 505.5h1M330 505.5h1M331 505.5h1M332 505.5h1M333 505.5h1M334 505.5h1M335 505.5h1M336 505.5h1M337 505.5h1M338 505.5h1M339 505.5h1M340 505.5h1M341 505.5h1M342 505.5h1M343 505.5h1M344 505.5h1M345 505.5h1M346 505.5h1M347 505.5h1M348 505.5h1M349 505.5h1M350 505.5h1M351 505.5h1M352 505.5h1M353 505.5h1M354 505.5h1M355 505.5h1M356 505.5h1M357 505.5h1M358 505.5h1M359 505.5h1M360 505.5h1M361 505.5h1M362 505.5h1M363 505.5h1M364 505.5h1M365 505.5h1M366 505.5h1M367 505.5h1M368 505.5h1M369 505.5h1M370 505.5h1M371 505.5h1M372 505.5h1M373 505.5h1M374 505.5h1M375 505.5h1M376.5 505.5V504.5M376 504.5h1M377.5 504.5V502.5M377 502.5h1M378.5 502.5V501.5M378 501.5h1M379.5 501.5V500.5M379 500.5h1M380.5 500.5V499.5M380 499.5h1M381.5 499.5V498.5M381 498.5h1M382 498.5h1M383 498.5h1M384 498.5h1M385.5 498.5V499.5M385 499.5h1M386.5 499.5V500.5M386 500.5h1M387.5 500.5V502.5M387 502.5h1M388.5 502.5V505.5M388 505.5h1M389 505.5h1M390 505.5h1M391 505.5h1M392 505.5h1M393 505.5h1M394 505.5h1M395 505.5h1M396 505.5h1M397 505.5h1M398 505.5h1M399 505.5h1M400 505.5h1M401 505.5h1M402 505.5h1M403 505.5h1M404 505.5h1M405 505.5h1M406 505.5h1M407 505.5h1M408 505.5h1M409 505.5h1M410 505.5h1M411 505.5h1M412 505.5h1M413 505.5h1M414 505.5h1M415 505.5h1M416 505.5h1M417 505.5h1M418 505.5h1M419 505.5h1M420 505.5h1M421 505.5h1M422 505.5h1M423 505.5h1M424 505.5h1M425 505.5h1M426 505.5h1M427 505.5h1M428 505.5h1M429 505.5h1M430 505.5h1M431 505.5h1M432 505.5h1M433 505.5h1M434 505.5h1M435 505.5h1M436 505.5h1M437 505.5h1M438 505.5h1M439 505.5h1M440 505.5h1M441 505.5h1M442 505.5h1M443 505.5h1M444 505.5h1M445 505.5h1M446 505.5h1M447 505.5h1M448 505.5h1M449 505.5h1M450 505.5h1M451 505.5h1M452 505.5h1M453 505.5h1M454 505.5h1M455 505.5h1M456 505.5h1M457 505.5h1M458 505.5h1M459 505.5h1M460 505.5h1M461 505.5h1M462 505.5h1M463 505.5h1M464 505.5h1M465 505.5h1M466 505.5h1M467 505.5h1M468 505.5h1M469 505.5h1M470 505.5h1M471 505.5h1M472 505.5h1M473 505.5h1M474 505.5h1M475 505.5h1M476 505.5h1M477 505.5h1M478 505.5h1M479.5 505.5V507.5M479 507.5h1M480.5 507.5V508.5M480 508.5h1M481.5 508.5V510.5M481 510.5h1M482 510.5h1M483.5 510.5V511.5M483 511.5h1M484 511.5h1M485 511.5h1M486 511.5h1M487.5 511.5V510.5M487 510.5h1M488.5 510.5V509.5M488 509.5h1M489.5 509.5V507.5M489 507.5h1M490.5 507.5V505.5M490 505.5h1M491 505.5h1M492 505.5h1M493 505.5h1M494 505.5h1M495 505.5h1M496 505.5h1M497 505.5h1M498 505.5h1M499 505.5h1M500 505.5h1M501 505.5h1M502 505.5h1M503 505.5h1M504 505.5h1M505 505.5h1M506 505.5h1M507 505.5h1M508 505.5h1M509 505.5h1M510 505.5h1M511 505.5h1M512 505.5h1M513 505.5h1M514 505.5h1M515 505.5h1M516 505.5h1M517 505.5h1M518 505.5h1M519 505.5h1M520 505.5h1M521 505.5h1M522 505.5h1M523 505.5h1M524 505.5h1M525 505.5h1M526 505.5h1M527 505.5h1M528 505.5h1M529 505.5h1M530 505.5h1M531 505.5h1M532 505.5h1M533 505.5h1M534 505.5h1M535 505.5h1M536 505.5h1M537 505.5h1M538 505.5h1M539 505.5h1M540 505.5h1M541 505.5h1M542 505.5h1M543 505.5h1M544 505.5h1M545 505.5h1M546 505.5h1M547 505.5h1M548 505.5h1M549 505.5h1M550 505.5h1M551 505.5h1M552 505.5h1M553 505.5h1M554 505.5h1M555 505.5h1M556 505.5h1M557 505.5h1M558 505.5h1M559 505.5h1M560 505.5h1M561 505.5h1M562 505.5h1M563 505.5h1M564 505.5h1M565 505.5h1M566 505.5h1M567 505.5h1M568 505.5h1M569 505.5h1M570 505.5h1M571 505.5h1M572 505.5h1M573 505.5h1M574 505.5h1M575 505.5h1M576 505.5h1M577 505.5h1M578 505.5h1M579 505.5h1M580 505.5h1M581.5 505.5V504.5M581 504.5h1M582.5 504.5V502.5M582 502.5h1M583.5 502.5V501.5M583 501.5h1M584.5 501.5V500.5M584 500.5h1M585.5 500.5V499.5M585 499.5h1M586.5 499.5V498.5M586 498.5h1M587 498.5h1M588 498.5h1M589 498.5h1M590.5 498.5V499.5M590 499.5h1M591.5 499.5V500.5M591 500.5h1M592.5 500.5V502.5M592 502.5h1M593.5 502.5V505.5M593 505.5h1M594 505.5h1M595 505.5h1M596 505.5h1M597 505.5h1M598 505.5h1M599 505.5h1M600 505.5h1M601 505.5h1M602 505.5h1M603 505.5h1M604 505.5h1M605 505.5h1M606 505.5h1M607 505.5h1M608 505.5h1M609 505.5h1M610 505.5h1M611 505.5h1M612 505.5h1M613 505.5h1M614 505.5h1M615 505.5h1M616 505.5h1M617 505.5h1M618 505.5h1M619 505.5h1M620 505.5h1M621 505.5h1M622 505.5h1M623 505.5h1M624 505.5h1M625 505.5h1M626 505.5h1M627 505.5h1M628 505.5h1M629 505.5h1"/>
</svg><svg width="800" height="600" style="position:absolute;left:0;top:0">
<text x="31.4" y="91" fill="#ff0000" stroke="#ff0000" stroke-width="0.4" font-size="11" font-weight="bold" font-family="Liberation Sans" textLength="26.2" lengthAdjust="spacingAndGlyphs">+U1:</text>
<text x="63.4" y="91" fill="#ff0000" stroke="#ff0000" stroke-width="0.4" font-size="11" font-weight="bold" font-family="Liberation Sans" textLength="35.2" lengthAdjust="spacingAndGlyphs">450.00</text>
<text x="103.9" y="91" fill="#ff0000" stroke="#ff0000" stroke-width="0.4" font-size="11" font-weight="bold" font-family="Liberation Sans" textLength="7.2" lengthAdjust="spacingAndGlyphs">V</text>
<text x="111.4" y="91" fill="#ff0090" stroke="#ff0090" stroke-width="0.4" font-size="11" font-weight="bold" font-family="Liberation Sans" textLength="23.2" lengthAdjust="spacingAndGlyphs">+I1:</text>
<text x="141.4" y="91" fill="#ff0090" stroke="#ff0090" stroke-width="0.4" font-size="11" font-weight="bold" font-family="Liberation Sans" textLength="37.2" lengthAdjust="spacingAndGlyphs">7.5000</text>
<text x="181.4" y="91" fill="#ff0090" stroke="#ff0090" stroke-width="0.4" font-size="11" font-weight="bold" font-family="Liberation Sans" textLength="8.2" lengthAdjust="spacingAndGlyphs">A</text>
<text x="30.4" y="197" fill="#ff0000" stroke="#ff0000" stroke-width="0.4" font-size="11" font-weight="bold" font-family="Liberation Sans" textLength="23.2" lengthAdjust="spacingAndGlyphs">-U1:</text>
<text x="56.4" y="197" fill="#ff0000" stroke="#ff0000" stroke-width="0.4" font-size="11" font-weight="bold" font-family="Liberation Sans" textLength="42.2" lengthAdjust="spacingAndGlyphs">-450.00</text>
<text x="102.9" y="197" fill="#ff0000" stroke="#ff0000" stroke-width="0.4" font-size="11" font-weight="bold" font-family="Liberation Sans" textLength="7.7" lengthAdjust="spacingAndGlyphs">V</text>
<text x="110.4" y="197" fill="#ff0090" stroke="#ff0090" stroke-width="0.4" font-size="11" font-weight="bold" font-family="Liberation Sans" textLength="21.2" lengthAdjust="spacingAndGlyphs">-I1:</text>
<text x="133.4" y="197" fill="#ff0090" stroke="#ff0090" stroke-width="0.4" font-size="11" font-weight="bold" font-family="Liberation Sans" textLength="40.2" lengthAdjust="spacingAndGlyphs">-7.5000</text>
<text x="179.4" y="197" fill="#ff0090" stroke="#ff0090" stroke-width="0.4" font-size="11" font-weight="bold" font-family="Liberation Sans" textLength="8.2" lengthAdjust="spacingAndGlyphs">A</text>
<text x="535" y="197" fill="#ffffff" font-size="12.5" font-weight="normal" font-family="Liberation Sans" textLength="17" lengthAdjust="spacingAndGlyphs">&lt;&lt;</text>
<text x="557" y="197" fill="#ffffff" font-size="11" font-weight="bold" font-family="Liberation Sans" textLength="51" lengthAdjust="spacingAndGlyphs">5 ms/div</text>
<text x="608.5" y="197" fill="#ffffff" font-size="12.5" font-weight="normal" font-family="Liberation Sans" textLength="17" lengthAdjust="spacingAndGlyphs">&gt;&gt;</text>
<text x="31.4" y="213" fill="#00ff00" stroke="#00ff00" stroke-width="0.4" font-size="11" font-weight="bold" font-family="Liberation Sans" textLength="26.2" lengthAdjust="spacingAndGlyphs">+U2:</text>
<text x="63.4" y="213" fill="#00ff00" stroke="#00ff00" stroke-width="0.4" font-size="11" font-weight="bold" font-family="Liberation Sans" textLength="35.2" lengthAdjust="spacingAndGlyphs">450.00</text>
<text x="103.9" y="213" fill="#00ff00" stroke="#00ff00" stroke-width="0.4" font-size="11" font-weight="bold" font-family="Liberation Sans" textLength="7.2" lengthAdjust="spacingAndGlyphs">V</text>
<text x="111.4" y="213" fill="#00ff80" stroke="#00ff80" stroke-width="0.4" font-size="11" font-weight="bold" font-family="Liberation Sans" textLength="23.2" lengthAdjust="spacingAndGlyphs">+I2:</text>
<text x="141.4" y="213" fill="#00ff80" stroke="#00ff80" stroke-width="0.4" font-size="11" font-weight="bold" font-family="Liberation Sans" textLength="37.2" lengthAdjust="spacingAndGlyphs">7.5000</text>
<text x="181.4" y="213" fill="#00ff80" stroke="#00ff80" stroke-width="0.4" font-size="11" font-weight="bold" font-family="Liberation Sans" textLength="8.2" lengthAdjust="spacingAndGlyphs">A</text>
<text x="30.4" y="319" fill="#00ff00" stroke="#00ff00" stroke-width="0.4" font-size="11" font-weight="bold" font-family="Liberation Sans" textLength="23.2" lengthAdjust="spacingAndGlyphs">-U2:</text>
<text x="56.4" y="319" fill="#00ff00" stroke="#00ff00" stroke-width="0.4" font-size="11" font-weight="bold" font-family="Liberation Sans" textLength="42.2" lengthAdjust="spacingAndGlyphs">-450.00</text>
<text x="102.9" y="319" fill="#00ff00" stroke="#00ff00" stroke-width="0.4" font-size="11" font-weight="bold" font-family="Liberation Sans" textLength="7.7" lengthAdjust="spacingAndGlyphs">V</text>
<text x="110.4" y="319" fill="#00ff80" stroke="#00ff80" stroke-width="0.4" font-size="11" font-weight="bold" font-family="Liberation Sans" textLength="21.2" lengthAdjust="spacingAndGlyphs">-I2:</text>
<text x="133.4" y="319" fill="#00ff80" stroke="#00ff80" stroke-width="0.4" font-size="11" font-weight="bold" font-family="Liberation Sans" textLength="40.2" lengthAdjust="spacingAndGlyphs">-7.5000</text>
<text x="179.4" y="319" fill="#00ff80" stroke="#00ff80" stroke-width="0.4" font-size="11" font-weight="bold" font-family="Liberation Sans" textLength="8.2" lengthAdjust="spacingAndGlyphs">A</text>
<text x="535" y="319" fill="#ffffff" font-size="12.5" font-weight="normal" font-family="Liberation Sans" textLength="17" lengthAdjust="spacingAndGlyphs">&lt;&lt;</text>
<text x="557" y="319" fill="#ffffff" font-size="11" font-weight="bold" font-family="Liberation Sans" textLength="51" lengthAdjust="spacingAndGlyphs">5 ms/div</text>
<text x="608.5" y="319" fill="#ffffff" font-size="12.5" font-weight="normal" font-family="Liberation Sans" textLength="17" lengthAdjust="spacingAndGlyphs">&gt;&gt;</text>
<text x="31.4" y="335" fill="#ff5500" stroke="#ff5500" stroke-width="0.4" font-size="11" font-weight="bold" font-family="Liberation Sans" textLength="26.2" lengthAdjust="spacingAndGlyphs">+U3:</text>
<text x="63.4" y="335" fill="#ff5500" stroke="#ff5500" stroke-width="0.4" font-size="11" font-weight="bold" font-family="Liberation Sans" textLength="35.2" lengthAdjust="spacingAndGlyphs">450.00</text>
<text x="103.9" y="335" fill="#ff5500" stroke="#ff5500" stroke-width="0.4" font-size="11" font-weight="bold" font-family="Liberation Sans" textLength="7.2" lengthAdjust="spacingAndGlyphs">V</text>
<text x="111.4" y="335" fill="#0000ff" stroke="#0000ff" stroke-width="0.4" font-size="11" font-weight="bold" font-family="Liberation Sans" textLength="23.2" lengthAdjust="spacingAndGlyphs">+I3:</text>
<text x="141.4" y="335" fill="#0000ff" stroke="#0000ff" stroke-width="0.4" font-size="11" font-weight="bold" font-family="Liberation Sans" textLength="37.2" lengthAdjust="spacingAndGlyphs">7.5000</text>
<text x="181.4" y="335" fill="#0000ff" stroke="#0000ff" stroke-width="0.4" font-size="11" font-weight="bold" font-family="Liberation Sans" textLength="8.2" lengthAdjust="spacingAndGlyphs">A</text>
<text x="30.4" y="441" fill="#ff5500" stroke="#ff5500" stroke-width="0.4" font-size="11" font-weight="bold" font-family="Liberation Sans" textLength="23.2" lengthAdjust="spacingAndGlyphs">-U3:</text>
<text x="56.4" y="441" fill="#ff5500" stroke="#ff5500" stroke-width="0.4" font-size="11" font-weight="bold" font-family="Liberation Sans" textLength="42.2" lengthAdjust="spacingAndGlyphs">-450.00</text>
<text x="102.9" y="441" fill="#ff5500" stroke="#ff5500" stroke-width="0.4" font-size="11" font-weight="bold" font-family="Liberation Sans" textLength="7.7" lengthAdjust="spacingAndGlyphs">V</text>
<text x="110.4" y="441" fill="#0000ff" stroke="#0000ff" stroke-width="0.4" font-size="11" font-weight="bold" font-family="Liberation Sans" textLength="21.2" lengthAdjust="spacingAndGlyphs">-I3:</text>
<text x="133.4" y="441" fill="#0000ff" stroke="#0000ff" stroke-width="0.4" font-size="11" font-weight="bold" font-family="Liberation Sans" textLength="40.2" lengthAdjust="spacingAndGlyphs">-7.5000</text>
<text x="179.4" y="441" fill="#0000ff" stroke="#0000ff" stroke-width="0.4" font-size="11" font-weight="bold" font-family="Liberation Sans" textLength="8.2" lengthAdjust="spacingAndGlyphs">A</text>
<text x="535" y="441" fill="#ffffff" font-size="12.5" font-weight="normal" font-family="Liberation Sans" textLength="17" lengthAdjust="spacingAndGlyphs">&lt;&lt;</text>
<text x="557" y="441" fill="#ffffff" font-size="11" font-weight="bold" font-family="Liberation Sans" textLength="51" lengthAdjust="spacingAndGlyphs">5 ms/div</text>
<text x="608.5" y="441" fill="#ffffff" font-size="12.5" font-weight="normal" font-family="Liberation Sans" textLength="17" lengthAdjust="spacingAndGlyphs">&gt;&gt;</text>
<text x="31.4" y="457" fill="#ffff00" stroke="#ffff00" stroke-width="0.4" font-size="11" font-weight="bold" font-family="Liberation Sans" textLength="26.2" lengthAdjust="spacingAndGlyphs">+U4:</text>
<text x="63.4" y="457" fill="#ffff00" stroke="#ffff00" stroke-width="0.4" font-size="11" font-weight="bold" font-family="Liberation Sans" textLength="35.2" lengthAdjust="spacingAndGlyphs">450.00</text>
<text x="103.9" y="457" fill="#ffff00" stroke="#ffff00" stroke-width="0.4" font-size="11" font-weight="bold" font-family="Liberation Sans" textLength="7.2" lengthAdjust="spacingAndGlyphs">V</text>
<text x="111.4" y="457" fill="#ffff80" stroke="#ffff80" stroke-width="0.4" font-size="11" font-weight="bold" font-family="Liberation Sans" textLength="23.2" lengthAdjust="spacingAndGlyphs">+I4:</text>
<text x="141.4" y="457" fill="#ffff80" stroke="#ffff80" stroke-width="0.4" font-size="11" font-weight="bold" font-family="Liberation Sans" textLength="37.2" lengthAdjust="spacingAndGlyphs">7.5000</text>
<text x="181.4" y="457" fill="#ffff80" stroke="#ffff80" stroke-width="0.4" font-size="11" font-weight="bold" font-family="Liberation Sans" textLength="8.2" lengthAdjust="spacingAndGlyphs">A</text>
<text x="30.4" y="563" fill="#ffff00" stroke="#ffff00" stroke-width="0.4" font-size="11" font-weight="bold" font-family="Liberation Sans" textLength="23.2" lengthAdjust="spacingAndGlyphs">-U4:</text>
<text x="56.4" y="563" fill="#ffff00" stroke="#ffff00" stroke-width="0.4" font-size="11" font-weight="bold" font-family="Liberation Sans" textLength="42.2" lengthAdjust="spacingAndGlyphs">-450.00</text>
<text x="102.9" y="563" fill="#ffff00" stroke="#ffff00" stroke-width="0.4" font-size="11" font-weight="bold" font-family="Liberation Sans" textLength="7.7" lengthAdjust="spacingAndGlyphs">V</text>
<text x="110.4" y="563" fill="#ffff80" stroke="#ffff80" stroke-width="0.4" font-size="11" font-weight="bold" font-family="Liberation Sans" textLength="21.2" lengthAdjust="spacingAndGlyphs">-I4:</text>
<text x="133.4" y="563" fill="#ffff80" stroke="#ffff80" stroke-width="0.4" font-size="11" font-weight="bold" font-family="Liberation Sans" textLength="40.2" lengthAdjust="spacingAndGlyphs">-7.5000</text>
<text x="179.4" y="563" fill="#ffff80" stroke="#ffff80" stroke-width="0.4" font-size="11" font-weight="bold" font-family="Liberation Sans" textLength="8.2" lengthAdjust="spacingAndGlyphs">A</text>
<text x="535" y="563" fill="#ffffff" font-size="12.5" font-weight="normal" font-family="Liberation Sans" textLength="17" lengthAdjust="spacingAndGlyphs">&lt;&lt;</text>
<text x="557" y="563" fill="#ffffff" font-size="11" font-weight="bold" font-family="Liberation Sans" textLength="51" lengthAdjust="spacingAndGlyphs">5 ms/div</text>
<text x="608.5" y="563" fill="#ffffff" font-size="12.5" font-weight="normal" font-family="Liberation Sans" textLength="17" lengthAdjust="spacingAndGlyphs">&gt;&gt;</text>
<text x="4" y="596" fill="#ffffff" font-size="14" font-weight="bold" font-family="Liberation Sans" textLength="44" lengthAdjust="spacingAndGlyphs">Update</text>
<text x="64" y="596" fill="#ffffff" font-size="14" font-weight="bold" font-family="Liberation Sans" textLength="27" lengthAdjust="spacingAndGlyphs">8042</text>
<text x="96" y="596" fill="#ffffff" font-size="14" font-weight="bold" font-family="Liberation Sans" textLength="5" lengthAdjust="spacingAndGlyphs">(</text>
<text x="103" y="596" fill="#ffffff" font-size="14" font-weight="bold" font-family="Liberation Sans" textLength="40" lengthAdjust="spacingAndGlyphs">500ms</text>
<text x="146" y="596" fill="#ffffff" font-size="14" font-weight="bold" font-family="Liberation Sans" textLength="5" lengthAdjust="spacingAndGlyphs">)</text>
<text x="156" y="596" fill="#ffffff" font-size="14" font-weight="bold" font-family="Liberation Sans" textLength="41" lengthAdjust="spacingAndGlyphs">102399</text>
<text x="201" y="596" fill="#ffffff" font-size="14" font-weight="bold" font-family="Liberation Sans" textLength="29" lengthAdjust="spacingAndGlyphs">Sum</text>
<text x="516" y="596" fill="#ffffff" font-size="14" font-weight="bold" font-family="Liberation Sans" textLength="64" lengthAdjust="spacingAndGlyphs">2022/08/08</text>
<text x="588" y="596" fill="#ffffff" font-size="14" font-weight="bold" font-family="Liberation Sans" textLength="50" lengthAdjust="spacingAndGlyphs">09:02:11</text>
<rect x="642" y="583" width="1" height="10" fill="#ffffff"/>
<rect x="642" y="593" width="1" height="6" fill="#000080"/>
</svg></div></body></html>
